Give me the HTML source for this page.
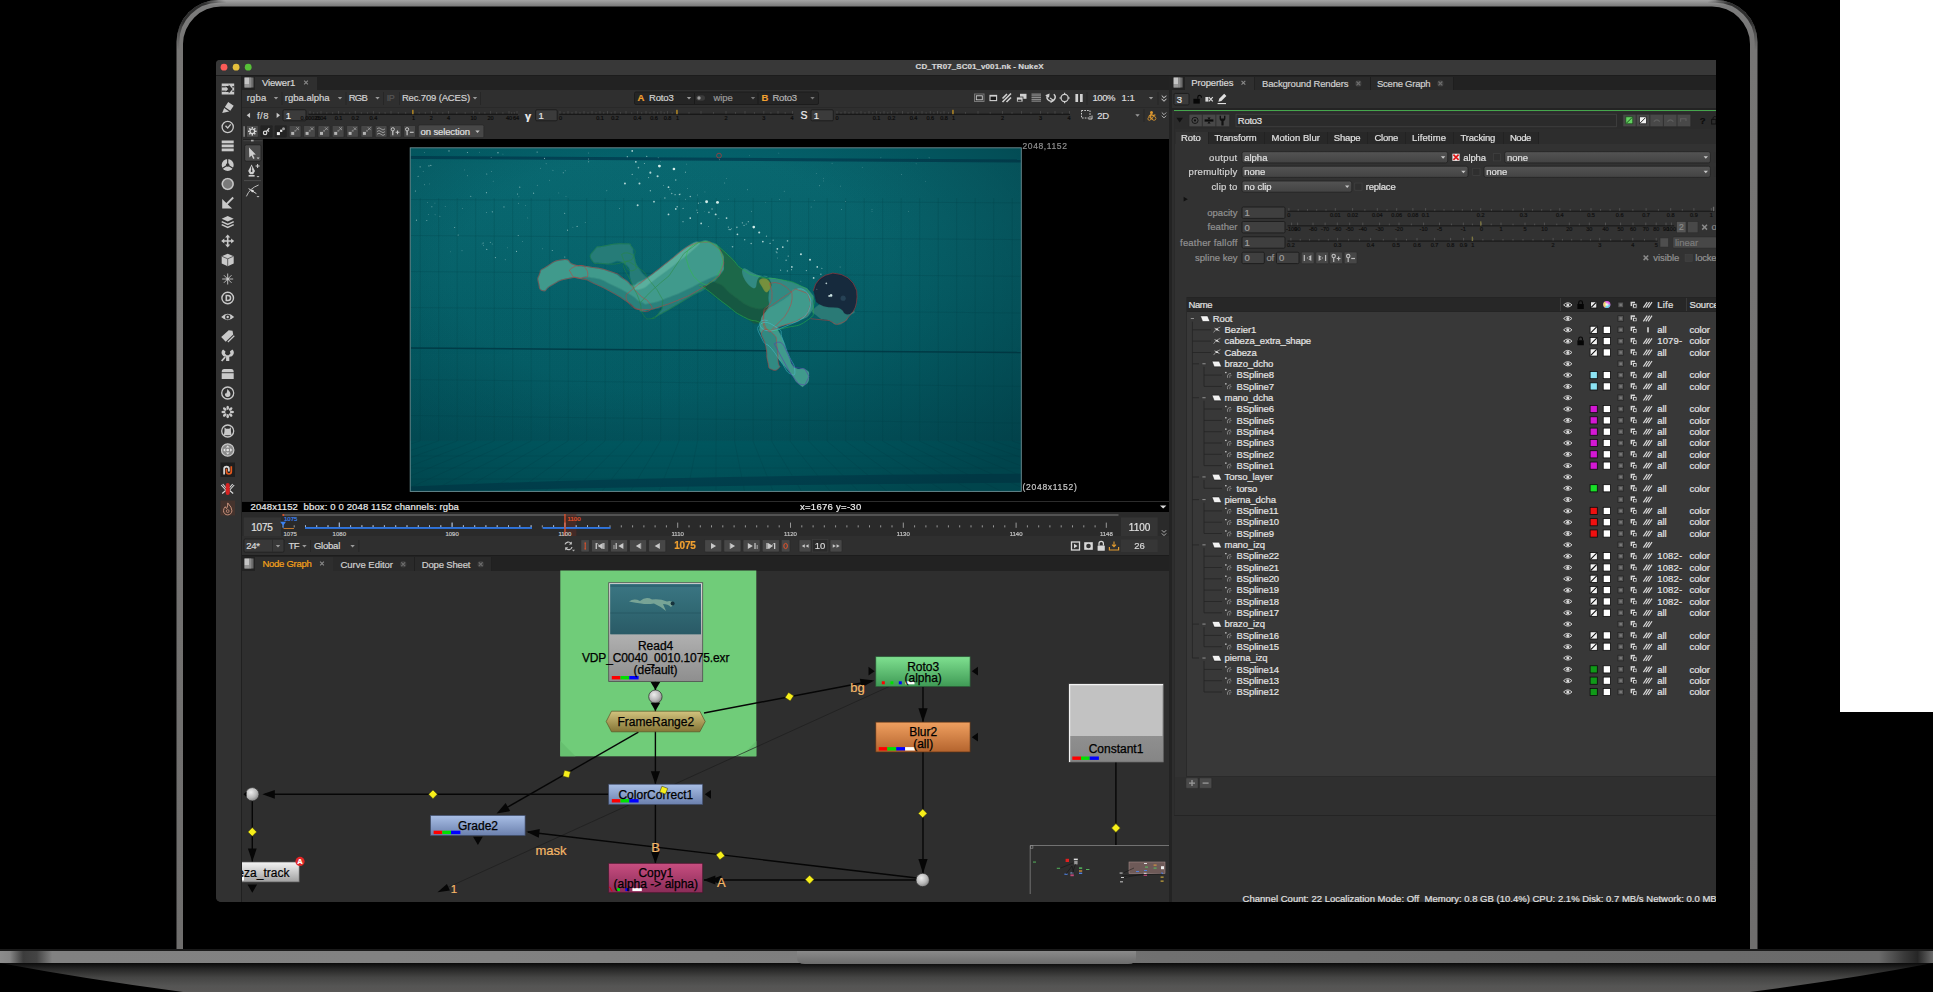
<!DOCTYPE html>
<html><head><meta charset="utf-8"><title>NukeX</title>
<style>
html,body{margin:0;padding:0;background:#000;}
body{width:1933px;height:992px;overflow:hidden;position:relative;font-family:"Liberation Sans",sans-serif;}
#r{position:absolute;left:0;top:0;width:1933px;height:992px;overflow:hidden;background:#000;}
#r>div{position:absolute;}
#r>span{position:absolute;white-space:nowrap;display:block;-webkit-text-stroke:0.2px;}
#r>svg{position:absolute;left:0;top:0;}
</style></head><body>
<div id="r">
<svg width="1933" height="992" viewBox="0 0 1933 992">
<defs>
<linearGradient id="lidg" x1="0" y1="0" x2="0" y2="1"><stop offset="0" stop-color="#a4a4a4"/><stop offset="0.006" stop-color="#7c7c7c"/><stop offset="0.05" stop-color="#777675"/><stop offset="1" stop-color="#6f6e6d"/></linearGradient>
<linearGradient id="cshL" x1="0" y1="1" x2="1" y2="0"><stop offset="0" stop-color="#2a2a2a" stop-opacity="0"/><stop offset="0.35" stop-color="#2a2a2a" stop-opacity="0.95"/><stop offset="0.75" stop-color="#2a2a2a" stop-opacity="0.95"/><stop offset="1" stop-color="#2a2a2a" stop-opacity="0"/></linearGradient>
<linearGradient id="cshR" x1="1" y1="1" x2="0" y2="0"><stop offset="0" stop-color="#2a2a2a" stop-opacity="0"/><stop offset="0.35" stop-color="#2a2a2a" stop-opacity="0.95"/><stop offset="0.75" stop-color="#2a2a2a" stop-opacity="0.95"/><stop offset="1" stop-color="#2a2a2a" stop-opacity="0"/></linearGradient>
<linearGradient id="basetop" x1="0" y1="0" x2="1933" y2="0" gradientUnits="userSpaceOnUse">
<stop offset="0" stop-color="#8c8c8c"/><stop offset="0.005" stop-color="#868686"/><stop offset="0.012" stop-color="#3c3c3c"/><stop offset="0.019" stop-color="#444"/><stop offset="0.027" stop-color="#818181"/><stop offset="0.2" stop-color="#828282"/><stop offset="0.42" stop-color="#7e7e7e"/><stop offset="0.6" stop-color="#707070"/><stop offset="0.8" stop-color="#6c6c6c"/><stop offset="0.972" stop-color="#6a6a6a"/><stop offset="0.985" stop-color="#3a3a3a"/><stop offset="0.992" stop-color="#262626"/><stop offset="1" stop-color="#6a6a6a"/></linearGradient>
<linearGradient id="basebot" x1="0" y1="0" x2="0" y2="1"><stop offset="0" stop-color="#0a0a0a"/><stop offset="0.2" stop-color="#262626"/><stop offset="0.5" stop-color="#454544"/><stop offset="0.8" stop-color="#555554"/><stop offset="1" stop-color="#585756"/></linearGradient>
<linearGradient id="notch" x1="0" y1="0" x2="0" y2="1"><stop offset="0" stop-color="#8a8a8a"/><stop offset="1" stop-color="#6c6c6c"/></linearGradient>
<linearGradient id="gGray" x1="0" y1="0" x2="0" y2="1"><stop offset="0" stop-color="#d6d6d6"/><stop offset="1" stop-color="#8e8e8e"/></linearGradient>
<linearGradient id="gGray2" x1="0" y1="0" x2="0" y2="1"><stop offset="0" stop-color="#f4f4f4"/><stop offset="1" stop-color="#a0a0a0"/></linearGradient>
<linearGradient id="gBlue" x1="0" y1="0" x2="0" y2="1"><stop offset="0" stop-color="#a9bfe6"/><stop offset="1" stop-color="#6b80ad"/></linearGradient>
<linearGradient id="gGreen" x1="0" y1="0" x2="0" y2="1"><stop offset="0" stop-color="#7fe090"/><stop offset="1" stop-color="#3f9a55"/></linearGradient>
<linearGradient id="gOrange" x1="0" y1="0" x2="0" y2="1"><stop offset="0" stop-color="#f0a060"/><stop offset="1" stop-color="#b4642e"/></linearGradient>
<linearGradient id="gMag" x1="0" y1="0" x2="0" y2="1"><stop offset="0" stop-color="#c84e80"/><stop offset="1" stop-color="#8a2c58"/></linearGradient>
<linearGradient id="gKhaki" x1="0" y1="0" x2="0" y2="1"><stop offset="0" stop-color="#d2c37e"/><stop offset="1" stop-color="#857536"/></linearGradient>
<linearGradient id="gConst" x1="0" y1="0" x2="0" y2="1"><stop offset="0" stop-color="#a4a4a4"/><stop offset="1" stop-color="#858585"/></linearGradient>
<radialGradient id="gDot" cx="0.4" cy="0.35" r="0.7"><stop offset="0" stop-color="#ededed"/><stop offset="0.6" stop-color="#b8b8b8"/><stop offset="1" stop-color="#7c7c7c"/></radialGradient>
<linearGradient id="thumb" x1="0" y1="0" x2="0" y2="1"><stop offset="0" stop-color="#3b7683"/><stop offset="0.5" stop-color="#316974"/><stop offset="1" stop-color="#2a5a66"/></linearGradient>
<linearGradient id="ddg" x1="0" y1="0" x2="0" y2="1"><stop offset="0" stop-color="#545454"/><stop offset="1" stop-color="#434343"/></linearGradient>
<radialGradient id="cw"><stop offset="0" stop-color="#fff"/><stop offset="1" stop-color="#fff" stop-opacity="0"/></radialGradient>
<clipPath id="phc"><rect x="410.2" y="147.8" width="611.0999999999999" height="343.59999999999997"/></clipPath>
<linearGradient id="water" x1="0" y1="0" x2="0" y2="1"><stop offset="0" stop-color="#096971"/><stop offset="0.2" stop-color="#08656d"/><stop offset="0.5" stop-color="#055f67"/><stop offset="0.85" stop-color="#035962"/><stop offset="0.86" stop-color="#046168"/><stop offset="1" stop-color="#04636a"/></linearGradient>
<radialGradient id="wlight" cx="0.12" cy="0.1" r="0.75"><stop offset="0" stop-color="#0a7a84" stop-opacity="0.12"/><stop offset="1" stop-color="#0a7a84" stop-opacity="0"/></radialGradient>
<radialGradient id="vig" cx="0.42" cy="0.36" r="0.78"><stop offset="0" stop-color="#003038" stop-opacity="0"/><stop offset="0.45" stop-color="#003038" stop-opacity="0.04"/><stop offset="1" stop-color="#002830" stop-opacity="0.5"/></radialGradient>
<filter id="swb" x="-5%" y="-5%" width="110%" height="110%"><feGaussianBlur stdDeviation="4"/></filter>
</defs>
<rect x="1840" y="0" width="93" height="712" fill="#fff"/>
<path d="M176.5 952 V42 A42 42 0 0 1 218.5 0 H1715.5 A42 42 0 0 1 1757.5 42 V952 Z" fill="url(#lidg)"/>
<path d="M183 952 V44 A38 38 0 0 1 221 6.5 H1712 A38 38 0 0 1 1750 44 V952 Z" fill="#000"/>
<path d="M177.9 50 V42 A40.6 40.6 0 0 1 218.5 1.4 H226" fill="none" stroke="url(#cshL)" stroke-width="2.8"/>
<path d="M1756.1 50 V42 A40.6 40.6 0 0 0 1715.5 1.4 H1708" fill="none" stroke="url(#cshR)" stroke-width="2.8"/>
<rect x="0" y="949" width="1933" height="2" fill="#1a1a1a"/>
<rect x="0" y="951" width="1933" height="12" fill="url(#basetop)"/>
<path d="M0 963 H1933 Q1850 979 1750 992 H183 Q85 979 0 963 Z" fill="url(#basebot)"/>
<path d="M797 951 H1136 V958 Q1136 964 1128 964 H805 Q797 964 797 958 Z" fill="url(#notch)"/>
</svg>
<div style="left:216px;top:60px;width:1500px;height:842px;background:#2e2e2e;border-radius:4px 0 0 5px;"></div>
<div style="left:216px;top:60px;width:1500px;height:15px;background:#383838;border-radius:4px 0 0 0;"></div>
<div style="left:216px;top:75px;width:1500px;height:1px;background:#1c1c1c;"></div>
<div style="left:216px;top:76px;width:25px;height:826px;background:#313131;border-radius:0 0 0 5px;"></div>
<div style="left:241px;top:76px;width:1px;height:826px;background:#202020;"></div>
<div style="left:242px;top:76px;width:927px;height:14px;background:#222222;"></div>
<div style="left:255px;top:77px;width:62px;height:13px;background:#2f2f2f;"></div>
<div style="left:242px;top:90px;width:927px;height:48.6px;background:#2f2f2f;"></div>
<div style="left:242px;top:106.5px;width:927px;height:1px;background:#292929;"></div>
<div style="left:242px;top:138.6px;width:927px;height:362.4px;background:#000;"></div>
<div style="left:242px;top:138.6px;width:21.3px;height:362.2px;background:#303030;"></div>
<div style="left:242px;top:500.8px;width:927px;height:1px;background:#2c2c2c;"></div>
<div style="left:242px;top:501.8px;width:927px;height:9.8px;background:#000;"></div>
<div style="left:242px;top:511.6px;width:927px;height:24.4px;background:#2a2a2a;"></div>
<div style="left:242px;top:536px;width:927px;height:19px;background:#2f2f2f;"></div>
<div style="left:242px;top:554.5px;width:927px;height:1px;background:#1c1c1c;"></div>
<div style="left:242px;top:555.5px;width:927px;height:15px;background:#222222;"></div>
<div style="left:255px;top:556.5px;width:78.4px;height:14px;background:#2e2e2e;"></div>
<div style="left:242px;top:570.5px;width:927px;height:331.5px;background:#2e2e2e;"></div>
<div style="left:1169px;top:76px;width:3px;height:826px;background:#232323;"></div>
<div style="left:1172px;top:76px;width:544px;height:14px;background:#222222;"></div>
<div style="left:1184.5px;top:77px;width:69.5px;height:13px;background:#2f2f2f;"></div>
<div style="left:1172px;top:90px;width:544px;height:17.5px;background:#2f2f2f;"></div>
<div style="left:1172px;top:107.5px;width:544px;height:2.5px;background:#232323;"></div>
<div style="left:1174px;top:110.1px;width:542px;height:1.2px;background:#46a64d;"></div>
<div style="left:1174px;top:111.5px;width:542px;height:704px;background:#323232;"></div>
<div style="left:1174px;top:111.5px;width:542px;height:17.5px;background:#2b2b2b;"></div>
<div style="left:1174px;top:129px;width:542px;height:15.4px;background:#2d2d2d;"></div>
<div style="left:1174px;top:111.5px;width:1px;height:704px;background:#2a2a2a;"></div>
<div style="left:1175px;top:776.8px;width:541px;height:38.2px;background:#2f2f2f;"></div>
<div style="left:1174px;top:815px;width:542px;height:1px;background:#242424;"></div>
<div style="left:1172px;top:816px;width:544px;height:86px;background:#2e2e2e;"></div>
<div style="left:333.4px;top:556.5px;width:80.6px;height:14px;background:#2a2a2a;"></div>
<div style="left:414px;top:556.5px;width:77px;height:14px;background:#2a2a2a;"></div>
<div style="left:413.5px;top:556.5px;width:1px;height:14px;background:#202020;"></div>
<div style="left:491px;top:556.5px;width:1px;height:14px;background:#202020;"></div>
<div style="left:1254.5px;top:77px;width:115.5px;height:13px;background:#2a2a2a;"></div>
<div style="left:1370.5px;top:77px;width:82px;height:13px;background:#2a2a2a;"></div>
<div style="left:1370px;top:77px;width:1px;height:13px;background:#1e1e1e;"></div>
<div style="left:1452.5px;top:77px;width:1px;height:13px;background:#1e1e1e;"></div>
<div style="left:1176px;top:131.6px;width:362px;height:12.8px;background:#282828;"></div>
<div style="left:1176px;top:131.6px;width:32px;height:12.8px;background:#323232;"></div>
<div style="left:1208px;top:131.6px;width:1px;height:12.8px;background:#222;"></div>
<div style="left:1264px;top:131.6px;width:1px;height:12.8px;background:#222;"></div>
<div style="left:1326.5px;top:131.6px;width:1px;height:12.8px;background:#222;"></div>
<div style="left:1367px;top:131.6px;width:1px;height:12.8px;background:#222;"></div>
<div style="left:1405px;top:131.6px;width:1px;height:12.8px;background:#222;"></div>
<div style="left:1453px;top:131.6px;width:1px;height:12.8px;background:#222;"></div>
<div style="left:1502.5px;top:131.6px;width:1px;height:12.8px;background:#222;"></div>
<div style="left:1538px;top:131.6px;width:1px;height:12.8px;background:#222;"></div>
<div style="left:1185.6px;top:297px;width:530.4px;height:479px;background:#383838;"></div>
<div style="left:1185.6px;top:297px;width:530.4px;height:14.4px;background:#272727;"></div>
<div style="left:1185.6px;top:297px;width:530.4px;height:1px;background:#242424;"></div>
<div style="left:1185.6px;top:311px;width:530.4px;height:0.8px;background:#242424;"></div>
<div style="left:1185.6px;top:297px;width:0.8px;height:479px;background:#2a2a2a;"></div>
<div style="left:1560.4px;top:298px;width:0.8px;height:13px;background:#3a3a3a;"></div>
<div style="left:1686.4px;top:298px;width:0.8px;height:13px;background:#3a3a3a;"></div>
<div style="left:1185.6px;top:776px;width:530.4px;height:0.8px;background:#2a2a2a;"></div>
<svg width="1933" height="992" viewBox="0 0 1933 992">
<circle cx="224.0" cy="67.2" r="3.4" fill="#fc5b57"/>
<circle cx="236.1" cy="67.2" r="3.4" fill="#e5bf3c"/>
<circle cx="248.2" cy="67.2" r="3.4" fill="#57c038"/>
<g transform="translate(227.7,89)"><rect x="-6" y="-5.5" width="12.5" height="11" fill="#c9c9c9"/><rect x="-6" y="-2.8" width="4" height="1.2" fill="#313131"/><rect x="-6" y="1.6" width="4" height="1.2" fill="#313131"/><path d="M-2.5 -3 H1 V-4.5 L5 0 L1 4.5 V3 H-2.5 L0.5 0 Z" fill="#313131"/><rect x="4.5" y="-2.8" width="2" height="1.2" fill="#313131"/><rect x="4.5" y="1.6" width="2" height="1.2" fill="#313131"/></g>
<g transform="translate(227.7,107.5)"><path d="M-5.5 5.5 L-3.5 0.5 L1.5 4 Z M-2.8 -0.6 L0.5 -5.5 L6 -1.8 L2.6 3.2 Z" fill="#c9c9c9"/></g>
<g transform="translate(227.7,127)"><circle r="5.6" fill="none" stroke="#c9c9c9" stroke-width="1.3"/><path d="M-2.2 -1.2 L0 1 L3 -2.6" fill="none" stroke="#c9c9c9" stroke-width="1.3"/></g>
<g transform="translate(227.7,146)"><rect x="-6" y="-5.5" width="12" height="2.8" fill="#c9c9c9"/><rect x="-6" y="-1.5" width="12" height="2.8" fill="#c9c9c9"/><rect x="-6" y="2.5" width="12" height="2.8" fill="#c9c9c9"/></g>
<g transform="translate(227.7,165)"><circle r="6" fill="#c9c9c9"/><path d="M0 0 V-6 M0 0 L5.2 3.2 M0 0 L-5.2 3.2" stroke="#313131" stroke-width="1.2"/><circle r="1.8" fill="#313131"/></g>
<g transform="translate(227.7,184)"><circle r="6.2" fill="#7a7a7a"/><circle r="5.4" fill="none" stroke="#c9c9c9" stroke-width="1.4"/></g>
<g transform="translate(227.7,203)"><path d="M-5.5 -4 V5.5 H4.5 L-0.5 1 Z" fill="#c9c9c9"/><path d="M5.5 -5.5 L-2 2" stroke="#c9c9c9" stroke-width="1.8"/><path d="M-3.5 3.8 L-2.8 -0.8 L1.2 3.2 Z" fill="#c9c9c9"/></g>
<g transform="translate(227.7,222)"><path d="M0 -6 L6 -3.2 L0 -0.4 L-6 -3.2 Z" fill="#c9c9c9"/><path d="M-6 -0.4 L0 2.4 L6 -0.4 M-6 2.6 L0 5.4 L6 2.6" fill="none" stroke="#c9c9c9" stroke-width="1.5"/></g>
<g transform="translate(227.7,241)"><path d="M0 -6.5 L2.6 -3.4 H0.8 V-0.8 H3.4 V-2.6 L6.5 0 L3.4 2.6 V0.8 H0.8 V3.4 H2.6 L0 6.5 L-2.6 3.4 H-0.8 V0.8 H-3.4 V2.6 L-6.5 0 L-3.4 -2.6 V-0.8 H-0.8 V-3.4 H-2.6 Z" fill="#c9c9c9"/></g>
<g transform="translate(227.7,260)"><path d="M0 -6.3 L6 -3.8 V3.4 L0 6.3 L-6 3.4 V-3.8 Z" fill="#c9c9c9"/><path d="M-6 -3.8 L0 -1.2 L6 -3.8 M0 -1.2 V6.3" fill="none" stroke="#555" stroke-width="0.9"/></g>
<g transform="translate(227.7,279)"><path d="M0 -5.5 V5.5 M-5.5 0 H5.5 M-3.8 -3.8 L3.8 3.8 M-3.8 3.8 L3.8 -3.8" stroke="#c9c9c9" stroke-width="0.9"/><circle r="1.3" fill="#c9c9c9"/></g>
<g transform="translate(227.7,298)"><circle r="5.8" fill="none" stroke="#c9c9c9" stroke-width="1.4"/><path d="M-2.2 -3.3 H0.3 A3.3 3.3 0 0 1 0.3 3.3 H-2.2 Z M-0.6 -1.8 V1.8 H0.3 A1.8 1.8 0 0 0 0.3 -1.8 Z" fill="#c9c9c9" fill-rule="evenodd"/></g>
<g transform="translate(227.7,317)"><path d="M-6.5 0 Q0 -6.4 6.5 0 Q0 6.4 -6.5 0 Z" fill="#c9c9c9"/><circle r="2.6" fill="#313131"/><circle r="1.2" fill="#c9c9c9"/></g>
<g transform="translate(227.7,336)"><path d="M-6.5 1 L1 -5.8 L4.8 -5.3 L5.5 -1.5 L-2 5.8 Z" fill="#c9c9c9"/><path d="M0.2 6 L6.6 -0.2" stroke="#c9c9c9" stroke-width="1.2"/></g>
<g transform="translate(227.7,355)"><path d="M-4.6 -5.6 L-2.2 -3.4 L-2.8 -1.6 L-1 0.2 L1 0.2 L2.8 -1.6 L2.2 -3.4 L4.6 -5.6 A4.2 4.2 0 0 1 1.6 1.8 V6 H-1.6 V1.8 A4.2 4.2 0 0 1 -4.6 -5.6 Z" fill="#c9c9c9"/><path d="M-6 6 L-2.5 2" stroke="#c9c9c9" stroke-width="1.8"/></g>
<g transform="translate(227.7,374)"><path d="M-6 -1.8 Q-6 -5 -3.5 -5 H3.5 Q6 -5 6 -1.8 Z" fill="#c9c9c9"/><rect x="-6" y="-0.8" width="12" height="5.8" fill="#c9c9c9"/></g>
<g transform="translate(227.7,393)"><circle r="6" fill="none" stroke="#c9c9c9" stroke-width="1.3"/><path d="M-0.5 -4 Q3.6 -0.6 2.6 2.4 Q1.4 4.4 -0.8 4 Q-3.4 3 -2.6 0.2 Q-1.2 1.2 -1 -0.4 Q-0.4 -2.2 -0.5 -4 Z" fill="#c9c9c9"/></g>
<g transform="translate(227.7,412)"><ellipse cx="0" cy="-4.2" rx="1.3" ry="2.1" transform="rotate(0)" fill="#c9c9c9"/><ellipse cx="0" cy="-4.2" rx="1.3" ry="2.1" transform="rotate(45)" fill="#c9c9c9"/><ellipse cx="0" cy="-4.2" rx="1.3" ry="2.1" transform="rotate(90)" fill="#c9c9c9"/><ellipse cx="0" cy="-4.2" rx="1.3" ry="2.1" transform="rotate(135)" fill="#c9c9c9"/><ellipse cx="0" cy="-4.2" rx="1.3" ry="2.1" transform="rotate(180)" fill="#c9c9c9"/><ellipse cx="0" cy="-4.2" rx="1.3" ry="2.1" transform="rotate(225)" fill="#c9c9c9"/><ellipse cx="0" cy="-4.2" rx="1.3" ry="2.1" transform="rotate(270)" fill="#c9c9c9"/><ellipse cx="0" cy="-4.2" rx="1.3" ry="2.1" transform="rotate(315)" fill="#c9c9c9"/></g>
<g transform="translate(227.7,431)"><circle r="6" fill="none" stroke="#c9c9c9" stroke-width="1.3"/><path d="M-3.2 -3.8 L-1.6 -2.2 H1.6 L3.2 -3.8 V0 Q3.4 1.5 3.8 4.2 H-3.8 Q-3.4 1.5 -3.2 0 Z" fill="#c9c9c9"/></g>
<g transform="translate(227.7,450)"><circle r="6.2" fill="#8a8a8a" stroke="#c9c9c9" stroke-width="1.2"/><path d="M0 -4.6 L1.8 -2.4 H-1.8 Z M0 4.6 L1.8 2.4 H-1.8 Z M-4.6 0 L-2.4 -1.8 V1.8 Z M4.6 0 L2.4 -1.8 V1.8 Z" fill="#e4e4e4"/><circle r="1.3" fill="#e4e4e4"/></g>
<rect x="220.5" y="462.5" width="14.5" height="14.5" fill="#1e1e1e"/>
<g transform="translate(227.7,470)"><path d="M-3.6 4.4 V-1 A2.4 2.4 0 0 1 1.2 -1 V1.6" fill="none" stroke="#d8d8d8" stroke-width="1.7"/><path d="M-1.2 -1.2 V1.6 A2.4 2.4 0 0 0 3.6 1.6 V-3.8" fill="none" stroke="#e5591e" stroke-width="1.7"/></g>
<g transform="translate(227.7,489)"><path d="M-6.5 -4 L-2 1 M-5 -5 L-1.6 -1 M6.5 -4 L2 1 M5 -5 L1.6 -1 M-5.5 4.5 L-2 1.5 M5.5 4.5 L2 1.5" stroke="#ddd" stroke-width="1.1"/><rect x="-2" y="-6" width="4" height="12" rx="2" fill="#d42222"/></g>
<rect x="220.5" y="500.5" width="14.5" height="15" fill="#45332d"/>
<g transform="translate(227.7,508.5)"><path d="M0 -5.6 Q4.4 -1 4.2 2.2 A4.2 4.2 0 0 1 -4.2 2.2 Q-4 -0.4 -2.4 -1.8 Q-1.8 0 -1 0 Q0.4 -2.4 0 -5.6 Z" fill="none" stroke="#c9927c" stroke-width="1"/><circle cy="2.6" r="1.4" fill="none" stroke="#c9927c" stroke-width="0.8"/></g>
<rect x="244.5" y="77.5" width="9" height="10" fill="#6a6a6a"/><rect x="244.5" y="77.5" width="4.5" height="6.5" fill="#c4c4c4"/><rect x="249.0" y="77.5" width="2.3" height="10" fill="#8c8c8c"/><rect x="244.5" y="84.0" width="4.5" height="3.5" fill="#999"/>
<path d="M304.1 80.6 L307.9 84.4 M304.1 84.4 L307.9 80.6" stroke="#8a8a8a" stroke-width="1.1"/>
<path d="M273.8 97 H278.2 L276 99.4 Z" fill="#9a9a9a"/>
<rect x="281.5" y="92" width="1" height="13" fill="#262626"/>
<path d="M337.8 97 H342.2 L340 99.4 Z" fill="#9a9a9a"/>
<rect x="345.5" y="92" width="1" height="13" fill="#262626"/>
<path d="M375.3 97 H379.7 L377.5 99.4 Z" fill="#9a9a9a"/>
<rect x="383" y="92" width="1" height="13" fill="#262626"/>
<rect x="399" y="92" width="1" height="13" fill="#262626"/>
<path d="M472.8 97 H477.2 L475 99.4 Z" fill="#9a9a9a"/>
<rect x="480" y="92" width="1" height="13" fill="#262626"/>
<rect x="634.5" y="92" width="184" height="12.5" rx="1.5" fill="#252525" stroke="#1c1c1c" stroke-width="1"/>
<path d="M686.8 97 H691.2 L689 99.4 Z" fill="#9a9a9a"/>
<rect x="694" y="93" width="1" height="11" fill="#1a1a1a"/>
<rect x="696" y="95.2" width="9" height="5.6" rx="2.8" fill="#3a3a3a"/><circle cx="699" cy="98" r="1.7" fill="#9a9a9a"/>
<path d="M750.8 97 H755.2 L753 99.4 Z" fill="#777"/>
<rect x="757.5" y="93" width="1" height="11" fill="#1a1a1a"/>
<path d="M810.3 97 H814.7 L812.5 99.4 Z" fill="#777"/>
<rect x="974.5" y="94" width="9.5" height="7.5" fill="none" stroke="#777" stroke-width="1"/><rect x="976.3" y="95.8" width="6" height="4" fill="none" stroke="#d0d0d0" stroke-width="0.9"/>
<rect x="990" y="95.4" width="6.6" height="5.2" fill="#1a1a1a" stroke="#d0d0d0" stroke-width="1.1"/><rect x="990" y="95" width="6.6" height="1.6" fill="#d0d0d0"/>
<g stroke="#d0d0d0" stroke-width="1.6"><path d="M1002.5 98.5 L1007 94 M1002.5 102 L1011 93.5 M1006.5 102 L1011 97.5"/></g>
<rect x="1020" y="93.8" width="6.5" height="5" fill="#d0d0d0"/><rect x="1016.5" y="97" width="6.5" height="5" fill="#d0d0d0" stroke="#323232" stroke-width="0.8"/><rect x="1017.8" y="99.6" width="3.6" height="1.6" fill="#323232"/>
<g fill="#9a9a9a"><rect x="1031.5" y="93.60" width="9.5" height="1" /><rect x="1031.5" y="95.35" width="9.5" height="1" /><rect x="1031.5" y="97.10" width="9.5" height="1" /><rect x="1031.5" y="98.85" width="9.5" height="1" /><rect x="1031.5" y="100.60" width="9.5" height="1" /></g>
<path d="M1053.8 94.2 A4 4 0 1 1 1047.4 95.6" fill="none" stroke="#d0d0d0" stroke-width="1.5"/><path d="M1045.2 95.2 L1049.6 93.4 L1049 97.8 Z" fill="#d0d0d0"/><path d="M1050 98 L1053.4 100.2 L1050.6 102.6" fill="none" stroke="#d0d0d0" stroke-width="1.1"/>
<circle cx="1064.6" cy="98" r="3.6" fill="none" stroke="#d0d0d0" stroke-width="1.2"/><path d="M1064.6 92.8 V95 M1064.6 101 V103.2 M1059.4 98 H1061.6 M1067.6 98 H1069.8" stroke="#d0d0d0" stroke-width="1.2"/>
<rect x="1075.4" y="94" width="2.7" height="8" fill="#d0d0d0"/><rect x="1080" y="94" width="2.7" height="8" fill="#d0d0d0"/>
<rect x="1086.5" y="92" width="1" height="13" fill="#262626"/>
<path d="M1148.8 97 H1153.2 L1151 99.4 Z" fill="#9a9a9a"/>
<rect x="1157.5" y="92" width="1" height="13" fill="#262626"/>
<path d="M1161.8 95.5 L1164 97.7 L1166.2 95.5 M1161.8 98.7 L1164 100.9 L1166.2 98.7" fill="none" stroke="#b0b0b0" stroke-width="1"/>
<path d="M250.06 112.7 V117.89999999999999 L246.68 115.3 Z" fill="#c8c8c8"/>
<path d="M276.64 112.7 V117.89999999999999 L280.02 115.3 Z" fill="#c8c8c8"/>
<rect x="283" y="109.8" width="23" height="11" rx="1.2" fill="#3b3b3b" stroke="#1b1b1b" stroke-width="0.9"/>
<rect x="308.5" y="113.6" width="209.5" height="1.4" fill="#181818"/>
<path d="M310.0 111.1 V113.7M313.7 112.1 V113.7M317.3 112.1 V113.7M321.0 111.1 V113.7M326.8 112.1 V113.7M332.7 112.1 V113.7M338.5 111.1 V113.7M344.1 112.1 V113.7M349.7 112.1 V113.7M355.3 111.1 V113.7M361.3 112.1 V113.7M367.4 112.1 V113.7M373.4 111.1 V113.7M379.3 112.1 V113.7M385.1 112.1 V113.7M391.0 111.1 V113.7M398.3 112.1 V113.7M405.7 112.1 V113.7M413.0 111.1 V113.7M419.1 112.1 V113.7M425.3 112.1 V113.7M431.4 111.1 V113.7M437.1 112.1 V113.7M442.8 112.1 V113.7M448.5 111.1 V113.7M456.8 112.1 V113.7M465.2 112.1 V113.7M473.5 111.1 V113.7M479.2 112.1 V113.7M484.9 112.1 V113.7M490.6 111.1 V113.7M496.7 112.1 V113.7M502.9 112.1 V113.7M509.0 111.1 V113.7M511.7 112.1 V113.7M514.3 112.1 V113.7M517.0 111.1 V113.7" stroke="#4c4c4c" stroke-width="0.8" fill="none"/>
<rect x="412.2" y="109.8" width="1.3" height="4.4" fill="#c09020"/>
<rect x="535.7" y="109.8" width="21.5" height="11" rx="1.2" fill="#3b3b3b" stroke="#1b1b1b" stroke-width="0.9"/>
<rect x="559.3" y="113.6" width="234.10000000000002" height="1.4" fill="#181818"/>
<path d="M560.0 111.1 V113.7M564.0 112.1 V113.7M568.0 111.1 V113.7M572.0 112.1 V113.7M576.0 111.1 V113.7M580.0 112.1 V113.7M584.0 111.1 V113.7M588.0 112.1 V113.7M592.0 111.1 V113.7M596.0 112.1 V113.7M600.0 111.1 V113.7M603.8 112.1 V113.7M607.5 111.1 V113.7M611.2 112.1 V113.7M615.0 111.1 V113.7M620.5 112.1 V113.7M626.0 111.1 V113.7M631.7 112.1 V113.7M637.4 111.1 V113.7M641.7 112.1 V113.7M646.0 111.1 V113.7M650.0 112.1 V113.7M654.0 111.1 V113.7M657.5 112.1 V113.7M661.0 111.1 V113.7M664.2 112.1 V113.7M667.5 111.1 V113.7M672.2 112.1 V113.7M677.0 111.1 V113.7M689.0 112.1 V113.7M701.0 111.1 V113.7M713.5 112.1 V113.7M726.0 111.1 V113.7M735.5 112.1 V113.7M745.0 111.1 V113.7M754.4 112.1 V113.7M763.8 111.1 V113.7M770.9 112.1 V113.7M778.0 111.1 V113.7M785.2 112.1 V113.7M792.5 111.1 V113.7" stroke="#4c4c4c" stroke-width="0.8" fill="none"/>
<rect x="676.3" y="109.8" width="1.3" height="4.4" fill="#c09020"/>
<rect x="811" y="109.8" width="22.3" height="11" rx="1.2" fill="#3b3b3b" stroke="#1b1b1b" stroke-width="0.9"/>
<rect x="835.8" y="113.6" width="234.20000000000005" height="1.4" fill="#181818"/>
<path d="M837.0 111.1 V113.7M841.0 112.1 V113.7M845.0 111.1 V113.7M849.0 112.1 V113.7M853.0 111.1 V113.7M857.0 112.1 V113.7M861.0 111.1 V113.7M865.0 112.1 V113.7M869.0 111.1 V113.7M872.8 112.1 V113.7M876.6 111.1 V113.7M880.3 112.1 V113.7M884.0 111.1 V113.7M887.8 112.1 V113.7M891.5 111.1 V113.7M897.0 112.1 V113.7M902.5 111.1 V113.7M908.0 112.1 V113.7M913.5 111.1 V113.7M917.8 112.1 V113.7M922.0 111.1 V113.7M926.1 112.1 V113.7M930.3 111.1 V113.7M933.9 112.1 V113.7M937.5 111.1 V113.7M940.8 112.1 V113.7M944.0 111.1 V113.7M948.5 112.1 V113.7M953.0 111.1 V113.7M965.5 112.1 V113.7M978.0 111.1 V113.7M990.2 112.1 V113.7M1002.5 111.1 V113.7M1012.0 112.1 V113.7M1021.5 111.1 V113.7M1031.0 112.1 V113.7M1040.5 111.1 V113.7M1047.8 112.1 V113.7M1055.0 111.1 V113.7M1062.2 112.1 V113.7M1069.5 111.1 V113.7" stroke="#4c4c4c" stroke-width="0.8" fill="none"/>
<rect x="952.3" y="109.8" width="1.3" height="4.4" fill="#c09020"/>
<rect x="1081.5" y="110.5" width="8.5" height="7.5" fill="none" stroke="#cfcfcf" stroke-width="1" stroke-dasharray="1.6 1.2"/><path d="M1088.5 119 H1092 V115.5" fill="none" stroke="#cfcfcf" stroke-width="1"/>
<path d="M1135.3 114.3 H1139.7 L1137.5 116.7 Z" fill="#9a9a9a"/>
<rect x="1143.5" y="109" width="1" height="13" fill="#262626"/>
<circle cx="1151.5" cy="112.6" r="1.5" fill="#e09a30"/><path d="M1148.6 116.6 L1151 114.4 L1153.4 115.6 L1155.4 114.8 M1151 114.4 L1150.6 117.4 L1152.4 119.6" fill="none" stroke="#e09a30" stroke-width="1.1"/><circle cx="1154" cy="118.4" r="1.9" fill="none" stroke="#e09a30" stroke-width="0.8"/><circle cx="1149.4" cy="118.8" r="1.5" fill="none" stroke="#e09a30" stroke-width="0.8"/>
<path d="M1161.8 112.5 L1164 114.7 L1166.2 112.5 M1161.8 115.7 L1164 117.9 L1166.2 115.7" fill="none" stroke="#b0b0b0" stroke-width="1"/>
<rect x="243.4" y="126.2" width="1.4" height="10.6" fill="#8a8a8a"/>
<rect x="246.5" y="125.50000000000001" width="11.8" height="11.8" rx="1" fill="#4c4c4c" stroke="#262626" stroke-width="0.6"/>
<rect x="260.7" y="125.50000000000001" width="11.8" height="11.8" rx="1" fill="#232323" stroke="#262626" stroke-width="0.6"/>
<rect x="274.9" y="125.50000000000001" width="11.8" height="11.8" rx="1" fill="#232323" stroke="#262626" stroke-width="0.6"/>
<rect x="289.2" y="125.50000000000001" width="11.8" height="11.8" rx="1" fill="#474747" stroke="#262626" stroke-width="0.6"/>
<rect x="303.59999999999997" y="125.50000000000001" width="11.8" height="11.8" rx="1" fill="#474747" stroke="#262626" stroke-width="0.6"/>
<rect x="318.0" y="125.50000000000001" width="11.8" height="11.8" rx="1" fill="#474747" stroke="#262626" stroke-width="0.6"/>
<rect x="332.2" y="125.50000000000001" width="11.8" height="11.8" rx="1" fill="#474747" stroke="#262626" stroke-width="0.6"/>
<rect x="346.59999999999997" y="125.50000000000001" width="11.8" height="11.8" rx="1" fill="#474747" stroke="#262626" stroke-width="0.6"/>
<rect x="360.9" y="125.50000000000001" width="11.8" height="11.8" rx="1" fill="#474747" stroke="#262626" stroke-width="0.6"/>
<rect x="375.2" y="125.50000000000001" width="11.8" height="11.8" rx="1" fill="#474747" stroke="#262626" stroke-width="0.6"/>
<rect x="389.4" y="125.50000000000001" width="11.8" height="11.8" rx="1" fill="#474747" stroke="#262626" stroke-width="0.6"/>
<rect x="403.7" y="125.50000000000001" width="11.8" height="11.8" rx="1" fill="#474747" stroke="#262626" stroke-width="0.6"/>
<circle cx="252.3" cy="131.3" r="2.3" fill="none" stroke="#dadada" stroke-width="1.2"/><rect x="251.60000000000002" y="127.00000000000001" width="1.4" height="1.6" fill="#dadada" transform="rotate(0 252.3 131.3)"/><rect x="251.60000000000002" y="127.00000000000001" width="1.4" height="1.6" fill="#dadada" transform="rotate(45 252.3 131.3)"/><rect x="251.60000000000002" y="127.00000000000001" width="1.4" height="1.6" fill="#dadada" transform="rotate(90 252.3 131.3)"/><rect x="251.60000000000002" y="127.00000000000001" width="1.4" height="1.6" fill="#dadada" transform="rotate(135 252.3 131.3)"/><rect x="251.60000000000002" y="127.00000000000001" width="1.4" height="1.6" fill="#dadada" transform="rotate(180 252.3 131.3)"/><rect x="251.60000000000002" y="127.00000000000001" width="1.4" height="1.6" fill="#dadada" transform="rotate(225 252.3 131.3)"/><rect x="251.60000000000002" y="127.00000000000001" width="1.4" height="1.6" fill="#dadada" transform="rotate(270 252.3 131.3)"/><rect x="251.60000000000002" y="127.00000000000001" width="1.4" height="1.6" fill="#dadada" transform="rotate(315 252.3 131.3)"/>
<circle cx="265.1" cy="132.9" r="1.7" fill="none" stroke="#dadada" stroke-width="1.2"/><path d="M266.3 131.70000000000002 L269.3 128.10000000000002 M267.3 130.3 L269.1 131.5" stroke="#dadada" stroke-width="1.2" fill="none"/>
<rect x="276.9" y="132.10000000000002" width="3" height="3" fill="#f0f0f0"/><rect x="280.09999999999997" y="129.70000000000002" width="2.2" height="2.2" fill="#f0f0f0"/><circle cx="283.5" cy="128.70000000000002" r="1.5" fill="#9a9a9a"/>
<rect x="291.2" y="131.9" width="3" height="3" fill="#b4b4b4"/><rect x="294.4" y="129.9" width="1.8" height="1.8" fill="#7c7c7c"/><path d="M296.2 127.30000000000001 L299 130.10000000000002 M299 127.30000000000001 L296.2 130.10000000000002" stroke="#a2a2a2" stroke-width="0.8"/>
<rect x="305.59999999999997" y="131.9" width="3" height="3" fill="#b4b4b4"/><rect x="308.79999999999995" y="129.9" width="1.8" height="1.8" fill="#7c7c7c"/><path d="M310.59999999999997 127.30000000000001 L313.4 130.10000000000002 M313.4 127.30000000000001 L310.59999999999997 130.10000000000002" stroke="#a2a2a2" stroke-width="0.8"/>
<rect x="320.0" y="131.9" width="3" height="3" fill="#b4b4b4"/><rect x="323.2" y="129.9" width="1.8" height="1.8" fill="#7c7c7c"/><path d="M325.0 127.30000000000001 L327.8 130.10000000000002 M327.8 127.30000000000001 L325.0 130.10000000000002" stroke="#a2a2a2" stroke-width="0.8"/>
<rect x="334.2" y="131.9" width="3" height="3" fill="#b4b4b4"/><rect x="337.4" y="129.9" width="1.8" height="1.8" fill="#7c7c7c"/><path d="M339.2 127.30000000000001 L342 130.10000000000002 M342 127.30000000000001 L339.2 130.10000000000002" stroke="#a2a2a2" stroke-width="0.8"/>
<rect x="348.59999999999997" y="131.9" width="3" height="3" fill="#b4b4b4"/><rect x="351.79999999999995" y="129.9" width="1.8" height="1.8" fill="#7c7c7c"/><path d="M353.59999999999997 127.30000000000001 L356.4 130.10000000000002 M356.4 127.30000000000001 L353.59999999999997 130.10000000000002" stroke="#a2a2a2" stroke-width="0.8"/>
<rect x="362.9" y="131.9" width="3" height="3" fill="#b4b4b4"/><rect x="366.09999999999997" y="129.9" width="1.8" height="1.8" fill="#7c7c7c"/><path d="M367.9 127.30000000000001 L370.7 130.10000000000002 M370.7 127.30000000000001 L367.9 130.10000000000002" stroke="#a2a2a2" stroke-width="0.8"/>
<path d="M377 128.9 q2 -2.2 4 0 t4 0 M377 131.60000000000002 q2 -2.2 4 0 t4 0 M377 134.3 q2 -2.2 4 0 t4 0" fill="none" stroke="#a2a2a2" stroke-width="0.9"/>
<circle cx="392.8" cy="129.3" r="1.6" fill="none" stroke="#c8c8c8" stroke-width="1"/><path d="M392.8 130.9 V135.3" stroke="#c8c8c8" stroke-width="1.2"/><path d="M395.59999999999997 132.3 H399.4 M397.5 130.4 V134.20000000000002" stroke="#c8c8c8" stroke-width="1.1"/>
<circle cx="407.1" cy="129.3" r="1.6" fill="none" stroke="#c8c8c8" stroke-width="1"/><path d="M407.1 130.9 V135.3" stroke="#c8c8c8" stroke-width="1.2"/><path d="M409.9 132.3 H413.7" stroke="#c8c8c8" stroke-width="1.1"/>
<rect x="418.3" y="124.9" width="65.6" height="12.8" rx="1.5" fill="#474747" stroke="#262626" stroke-width="0.7"/>
<path d="M475.3 130.5 H479.7 L477.5 132.9 Z" fill="#c0c0c0"/>
<rect x="243" y="139.2" width="20" height="0.8" fill="#1e1e1e"/><rect x="243.4" y="140.4" width="19" height="0.8" fill="#484848"/><rect x="251" y="139.8" width="2.6" height="1.6" fill="#aaa"/>
<rect x="244.7" y="144.8" width="16.3" height="16.4" rx="1.6" fill="#4c4c4c" stroke="#1e1e1e" stroke-width="0.8"/>
<path d="M249 147.6 L255.8 154.6 L252.9 154.8 L254.6 158.2 L253.2 158.9 L251.6 155.5 L249.3 157.6 Z" fill="#d0d0d0"/><path d="M256.6 157.6 h3 l-1.5 1.6 Z" fill="#c8c8c8"/>
<path d="M251.6 164.6 L255 171 L253.2 174.2 H250 L248.2 171 Z" fill="#d0d0d0"/><path d="M251.6 166.6 V170.4" stroke="#303030" stroke-width="0.9"/><circle cx="251.6" cy="171" r="0.9" fill="#303030"/><rect x="248.6" y="175" width="6" height="1.6" fill="#d0d0d0"/><path d="M257.6 164 V168 M255.6 166 H259.6" stroke="#d0d0d0" stroke-width="1"/><path d="M256.5 176 h3 l-1.5 1.6 Z" fill="#c0c0c0"/>
<rect x="244" y="180.3" width="17" height="0.8" fill="#555"/>
<path d="M246.4 196.4 Q249.5 188.4 258.6 185" fill="none" stroke="#bdbdbd" stroke-width="1"/><path d="M248.6 188.6 L256.4 193.6" stroke="#d8d8d8" stroke-width="1"/><circle cx="252.5" cy="191" r="1.3" fill="#ddd"/><path d="M256.5 196 h3 l-1.5 1.6 Z" fill="#c0c0c0"/>
<path d="M1160 505.5 h6.4 l-3.2 3 Z" fill="#ddd"/>
<rect x="283" y="514.2" width="835.5" height="1.6" fill="#5c5c5c"/><rect x="282.4" y="514.1" width="1.8" height="1.8" fill="#e2522a"/>
<rect x="243.7" y="517.5" width="37.3" height="18.5" fill="#343434"/>
<rect x="1121" y="517.5" width="36.7" height="18.5" fill="#343434"/>
<path d="M1161.8 530.2 L1164 532.4000000000001 L1166.2 530.2 M1161.8 533.4000000000001 L1164 535.6 L1166.2 533.4000000000001" fill="none" stroke="#b0b0b0" stroke-width="1"/>
<rect x="564.9" y="514" width="11.5" height="22" fill="#5a2a22" opacity="0.55"/>
<path d="M282.9 525.3 V527.4M294.2 525.3 V527.4M305.5 525.3 V527.4M316.7 525.3 V527.4M328.0 525.3 V527.4M339.3 522.6 V527.8M350.6 525.3 V527.4M361.9 525.3 V527.4M373.1 525.3 V527.4M384.4 525.3 V527.4M395.7 525.3 V527.4M407.0 525.3 V527.4M418.3 525.3 V527.4M429.5 525.3 V527.4M440.8 525.3 V527.4M452.1 522.6 V527.8M463.4 525.3 V527.4M474.7 525.3 V527.4M485.9 525.3 V527.4M497.2 525.3 V527.4M508.5 525.3 V527.4M519.8 525.3 V527.4M531.1 525.3 V527.4M542.3 525.3 V527.4M553.6 525.3 V527.4M564.9 522.6 V527.8M576.2 525.3 V527.4M587.5 525.3 V527.4M598.7 525.3 V527.4M610.0 525.3 V527.4M621.3 525.3 V527.4M632.6 525.3 V527.4M643.9 525.3 V527.4M655.1 525.3 V527.4M666.4 525.3 V527.4M677.7 522.6 V527.8M689.0 525.3 V527.4M700.3 525.3 V527.4M711.5 525.3 V527.4M722.8 525.3 V527.4M734.1 525.3 V527.4M745.4 525.3 V527.4M756.7 525.3 V527.4M767.9 525.3 V527.4M779.2 525.3 V527.4M790.5 522.6 V527.8M801.8 525.3 V527.4M813.1 525.3 V527.4M824.3 525.3 V527.4M835.6 525.3 V527.4M846.9 525.3 V527.4M858.2 525.3 V527.4M869.5 525.3 V527.4M880.7 525.3 V527.4M892.0 525.3 V527.4M903.3 522.6 V527.8M914.6 525.3 V527.4M925.9 525.3 V527.4M937.1 525.3 V527.4M948.4 525.3 V527.4M959.7 525.3 V527.4M971.0 525.3 V527.4M982.3 525.3 V527.4M993.5 525.3 V527.4M1004.8 525.3 V527.4M1016.1 522.6 V527.8M1027.4 525.3 V527.4M1038.7 525.3 V527.4M1049.9 525.3 V527.4M1061.2 525.3 V527.4M1072.5 525.3 V527.4M1083.8 525.3 V527.4M1095.1 525.3 V527.4M1106.3 522.6 V527.8" stroke="#b4b4b4" stroke-width="0.8" fill="none"/>
<rect x="305" y="527" width="227" height="1.9" fill="#2f74dc"/><rect x="542.6" y="527" width="68" height="1.9" fill="#2f74dc"/>
<path d="M305.5 525.3 V526.8M316.7 525.3 V526.8M328.0 525.3 V526.8M339.3 522.6 V526.8M350.6 525.3 V526.8M361.9 525.3 V526.8M373.1 525.3 V526.8M384.4 525.3 V526.8M395.7 525.3 V526.8M407.0 525.3 V526.8M418.3 525.3 V526.8M429.5 525.3 V526.8M440.8 525.3 V526.8M452.1 522.6 V526.8M463.4 525.3 V526.8M474.7 525.3 V526.8M485.9 525.3 V526.8M497.2 525.3 V526.8M508.5 525.3 V526.8M519.8 525.3 V526.8M531.1 525.3 V526.8M553.6 525.3 V526.8M564.9 522.6 V526.8M576.2 525.3 V526.8M587.5 525.3 V526.8M598.7 525.3 V526.8" stroke="#a8c4ee" stroke-width="0.8" fill="none"/>
<path d="M280.2 521.8 H286 L283.1 525.8 Z" fill="#3b82f0"/><rect x="282.7" y="522" width="0.9" height="6" fill="#3b82f0"/>
<rect x="283.5" y="528" width="10.5" height="0.9" fill="#d08030"/>
<rect x="564.3" y="514" width="1.3" height="22" fill="#e2522a"/>
<rect x="244" y="539" width="40" height="13.2" rx="1.2" fill="#383838" stroke="#1e1e1e" stroke-width="0.8"/><rect x="272" y="539.4" width="0.8" height="12.4" fill="#2a2a2a"/>
<path d="M275.8 545 H280.2 L278 547.4 Z" fill="#9a9a9a"/>
<path d="M302.2 545 H306.59999999999997 L304.4 547.4 Z" fill="#9a9a9a"/>
<rect x="310" y="540" width="1" height="12" fill="#262626"/>
<path d="M350.40000000000003 545 H354.8 L352.6 547.4 Z" fill="#9a9a9a"/>
<rect x="358.3" y="540" width="1" height="12" fill="#262626"/>
<path d="M565 544.4 A3.4 3.4 0 0 1 571 543.4 M572 547 A3.4 3.4 0 0 1 566 548.4" fill="none" stroke="#c4c4c4" stroke-width="1.2"/><path d="M571.8 541.4 V544.6 H568.8 Z M565.2 550.4 V547.2 H568.2 Z" fill="#c4c4c4"/><path d="M572 549.8 h3 l-1.5 1.6 Z" fill="#aaa"/>
<rect x="580.8" y="539.6" width="8.600000000000023" height="12.4" rx="1" fill="#474747" stroke="#2a2a2a" stroke-width="0.7"/>
<path d="M584.5 543 H586 M585.2 543 V549 M584.5 549 H586" stroke="#e2522a" stroke-width="1" fill="none"/>
<rect x="591.4" y="539.6" width="17.200000000000045" height="12.4" rx="1" fill="#474747" stroke="#2a2a2a" stroke-width="0.7"/>
<rect x="595.6" y="543" width="1.3" height="6" fill="#c8c8c8"/><rect x="603.2" y="543" width="1.3" height="6" fill="#c8c8c8"/>
<path d="M602.8 543 V549 L597.6999999999999 546 Z" fill="#c8c8c8"/>
<path d="M597 543 L602 549" stroke="#c8c8c8" stroke-width="0.6"/>
<rect x="610.4" y="539.6" width="17.200000000000045" height="12.4" rx="1" fill="#474747" stroke="#2a2a2a" stroke-width="0.7"/>
<rect x="613.4" y="545" width="1.2" height="4" fill="#999"/><rect x="615.6" y="543" width="1.2" height="6" fill="#c8c8c8"/>
<path d="M623.4 543 V549 L618.3 546 Z" fill="#c8c8c8"/>
<rect x="629.4" y="539.6" width="17.200000000000045" height="12.4" rx="1" fill="#474747" stroke="#2a2a2a" stroke-width="0.7"/>
<path d="M640.9 543 V549 L635.8 546 Z" fill="#c8c8c8"/>
<path d="M640.9 543 V549" stroke="#8a8a8a" stroke-width="0.8"/>
<rect x="648.6" y="539.6" width="17.199999999999932" height="12.4" rx="1" fill="#474747" stroke="#2a2a2a" stroke-width="0.7"/>
<path d="M659.8 543 V549 L654.6999999999999 546 Z" fill="#c8c8c8"/>
<rect x="704.6" y="539.6" width="17.199999999999932" height="12.4" rx="1" fill="#474747" stroke="#2a2a2a" stroke-width="0.7"/>
<path d="M711.0 543 V549 L716.1 546 Z" fill="#c8c8c8"/>
<rect x="723.8" y="539.6" width="17.200000000000045" height="12.4" rx="1" fill="#474747" stroke="#2a2a2a" stroke-width="0.7"/>
<path d="M730.0 543 V549 L735.1 546 Z" fill="#c8c8c8"/>
<path d="M730 543 V549" stroke="#8a8a8a" stroke-width="0.8"/>
<rect x="743" y="539.6" width="17.200000000000045" height="12.4" rx="1" fill="#474747" stroke="#2a2a2a" stroke-width="0.7"/>
<path d="M747.8000000000001 543 V549 L752.9000000000001 546 Z" fill="#c8c8c8"/>
<rect x="754.4" y="543" width="1.2" height="6" fill="#c8c8c8"/><rect x="756.6" y="545" width="1.2" height="4" fill="#999"/>
<rect x="762.2" y="539.6" width="17.199999999999932" height="12.4" rx="1" fill="#474747" stroke="#2a2a2a" stroke-width="0.7"/>
<rect x="766.4" y="543" width="1.3" height="6" fill="#c8c8c8"/><rect x="774" y="543" width="1.3" height="6" fill="#c8c8c8"/>
<path d="M768.0 543 V549 L773.1 546 Z" fill="#c8c8c8"/>
<path d="M769 549 L774 543" stroke="#c8c8c8" stroke-width="0.6"/>
<rect x="781.2" y="539.6" width="8.799999999999955" height="12.4" rx="1" fill="#474747" stroke="#2a2a2a" stroke-width="0.7"/>
<ellipse cx="785.6" cy="546" rx="1.8" ry="2.6" fill="none" stroke="#e2522a" stroke-width="1"/>
<rect x="799" y="539.6" width="12" height="12.4" rx="1" fill="#474747" stroke="#2a2a2a" stroke-width="0.7"/>
<path d="M804.84 544.2 V547.8 L801.78 546 Z" fill="#c8c8c8"/>
<path d="M808.6400000000001 544.2 V547.8 L805.58 546 Z" fill="#c8c8c8"/>
<rect x="812.4" y="539.6" width="15.4" height="12.4" fill="#2a2a2a" stroke="#3d3d3d" stroke-width="0.7"/>
<rect x="830" y="539.6" width="12" height="12.4" rx="1" fill="#474747" stroke="#2a2a2a" stroke-width="0.7"/>
<path d="M832.76 544.2 V547.8 L835.82 546 Z" fill="#c8c8c8"/>
<path d="M836.56 544.2 V547.8 L839.62 546 Z" fill="#c8c8c8"/>
<rect x="1071.5" y="542" width="8" height="8" fill="none" stroke="#d8d8d8" stroke-width="1.3"/><path d="M1074 543.8 V548.2 L1077.6 546 Z" fill="#d8d8d8"/>
<rect x="1084.2" y="542.2" width="8.6" height="7.6" fill="#d8d8d8"/><circle cx="1088.5" cy="546" r="2.3" fill="#323232"/>
<rect x="1097.6" y="545.4" width="7.2" height="5.4" rx="0.6" fill="#d8d8d8"/><path d="M1099 545.4 V543.6 A2.2 2.2 0 0 1 1103.4 543.6 V545.4" fill="none" stroke="#d8d8d8" stroke-width="1.2"/>
<path d="M1109.4 547 V550 H1118.6 V547" fill="none" stroke="#e09a30" stroke-width="1.2"/><path d="M1114 541.6 V546.4 M1112 544.6 L1114 546.6 L1116 544.6" fill="none" stroke="#e09a30" stroke-width="1.1"/>
<rect x="1121" y="539.5" width="36.7" height="12.6" fill="#363636"/>
<rect x="244.5" y="558.5" width="9" height="10" fill="#6a6a6a"/><rect x="244.5" y="558.5" width="4.5" height="6.5" fill="#c4c4c4"/><rect x="249.0" y="558.5" width="2.3" height="10" fill="#8c8c8c"/><rect x="244.5" y="565.0" width="4.5" height="3.5" fill="#999"/>
<path d="M320.1 561.6 L323.9 565.4 M320.1 565.4 L323.9 561.6" stroke="#8a8a8a" stroke-width="1.1"/>
<circle cx="403.2" cy="564.3" r="3.2" fill="#3c3c3c"/>
<path d="M401.3 562.4 L405.09999999999997 566.1999999999999 M401.3 566.1999999999999 L405.09999999999997 562.4" stroke="#6e6e6e" stroke-width="1.1"/>
<circle cx="480.7" cy="564.3" r="3.2" fill="#3c3c3c"/>
<path d="M478.8 562.4 L482.59999999999997 566.1999999999999 M478.8 566.1999999999999 L482.59999999999997 562.4" stroke="#6e6e6e" stroke-width="1.1"/>
<rect x="560.3" y="570.5" width="196" height="185.8" fill="#70cc79"/>
<path d="M560.3 741 L575.5 756.3 H560.3 Z" fill="#67c070"/><path d="M756.3 741 L741 756.3 H756.3 Z" fill="#67c070"/>
<path d="M889 686.6 L441 890.5" stroke="#1c1c1c" stroke-width="0.7" fill="none"/>
<path d="M437.5 892.2 L446.9 884.0 L449.9 890.5 Z" fill="#060606"/>
<path d="M655.4 681 L655.4 712" stroke="#060606" stroke-width="1.4" fill="none"/>
<path d="M655.4 731 L655.4 784" stroke="#060606" stroke-width="1.4" fill="none"/>
<path d="M655.4 784.2 L650.8 771.2 L660.0 771.2 Z" fill="#060606"/>
<path d="M638.4 732.2 L500 811.5" stroke="#060606" stroke-width="1.4" fill="none"/>
<path d="M496.6 813.6 L505.6 803.1 L510.2 811.1 Z" fill="#060606"/>
<path d="M704 713 L872 681" stroke="#060606" stroke-width="1.4" fill="none"/>
<path d="M874.4 680.4 L861.5 687.4 L859.8 678.7 Z" fill="#060606"/>
<path d="M608.7 794.3 L265 794.3" stroke="#060606" stroke-width="1.4" fill="none"/>
<path d="M262.4 794.3 L274.8 789.9 L274.8 798.7 Z" fill="#060606"/>
<path d="M252.3 800 L252.3 862" stroke="#060606" stroke-width="1.4" fill="none"/>
<path d="M252.3 861.6 L247.9 848.6 L256.7 848.6 Z" fill="#060606"/>
<path d="M655.4 804.5 L655.4 863" stroke="#060606" stroke-width="1.4" fill="none"/>
<path d="M655.4 863.4 L651.0 851.4 L659.8 851.4 Z" fill="#060606"/>
<path d="M923 686.6 L923 722" stroke="#060606" stroke-width="1.4" fill="none"/>
<path d="M923.0 722.2 L918.4 708.2 L927.6 708.2 Z" fill="#060606"/>
<path d="M923 752 L923 874" stroke="#060606" stroke-width="1.4" fill="none"/>
<path d="M923.0 873.6 L918.4 859.1 L927.6 859.1 Z" fill="#060606"/>
<path d="M916.5 880 L704 880" stroke="#060606" stroke-width="1.4" fill="none"/>
<path d="M703.4 880.0 L715.4 875.6 L715.4 884.4 Z" fill="#060606"/>
<path d="M709.5 880.0 L721.5 875.6 L721.5 884.4 Z" fill="#060606"/>
<path d="M917 878 L528 832" stroke="#060606" stroke-width="1.4" fill="none"/>
<path d="M526.4 831.8 L539.8 829.0 L538.8 837.7 Z" fill="#060606"/>
<path d="M1115.9 762 L1115.9 846" stroke="#060606" stroke-width="1.4" fill="none"/>
<rect x="563.6" y="770.9" width="6.2" height="6.2" fill="#f7ef1a" stroke="#3a3a10" stroke-width="0.5" transform="rotate(15 566.7 774)"/>
<rect x="429.9" y="791.1999999999999" width="6.2" height="6.2" fill="#f7ef1a" stroke="#3a3a10" stroke-width="0.5" transform="rotate(45 433 794.3)"/>
<rect x="249.20000000000002" y="828.8" width="6.2" height="6.2" fill="#f7ef1a" stroke="#3a3a10" stroke-width="0.5" transform="rotate(45 252.3 831.9)"/>
<rect x="786.3" y="693.6" width="6.2" height="6.2" fill="#f7ef1a" stroke="#3a3a10" stroke-width="0.5" transform="rotate(34 789.4 696.7)"/>
<rect x="919.6" y="810.3" width="6.2" height="6.2" fill="#f7ef1a" stroke="#3a3a10" stroke-width="0.5" transform="rotate(45 922.7 813.4)"/>
<rect x="806.5" y="876.5" width="6.2" height="6.2" fill="#f7ef1a" stroke="#3a3a10" stroke-width="0.5" transform="rotate(45 809.6 879.6)"/>
<rect x="717.3" y="852.3" width="6.2" height="6.2" fill="#f7ef1a" stroke="#3a3a10" stroke-width="0.5" transform="rotate(52 720.4 855.4)"/>
<rect x="1112.8000000000002" y="824.9" width="6.2" height="6.2" fill="#f7ef1a" stroke="#3a3a10" stroke-width="0.5" transform="rotate(45 1115.9 828)"/>
<circle cx="655.4" cy="696.7" r="6.7" fill="url(#gDot)" stroke="#2a2a2a" stroke-width="0.7"/>
<path d="M650.6 681.9599999999999 H660.1999999999999 L655.4 690.12 Z" fill="#060606"/>
<path d="M650.6 702.76 H660.1999999999999 L655.4 710.9200000000001 Z" fill="#060606"/>
<circle cx="252.3" cy="794.3" r="6.7" fill="url(#gDot)" stroke="#2a2a2a" stroke-width="0.7"/>
<path d="M243.5 794.3 L246.5 791.5 V797.1 Z" fill="#060606"/>
<circle cx="922.7" cy="880" r="6.7" fill="url(#gDot)" stroke="#2a2a2a" stroke-width="0.7"/>
<rect x="608.7" y="582.7" width="94" height="98.8" fill="url(#gGray)" stroke="#4e4e4e" stroke-width="0.8"/>
<rect x="610.4" y="584" width="90.6" height="50.2" fill="#2c6670"/>
<rect x="610.4" y="584" width="90.6" height="50.2" fill="url(#thumb)"/>
<path d="M629 601.5 Q634 598 640 601 Q646 596 652 599.5 Q660 598.5 667 601.5 Q672 600 674 604 L671 607 Q668 604 663 604 L666 611 Q660 606 654 603.5 Q647 604.5 641 603.5 Q636 603 629 601.5 Z" fill="#8fb7a0" opacity="0.75"/><circle cx="672.6" cy="603.6" r="2" fill="#16323c"/>
<path d="M610.4 613 H701" stroke="#24505a" stroke-width="0.6"/><path d="M610.4 586 H701" stroke="#1d4a58" stroke-width="1.2" opacity="0.7"/>
<rect x="611.8" y="676.0" width="8.7" height="3.4" fill="#ff0000"/>
<rect x="620.5" y="676.0" width="8.7" height="3.4" fill="#00e000"/>
<rect x="629.2" y="676.0" width="9.4" height="3.4" fill="#0000ff"/>
<path d="M606.2 721.5 L611.5 711.2 H699.8 L705.2 721.5 L699.8 731.8 H611.5 Z" fill="url(#gKhaki)" stroke="#5c5226" stroke-width="0.7"/>
<rect x="608.7" y="784.2" width="94" height="20.3" fill="url(#gBlue)" stroke="#3e4a66" stroke-width="0.7"/>
<rect x="611.8" y="799.0999999999999" width="8.7" height="3.4" fill="#ff0000"/>
<rect x="620.5" y="799.0999999999999" width="8.7" height="3.4" fill="#00e000"/>
<rect x="629.2" y="799.0999999999999" width="9.4" height="3.4" fill="#0000ff"/>
<path d="M710.92 789.9 V798.6999999999999 L704.76 794.3 Z" fill="#060606"/>
<rect x="430.5" y="815.4" width="94.6" height="20.2" fill="url(#gBlue)" stroke="#3e4a66" stroke-width="0.7"/>
<rect x="433.6" y="830.6999999999999" width="8.7" height="3.4" fill="#ff0000"/>
<rect x="442.3" y="830.6999999999999" width="8.7" height="3.4" fill="#00e000"/>
<rect x="451.0" y="830.6999999999999" width="9.4" height="3.4" fill="#0000ff"/>
<path d="M473.09999999999997 836.76 H482.7 L477.9 844.9200000000001 Z" fill="#060606"/>
<rect x="608.7" y="863.3" width="94" height="29.4" fill="url(#gMag)" stroke="#4c1830" stroke-width="0.7"/>
<path d="M609.5 886.8 L612.2 891.4" stroke="#e00000" stroke-width="1"/>
<rect x="617.0" y="888.1" width="3" height="3" fill="#00e000"/>
<rect x="625.4" y="888.1" width="3" height="3" fill="#0000ff"/>
<rect x="632.4" y="888.1" width="9.4" height="3" fill="#fff"/>
<rect x="236" y="862" width="63.2" height="20" fill="url(#gGray2)" stroke="#5a5a5a" stroke-width="0.7"/>
<circle cx="300" cy="861.4" r="4.6" fill="#e02828"/>
<rect x="242" y="877" width="2" height="3.5" fill="#fff"/>
<path d="M247.5 884.56 H257.1 L252.3 892.72 Z" fill="#060606"/>
<rect x="875.8" y="656.7" width="94.3" height="29.9" fill="url(#gGreen)" stroke="#2a5a36" stroke-width="0.7"/>
<rect x="881.8" y="681.3" width="3" height="3" fill="#ff0000"/>
<rect x="890.4" y="681.3" width="3" height="3" fill="#00e000"/>
<rect x="898.8" y="681.3" width="3" height="3" fill="#0000ff"/>
<rect x="905.5" y="681.3" width="9" height="3" fill="#fff"/>
<path d="M868.48 666.8000000000001 V675.6 L874.64 671.2 Z" fill="#060606"/>
<path d="M977.92 666.8000000000001 V675.6 L971.76 671.2 Z" fill="#060606"/>
<rect x="875.8" y="722.1" width="94.3" height="29.9" fill="url(#gOrange)" stroke="#5a3216" stroke-width="0.7"/>
<rect x="878.8" y="747.0999999999999" width="8.5" height="3.4" fill="#ff0000"/>
<rect x="887.3" y="747.0999999999999" width="8.9" height="3.4" fill="#00e000"/>
<rect x="896.2" y="747.0999999999999" width="8.9" height="3.4" fill="#0000ff"/>
<rect x="905.1" y="747.0999999999999" width="9.8" height="3.4" fill="#ffffff"/>
<path d="M977.92 732.8000000000001 V741.6 L971.76 737.2 Z" fill="#060606"/>
<rect x="1069" y="684" width="94.3" height="78" fill="url(#gConst)" stroke="#6a6a6a" stroke-width="0.7"/>
<rect x="1070" y="685" width="92.4" height="51" fill="#c2c2c2"/><path d="M1069.6 762 V684.6 H1163" fill="none" stroke="#f2f2f2" stroke-width="1.2"/>
<rect x="1072.3" y="756.5" width="8.7" height="3.4" fill="#ff0000"/>
<rect x="1081.0" y="756.5" width="8.7" height="3.4" fill="#00e000"/>
<rect x="1089.7" y="756.5" width="9.2" height="3.4" fill="#0000ff"/>
<rect x="1029.7" y="845" width="139.3" height="57" fill="#2e2e2e"/><path d="M1030.2 894 V845.5 H1169" fill="none" stroke="#727272" stroke-width="1"/><rect x="1030.5" y="845.8" width="2.4" height="2.4" fill="none" stroke="#999" stroke-width="0.6"/>
<rect x="1033" y="861.6" width="3" height="0.9" fill="#58c060"/>
<rect x="1065.6" y="858.8" width="3.4" height="3.2" fill="#e02020"/>
<rect x="1073.8" y="858.6" width="4" height="1.6" fill="#ddd"/>
<rect x="1074.2" y="861" width="3.4" height="3.4" fill="#9a9a9a"/>
<rect x="1056.8" y="867.8" width="3.4" height="0.9" fill="#58c060"/>
<rect x="1086" y="869" width="3.4" height="0.9" fill="#58c060"/>
<rect x="1079" y="867.4" width="3.2" height="1.4" fill="#58c060"/>
<rect x="1079" y="870.4" width="3.2" height="1.2" fill="#e8a040"/>
<rect x="1079" y="872.6" width="3.2" height="1.4" fill="#5080e0"/>
<rect x="1064.4" y="873.6" width="3.2" height="1.2" fill="#5080e0"/>
<rect x="1070.4" y="874.4" width="3.4" height="1.8" fill="#c04878"/>
<rect x="1070.4" y="872.4" width="3.2" height="1.2" fill="#88a0d0"/>
<path d="M1060 868.3 L1073 863 M1072 866 L1066 874 M1072 866 L1074 874 M1075.6 864 L1072 874" stroke="#111" stroke-width="0.5"/>
<rect x="1129" y="862" width="36" height="11.6" fill="#6e5a58" stroke="#a08886" stroke-width="0.6"/>
<rect x="1144" y="863" width="3" height="1" fill="#ddd"/>
<rect x="1153.6" y="864.6" width="3" height="1" fill="#e8a040"/>
<rect x="1145" y="866.6" width="3" height="1" fill="#58c060"/>
<rect x="1153.6" y="867.6" width="3" height="1" fill="#58c060"/>
<rect x="1161" y="866.2" width="3" height="3" fill="#eee"/>
<rect x="1144" y="870" width="3" height="1" fill="#5080e0"/>
<rect x="1136" y="871" width="3" height="1" fill="#5080e0"/>
<rect x="1143.6" y="874.6" width="3.4" height="1.4" fill="#c04878"/>
<rect x="1143.6" y="872.8" width="3" height="1" fill="#ddd"/>
<rect x="1119.6" y="872.6" width="3" height="0.9" fill="#ddd"/>
<rect x="1121" y="877" width="3" height="0.9" fill="#ddd"/>
<rect x="1160.6" y="876.6" width="3" height="1" fill="#e8c040"/>
<rect x="1160.6" y="880.6" width="3" height="1" fill="#e8c040"/>
<rect x="1161" y="872.6" width="2" height="1.2" fill="#5080e0"/>
<rect x="1120" y="881.4" width="3" height="0.9" fill="#ddd"/>
<path d="M1122 875.6 L1162 874 M1124 877.6 L1144 874 M1134 868 L1124 872.6" stroke="#111" stroke-width="0.5"/>
<rect x="1173.6" y="77.5" width="9" height="10" fill="#6a6a6a"/><rect x="1173.6" y="77.5" width="4.5" height="6.5" fill="#c4c4c4"/><rect x="1178.1" y="77.5" width="2.3" height="10" fill="#8c8c8c"/><rect x="1173.6" y="84.0" width="4.5" height="3.5" fill="#999"/>
<path d="M1241.5 80.89999999999999 L1245.3000000000002 84.7 M1241.5 84.7 L1245.3000000000002 80.89999999999999" stroke="#8a8a8a" stroke-width="1.1"/>
<circle cx="1358.4" cy="83.4" r="3.2" fill="#3c3c3c"/>
<path d="M1356.5 81.5 L1360.3000000000002 85.30000000000001 M1356.5 85.30000000000001 L1360.3000000000002 81.5" stroke="#6e6e6e" stroke-width="1.1"/>
<circle cx="1440.4" cy="83.4" r="3.2" fill="#3c3c3c"/>
<path d="M1438.5 81.5 L1442.3000000000002 85.30000000000001 M1438.5 85.30000000000001 L1442.3000000000002 81.5" stroke="#6e6e6e" stroke-width="1.1"/>
<rect x="1174" y="93.45" width="15" height="11.5" rx="1.2" fill="#3b3b3b" stroke="#1b1b1b" stroke-width="0.9"/>
<rect x="1193.4" y="98.8" width="6.4" height="4.8" fill="#070707"/><path d="M1197.8 98.8 V97.2 A1.8 1.8 0 0 1 1201.4 97.2 V97.8" fill="none" stroke="#070707" stroke-width="1.1"/>
<rect x="1205.4" y="97" width="3" height="4.6" fill="#d8d8d8"/><path d="M1208.8 97.2 L1212.8 101.4 M1208.8 101.4 L1212.8 97.2" stroke="#d8d8d8" stroke-width="1.2"/>
<path d="M1218.4 101.8 L1219.2 98.8 L1224.2 93.8 L1226.4 96 L1221.4 101 Z" fill="#e0e0e0"/><rect x="1217.6" y="103" width="8.4" height="1.1" fill="#e0e0e0"/>
<path d="M1161.8 96 L1164 98.2 L1166.2 96 M1161.8 99.2 L1164 101.4 L1166.2 99.2" fill="none" stroke="#b0b0b0" stroke-width="1"/>
<path d="M1176.4 117.8 H1183 L1179.7 122.6 Z" fill="#111"/>
<rect x="1189" y="114.2" width="40.6" height="12.6" rx="1" fill="#484848" stroke="#2a2a2a" stroke-width="0.7"/><path d="M1202.3 114.4 V126.6 M1215.8 114.4 V126.6" stroke="#2a2a2a" stroke-width="0.8"/>
<circle cx="1195" cy="120.4" r="3.1" fill="none" stroke="#111" stroke-width="0.9"/><circle cx="1195" cy="120.4" r="1.1" fill="#111"/>
<rect x="1204.6" y="119.4" width="8.8" height="2.2" fill="#0a0a0a"/><path d="M1207.4 117.4 H1210.6 L1209 119.4 Z M1207.4 123.6 H1210.6 L1209 121.6 Z" fill="#0a0a0a"/>
<path d="M1219.6 115.8 V118.8 Q1219.6 120.6 1221.4 121 V125.6 H1223.6 V121 Q1225.4 120.6 1225.4 118.8 V115.8 H1224 V118.6 H1221 V115.8 Z" fill="#111"/>
<rect x="1236" y="114.2" width="380.3" height="12.6" fill="#2b2b2b" stroke="#454545" stroke-width="0.7"/>
<rect x="1622.8" y="114.2" width="68" height="12.6" rx="1" fill="#484848" stroke="#2a2a2a" stroke-width="0.7"/><path d="M1636.2 114.4 V126.6 M1649.8 114.4 V126.6 M1663.4 114.4 V126.6 M1677 114.4 V126.6" stroke="#2a2a2a" stroke-width="0.8"/>
<rect x="1625.8" y="116.8" width="7" height="7" fill="#62d060" stroke="#1e4a1e" stroke-width="0.8"/><path d="M1626.6 123 L1632 117.6" stroke="#1e4a1e" stroke-width="1"/>
<rect x="1639.4" y="116.8" width="7" height="7" fill="#f0f0f0" stroke="#222" stroke-width="0.8"/><path d="M1640.2 123 L1645.6 117.6" stroke="#222" stroke-width="1"/>
<path d="M1653.8 121.60000000000001 q3 -3.4 6 0" fill="none" stroke="#5e5e5e" stroke-width="1.2"/>
<path d="M1667.4 121.60000000000001 q3 -3.4 6 0" fill="none" stroke="#5e5e5e" stroke-width="1.2"/>
<path d="M1680.6 121.80000000000001 V118.80000000000001 H1686 V121.0" fill="none" stroke="#5e5e5e" stroke-width="1.1"/>
<rect x="1711.6" y="119.4" width="4.4" height="4.6" fill="none" stroke="#111" stroke-width="1"/><path d="M1713 119.4 V118 A1.8 1.8 0 0 1 1716 117" fill="none" stroke="#111" stroke-width="0.9"/>
<rect x="1242" y="151.70000000000002" width="205.70000000000005" height="11.2" rx="2" fill="url(#ddg)" stroke="#222" stroke-width="0.8"/>
<path d="M1440.9 156.3 H1445.3000000000002 L1443.1000000000001 158.70000000000002 Z" fill="#c8c8c8"/>
<rect x="1452.4" y="153.70000000000002" width="7.2" height="7.2" fill="#f0f0f0"/><path d="M1453.4 154.70000000000002 L1458.6 159.9 M1453.4 159.9 L1458.6 154.70000000000002" stroke="#e01818" stroke-width="1.7"/>
<rect x="1493.4" y="153.70000000000002" width="7.2" height="7.2" fill="#2f2f2f" stroke="#444" stroke-width="0.6"/>
<rect x="1504.7" y="151.70000000000002" width="205.70000000000005" height="11.2" rx="2" fill="url(#ddg)" stroke="#222" stroke-width="0.8"/>
<path d="M1703.6000000000001 156.3 H1708.0000000000002 L1705.8000000000002 158.70000000000002 Z" fill="#c8c8c8"/>
<rect x="1713.6" y="152.3" width="3" height="10" fill="#303030"/>
<rect x="1242" y="166.20000000000002" width="226" height="11.2" rx="2" fill="url(#ddg)" stroke="#222" stroke-width="0.8"/>
<path d="M1461.2 170.8 H1465.6000000000001 L1463.4 173.20000000000002 Z" fill="#c8c8c8"/>
<rect x="1472.8000000000002" y="168.20000000000002" width="7.2" height="7.2" fill="#2f2f2f" stroke="#444" stroke-width="0.6"/>
<rect x="1484" y="166.20000000000002" width="226.4000000000001" height="11.2" rx="2" fill="url(#ddg)" stroke="#222" stroke-width="0.8"/>
<path d="M1703.6000000000001 170.8 H1708.0000000000002 L1705.8000000000002 173.20000000000002 Z" fill="#c8c8c8"/>
<rect x="1713.6" y="166.8" width="3" height="10" fill="#303030"/>
<rect x="1242" y="181.0" width="109.79999999999995" height="11.2" rx="2" fill="url(#ddg)" stroke="#222" stroke-width="0.8"/>
<path d="M1345.0 185.6 H1349.4 L1347.2 188.0 Z" fill="#c8c8c8"/>
<rect x="1354.8000000000002" y="183.0" width="7.2" height="7.2" fill="#2f2f2f" stroke="#444" stroke-width="0.6"/>
<path d="M1183.6 196.8 L1187.8 199.2 L1183.6 201.6 Z" fill="#111"/>
<rect x="1242" y="207.0" width="43" height="11.4" rx="1.2" fill="#3f3f3f" stroke="#1c1c1c" stroke-width="0.9"/>
<rect x="1287.5" y="210.6" width="427.20000000000005" height="1.4" fill="#1d1d1d"/>
<path d="M1288.9 208.1 V210.7M1335.3 208.1 V210.7M1352.6 208.1 V210.7M1377.3 208.1 V210.7M1396.7 208.1 V210.7M1412.9 208.1 V210.7M1425.6 208.1 V210.7M1480.7 208.1 V210.7M1523.6 208.1 V210.7M1559.8 208.1 V210.7M1591.0 208.1 V210.7M1619.7 208.1 V210.7M1646.1 208.1 V210.7M1670.7 208.1 V210.7M1693.9 208.1 V210.7M1711.3 208.1 V210.7M1298.2 209.1 V210.7M1307.5 209.1 V210.7M1316.7 209.1 V210.7M1326.0 209.1 V210.7M1364.9 209.1 V210.7M1387.0 209.1 V210.7M1434.8 209.1 V210.7M1444.0 209.1 V210.7M1453.2 209.1 V210.7M1462.3 209.1 V210.7M1471.5 209.1 V210.7M1491.4 209.1 V210.7M1502.2 209.1 V210.7M1512.9 209.1 V210.7M1532.6 209.1 V210.7M1541.7 209.1 V210.7M1550.8 209.1 V210.7M1570.2 209.1 V210.7M1580.6 209.1 V210.7M1600.6 209.1 V210.7M1610.1 209.1 V210.7M1632.9 209.1 V210.7M1658.4 209.1 V210.7M1682.3 209.1 V210.7" stroke="#5a5a5a" stroke-width="0.8" fill="none"/>
<rect x="1712.9" y="206.79999999999998" width="1.3" height="4.4" fill="#6a6a6a"/>
<rect x="1242" y="221.5" width="43" height="11.4" rx="1.2" fill="#3f3f3f" stroke="#1c1c1c" stroke-width="0.9"/>
<rect x="1287.5" y="225.1" width="386.70000000000005" height="1.4" fill="#1d1d1d"/>
<path d="M1291.6 222.6 V225.2M1297.6 222.6 V225.2M1313.0 222.6 V225.2M1325.1 222.6 V225.2M1337.3 222.6 V225.2M1349.7 222.6 V225.2M1362.8 222.6 V225.2M1379.6 222.6 V225.2M1399.0 222.6 V225.2M1423.6 222.6 V225.2M1439.5 222.6 V225.2M1463.3 222.6 V225.2M1481.5 222.6 V225.2M1501.0 222.6 V225.2M1525.0 222.6 V225.2M1544.4 222.6 V225.2M1569.3 222.6 V225.2M1589.3 222.6 V225.2M1605.5 222.6 V225.2M1620.6 222.6 V225.2M1633.0 222.6 V225.2M1645.8 222.6 V225.2M1656.2 222.6 V225.2M1666.0 222.6 V225.2M1671.4 222.6 V225.2M1389.3 223.6 V225.2M1411.3 223.6 V225.2M1451.4 223.6 V225.2M1472.4 223.6 V225.2M1491.2 223.6 V225.2M1513.0 223.6 V225.2M1534.7 223.6 V225.2M1556.8 223.6 V225.2M1579.3 223.6 V225.2" stroke="#5a5a5a" stroke-width="0.8" fill="none"/>
<rect x="1480.1000000000001" y="221.29999999999998" width="1.3" height="4.4" fill="#7a7440"/>
<rect x="1676.6" y="221.6" width="9.4" height="11.2" fill="#555" stroke="#2c2c2c" stroke-width="0.6"/><rect x="1687.6" y="221.6" width="10.4" height="11.2" fill="#484848" stroke="#2c2c2c" stroke-width="0.6"/>
<path d="M1702.2 224.79999999999998 L1707 229.6 M1702.2 229.6 L1707 224.79999999999998" stroke="#8a8a8a" stroke-width="1.5"/>
<rect x="1242" y="236.8" width="43" height="11.4" rx="1.2" fill="#3f3f3f" stroke="#1c1c1c" stroke-width="0.9"/>
<rect x="1287.5" y="240.4" width="370.20000000000005" height="1.4" fill="#1d1d1d"/>
<path d="M1290.9 237.9 V240.5M1337.6 237.9 V240.5M1370.6 237.9 V240.5M1396.1 237.9 V240.5M1417.0 237.9 V240.5M1434.6 237.9 V240.5M1450.6 237.9 V240.5M1463.6 237.9 V240.5M1472.9 237.9 V240.5M1553.1 237.9 V240.5M1599.7 237.9 V240.5M1632.8 237.9 V240.5M1656.2 237.9 V240.5M1300.2 238.9 V240.5M1309.6 238.9 V240.5M1318.9 238.9 V240.5M1328.3 238.9 V240.5M1348.6 238.9 V240.5M1359.6 238.9 V240.5M1383.3 238.9 V240.5M1406.5 238.9 V240.5M1482.9 238.9 V240.5M1493.0 238.9 V240.5M1503.0 238.9 V240.5M1513.0 238.9 V240.5M1523.0 238.9 V240.5M1533.0 238.9 V240.5M1543.1 238.9 V240.5M1562.4 238.9 V240.5M1571.7 238.9 V240.5M1581.1 238.9 V240.5M1590.4 238.9 V240.5M1610.7 238.9 V240.5M1621.8 238.9 V240.5M1644.5 238.9 V240.5" stroke="#5a5a5a" stroke-width="0.8" fill="none"/>
<rect x="1471.7" y="236.6" width="1.3" height="4.4" fill="#7a7440"/>
<rect x="1660" y="237.9" width="8.6" height="9.2" fill="#4e4e4e" stroke="#2c2c2c" stroke-width="0.6"/>
<rect x="1672.7" y="236.9" width="44" height="11.2" rx="1.2" fill="#474747" stroke="#2c2c2c" stroke-width="0.6"/>
<rect x="1242" y="252.2" width="22.299999999999955" height="11.4" rx="1.2" fill="#3f3f3f" stroke="#1c1c1c" stroke-width="0.9"/>
<rect x="1276.5" y="252.2" width="22.5" height="11.4" rx="1.2" fill="#3f3f3f" stroke="#1c1c1c" stroke-width="0.9"/>
<rect x="1301.3" y="252.09999999999997" width="12.8" height="11.6" rx="1" fill="#474747" stroke="#2c2c2c" stroke-width="0.6"/>
<path d="M1304.3 254.89999999999998 V260.9" stroke="#bcbcbc" stroke-width="1.2"/><path d="M1311.3 254.89999999999998 V260.9 L1306.7 257.9 Z" fill="#bcbcbc"/><circle cx="1308.7" cy="257.9" r="1" fill="#474747"/>
<rect x="1315.8" y="252.09999999999997" width="12.8" height="11.6" rx="1" fill="#474747" stroke="#2c2c2c" stroke-width="0.6"/>
<path d="M1325.6000000000001 254.89999999999998 V260.9" stroke="#bcbcbc" stroke-width="1.2"/><path d="M1318.6000000000001 254.89999999999998 V260.9 L1323.2 257.9 Z" fill="#bcbcbc"/><circle cx="1321.2" cy="257.9" r="1" fill="#474747"/>
<rect x="1329.6999999999998" y="252.09999999999997" width="12.8" height="11.6" rx="1" fill="#474747" stroke="#2c2c2c" stroke-width="0.6"/>
<circle cx="1333.6999999999998" cy="256.09999999999997" r="1.7" fill="none" stroke="#bcbcbc" stroke-width="1.1"/><path d="M1333.6999999999998 257.9 V261.9" stroke="#bcbcbc" stroke-width="1.2"/><path d="M1336.6999999999998 258.5 H1340.5 M1338.6 256.59999999999997 V260.4" stroke="#bcbcbc" stroke-width="1.2"/>
<rect x="1344.1999999999998" y="252.09999999999997" width="12.8" height="11.6" rx="1" fill="#474747" stroke="#2c2c2c" stroke-width="0.6"/>
<circle cx="1348.1999999999998" cy="256.09999999999997" r="1.7" fill="none" stroke="#bcbcbc" stroke-width="1.1"/><path d="M1348.1999999999998 257.9 V261.9" stroke="#bcbcbc" stroke-width="1.2"/><path d="M1351.1999999999998 258.5 H1355.0" stroke="#bcbcbc" stroke-width="1.2"/>
<path d="M1643.6 255.49999999999997 L1648.2 260.09999999999997 M1643.6 260.09999999999997 L1648.2 255.49999999999997" stroke="#8a8a8a" stroke-width="1.5"/>
<rect x="1685.1000000000001" y="254.29999999999998" width="7.2" height="7.2" fill="#3c3c3c" stroke="#444" stroke-width="0.6"/>
<path d="M1563.6 304.9 Q1567.8 300.7 1572.0 304.9 Q1567.8 309.09999999999997 1563.6 304.9 Z" fill="none" stroke="#dcdcdc" stroke-width="0.9"/><circle cx="1567.8" cy="304.9" r="1.5" fill="#dcdcdc"/>
<rect x="1577.3999999999999" y="304.09999999999997" width="6.4" height="4.8" rx="0.5" fill="#050505"/><path d="M1578.6999999999998 304.09999999999997 V302.7 A1.9 1.9 0 0 1 1582.5 302.7 V304.09999999999997" fill="none" stroke="#050505" stroke-width="1.1"/>
<rect x="1590.6000000000001" y="301.79999999999995" width="6.2" height="6.2" fill="#e8e8e8" stroke="#0a0a0a" stroke-width="0.8"/>
<path d="M1591.2 307.4 L1596.2 302.4" stroke="#0a0a0a" stroke-width="1.1"/>
<circle cx="1606.8" cy="304.5" r="3.6" fill="#e060e0"/><path d="M1606.8 304.5 L1610.3999999999999 304.5 A3.6 3.6 0 0 1 1605.0 307.59999999999997 Z" fill="#60d0e0"/><path d="M1606.8 304.5 L1605.0 307.59999999999997 A3.6 3.6 0 0 1 1605.0 301.4 Z" fill="#e8d860"/><circle cx="1606.8" cy="304.5" r="2.6" fill="url(#cw)"/>
<rect x="1617.9" y="302.09999999999997" width="5.6" height="5.6" fill="#555" stroke="#222" stroke-width="0.7"/><rect x="1619.5" y="303.7" width="2.4" height="2.4" fill="#7a7a7a"/>
<rect x="1630.6" y="301.7" width="4.4" height="4.4" fill="#d8d8d8"/><rect x="1632.6" y="303.7" width="4.4" height="4.4" fill="#d8d8d8" stroke="#383838" stroke-width="0.8"/><rect x="1634.0" y="305.09999999999997" width="1.8" height="1.8" fill="#222"/>
<path d="M1643.4 307.7 L1647.2 302.09999999999997 M1645.8 307.7 L1649.6 302.09999999999997 M1648.2 307.7 L1652 302.09999999999997" stroke="#d8d8d8" stroke-width="1.2"/>
<path d="M1192.4 321.5 V658.04M1192.4 329.8 H1211M1192.4 341.1 H1211M1192.4 352.5 H1211M1192.4 363.8 H1199M1192.4 397.7 H1199M1192.4 477.0 H1199M1192.4 499.6 H1199M1192.4 544.9 H1199M1192.4 624.1 H1199M1192.4 658.0 H1199M1204 366.8 V386.4M1204 375.1 H1222M1204 386.4 H1222M1204 400.7 V465.6M1204 409.0 H1222M1204 420.4 H1222M1204 431.7 H1222M1204 443.0 H1222M1204 454.3 H1222M1204 465.6 H1222M1204 480.0 V488.3M1204 488.3 H1222M1204 502.6 V533.5M1204 510.9 H1222M1204 522.2 H1222M1204 533.5 H1222M1204 547.9 V612.8M1204 556.2 H1222M1204 567.5 H1222M1204 578.8 H1222M1204 590.1 H1222M1204 601.5 H1222M1204 612.8 H1222M1204 627.1 V646.7M1204 635.4 H1222M1204 646.7 H1222M1204 661.0 V692.0M1204 669.4 H1222M1204 680.7 H1222M1204 692.0 H1222" stroke="#252525" stroke-width="0.8" fill="none"/>
<rect x="1190.2" y="316.3" width="4.4" height="4.4" fill="#383838"/><path d="M1190.8000000000002 318.5 H1194.0" stroke="#9a9a9a" stroke-width="0.9"/>
<path d="M1200.4 315.9 H1207.6 L1210 321.5 H1202.6 Z" fill="#f2f2f2" stroke="#111" stroke-width="0.5"/>
<path d="M1563.6 318.5 Q1567.8 314.3 1572.0 318.5 Q1567.8 322.7 1563.6 318.5 Z" fill="none" stroke="#dcdcdc" stroke-width="0.9"/><circle cx="1567.8" cy="318.5" r="1.5" fill="#dcdcdc"/>
<rect x="1617.9" y="315.7" width="5.6" height="5.6" fill="#555" stroke="#222" stroke-width="0.7"/><rect x="1619.5" y="317.3" width="2.4" height="2.4" fill="#7a7a7a"/>
<rect x="1630.6" y="315.3" width="4.4" height="4.4" fill="#d8d8d8"/><rect x="1632.6" y="317.3" width="4.4" height="4.4" fill="#d8d8d8" stroke="#383838" stroke-width="0.8"/><rect x="1634.0" y="318.7" width="1.8" height="1.8" fill="#222"/>
<path d="M1643.4 321.3 L1647.2 315.7 M1645.8 321.3 L1649.6 315.7 M1648.2 321.3 L1652 315.7" stroke="#d8d8d8" stroke-width="1.2"/>
<path d="M1213.6 332.418 Q1215.5 328.318 1220.4 327.018" fill="none" stroke="#aaa" stroke-width="0.8"/><path d="M1214.6 328.21799999999996 L1219.4 330.818" stroke="#ddd" stroke-width="0.8"/><circle cx="1217" cy="329.518" r="0.9" fill="#eee"/>
<path d="M1563.6 329.818 Q1567.8 325.618 1572.0 329.818 Q1567.8 334.018 1563.6 329.818 Z" fill="none" stroke="#dcdcdc" stroke-width="0.9"/><circle cx="1567.8" cy="329.818" r="1.5" fill="#dcdcdc"/>
<rect x="1590.1000000000001" y="326.21799999999996" width="7.2" height="7.2" fill="#f4f4f4" stroke="#0a0a0a" stroke-width="0.8"/>
<path d="M1590.7 332.818 L1596.7 326.818" stroke="#0a0a0a" stroke-width="1.1"/>
<rect x="1603.2" y="326.21799999999996" width="7.2" height="7.2" fill="#ffffff" stroke="#0a0a0a" stroke-width="0.8"/>
<rect x="1617.9" y="327.018" width="5.6" height="5.6" fill="#555" stroke="#222" stroke-width="0.7"/><rect x="1619.5" y="328.618" width="2.4" height="2.4" fill="#7a7a7a"/>
<rect x="1630.6" y="326.618" width="4.4" height="4.4" fill="#d8d8d8"/><rect x="1632.6" y="328.618" width="4.4" height="4.4" fill="#d8d8d8" stroke="#383838" stroke-width="0.8"/><rect x="1634.0" y="330.018" width="1.8" height="1.8" fill="#222"/>
<rect x="1647.2" y="327.21799999999996" width="1.6" height="5.2" fill="#d8d8d8"/>
<path d="M1213.6 343.73600000000005 Q1215.5 339.636 1220.4 338.336" fill="none" stroke="#aaa" stroke-width="0.8"/><path d="M1214.6 339.536 L1219.4 342.136" stroke="#ddd" stroke-width="0.8"/><circle cx="1217" cy="340.836" r="0.9" fill="#eee"/>
<path d="M1563.6 341.136 Q1567.8 336.93600000000004 1572.0 341.136 Q1567.8 345.336 1563.6 341.136 Z" fill="none" stroke="#dcdcdc" stroke-width="0.9"/><circle cx="1567.8" cy="341.136" r="1.5" fill="#dcdcdc"/>
<rect x="1577.3999999999999" y="340.336" width="6.4" height="4.8" rx="0.5" fill="#050505"/><path d="M1578.6999999999998 340.336 V338.93600000000004 A1.9 1.9 0 0 1 1582.5 338.93600000000004 V340.336" fill="none" stroke="#050505" stroke-width="1.1"/>
<rect x="1590.1000000000001" y="337.536" width="7.2" height="7.2" fill="#f4f4f4" stroke="#0a0a0a" stroke-width="0.8"/>
<path d="M1590.7 344.136 L1596.7 338.136" stroke="#0a0a0a" stroke-width="1.1"/>
<rect x="1603.2" y="337.536" width="7.2" height="7.2" fill="#ffffff" stroke="#0a0a0a" stroke-width="0.8"/>
<rect x="1617.9" y="338.336" width="5.6" height="5.6" fill="#555" stroke="#222" stroke-width="0.7"/><rect x="1619.5" y="339.93600000000004" width="2.4" height="2.4" fill="#7a7a7a"/>
<rect x="1630.6" y="337.93600000000004" width="4.4" height="4.4" fill="#d8d8d8"/><rect x="1632.6" y="339.93600000000004" width="4.4" height="4.4" fill="#d8d8d8" stroke="#383838" stroke-width="0.8"/><rect x="1634.0" y="341.336" width="1.8" height="1.8" fill="#222"/>
<path d="M1643.4 343.93600000000004 L1647.2 338.336 M1645.8 343.93600000000004 L1649.6 338.336 M1648.2 343.93600000000004 L1652 338.336" stroke="#d8d8d8" stroke-width="1.2"/>
<path d="M1213.6 355.05400000000003 Q1215.5 350.954 1220.4 349.654" fill="none" stroke="#aaa" stroke-width="0.8"/><path d="M1214.6 350.854 L1219.4 353.454" stroke="#ddd" stroke-width="0.8"/><circle cx="1217" cy="352.154" r="0.9" fill="#eee"/>
<path d="M1563.6 352.454 Q1567.8 348.254 1572.0 352.454 Q1567.8 356.654 1563.6 352.454 Z" fill="none" stroke="#dcdcdc" stroke-width="0.9"/><circle cx="1567.8" cy="352.454" r="1.5" fill="#dcdcdc"/>
<rect x="1590.1000000000001" y="348.854" width="7.2" height="7.2" fill="#f4f4f4" stroke="#0a0a0a" stroke-width="0.8"/>
<path d="M1590.7 355.454 L1596.7 349.454" stroke="#0a0a0a" stroke-width="1.1"/>
<rect x="1603.2" y="348.854" width="7.2" height="7.2" fill="#ffffff" stroke="#0a0a0a" stroke-width="0.8"/>
<rect x="1617.9" y="349.654" width="5.6" height="5.6" fill="#555" stroke="#222" stroke-width="0.7"/><rect x="1619.5" y="351.254" width="2.4" height="2.4" fill="#7a7a7a"/>
<rect x="1630.6" y="349.254" width="4.4" height="4.4" fill="#d8d8d8"/><rect x="1632.6" y="351.254" width="4.4" height="4.4" fill="#d8d8d8" stroke="#383838" stroke-width="0.8"/><rect x="1634.0" y="352.654" width="1.8" height="1.8" fill="#222"/>
<path d="M1643.4 355.254 L1647.2 349.654 M1645.8 355.254 L1649.6 349.654 M1648.2 355.254 L1652 349.654" stroke="#d8d8d8" stroke-width="1.2"/>
<rect x="1201.8" y="361.572" width="4.4" height="4.4" fill="#383838"/><path d="M1202.4 363.772 H1205.6" stroke="#9a9a9a" stroke-width="0.9"/>
<path d="M1212.0 361.17199999999997 H1219.1999999999998 L1221.6 366.772 H1214.1999999999998 Z" fill="#f2f2f2" stroke="#111" stroke-width="0.5"/>
<path d="M1563.6 363.772 Q1567.8 359.572 1572.0 363.772 Q1567.8 367.972 1563.6 363.772 Z" fill="none" stroke="#dcdcdc" stroke-width="0.9"/><circle cx="1567.8" cy="363.772" r="1.5" fill="#dcdcdc"/>
<rect x="1617.9" y="360.972" width="5.6" height="5.6" fill="#555" stroke="#222" stroke-width="0.7"/><rect x="1619.5" y="362.572" width="2.4" height="2.4" fill="#7a7a7a"/>
<rect x="1630.6" y="360.572" width="4.4" height="4.4" fill="#d8d8d8"/><rect x="1632.6" y="362.572" width="4.4" height="4.4" fill="#d8d8d8" stroke="#383838" stroke-width="0.8"/><rect x="1634.0" y="363.972" width="1.8" height="1.8" fill="#222"/>
<path d="M1643.4 366.572 L1647.2 360.972 M1645.8 366.572 L1649.6 360.972 M1648.2 366.572 L1652 360.972" stroke="#d8d8d8" stroke-width="1.2"/>
<path d="M1227.6 377.89 Q1226.6 373.48999999999995 1231 373.48999999999995" fill="none" stroke="#9a9a9a" stroke-width="0.8"/><path d="M1229.8 377.89 V375.69 Q1230 374.69 1231.6 375.28999999999996" fill="none" stroke="#9a9a9a" stroke-width="0.7"/><rect x="1225.2" y="371.89" width="1.3" height="1.3" fill="#ddd"/>
<path d="M1563.6 375.09 Q1567.8 370.89 1572.0 375.09 Q1567.8 379.28999999999996 1563.6 375.09 Z" fill="none" stroke="#dcdcdc" stroke-width="0.9"/><circle cx="1567.8" cy="375.09" r="1.5" fill="#dcdcdc"/>
<rect x="1590.1000000000001" y="371.48999999999995" width="7.2" height="7.2" fill="#8ce4f4" stroke="#0a0a0a" stroke-width="0.8"/>
<rect x="1603.2" y="371.48999999999995" width="7.2" height="7.2" fill="#ffffff" stroke="#0a0a0a" stroke-width="0.8"/>
<rect x="1617.9" y="372.28999999999996" width="5.6" height="5.6" fill="#555" stroke="#222" stroke-width="0.7"/><rect x="1619.5" y="373.89" width="2.4" height="2.4" fill="#7a7a7a"/>
<rect x="1630.6" y="371.89" width="4.4" height="4.4" fill="#d8d8d8"/><rect x="1632.6" y="373.89" width="4.4" height="4.4" fill="#d8d8d8" stroke="#383838" stroke-width="0.8"/><rect x="1634.0" y="375.28999999999996" width="1.8" height="1.8" fill="#222"/>
<path d="M1643.4 377.89 L1647.2 372.28999999999996 M1645.8 377.89 L1649.6 372.28999999999996 M1648.2 377.89 L1652 372.28999999999996" stroke="#d8d8d8" stroke-width="1.2"/>
<path d="M1227.6 389.208 Q1226.6 384.808 1231 384.808" fill="none" stroke="#9a9a9a" stroke-width="0.8"/><path d="M1229.8 389.208 V387.00800000000004 Q1230 386.00800000000004 1231.6 386.608" fill="none" stroke="#9a9a9a" stroke-width="0.7"/><rect x="1225.2" y="383.208" width="1.3" height="1.3" fill="#ddd"/>
<path d="M1563.6 386.408 Q1567.8 382.208 1572.0 386.408 Q1567.8 390.608 1563.6 386.408 Z" fill="none" stroke="#dcdcdc" stroke-width="0.9"/><circle cx="1567.8" cy="386.408" r="1.5" fill="#dcdcdc"/>
<rect x="1590.1000000000001" y="382.808" width="7.2" height="7.2" fill="#8ce4f4" stroke="#0a0a0a" stroke-width="0.8"/>
<rect x="1603.2" y="382.808" width="7.2" height="7.2" fill="#ffffff" stroke="#0a0a0a" stroke-width="0.8"/>
<rect x="1617.9" y="383.608" width="5.6" height="5.6" fill="#555" stroke="#222" stroke-width="0.7"/><rect x="1619.5" y="385.208" width="2.4" height="2.4" fill="#7a7a7a"/>
<rect x="1630.6" y="383.208" width="4.4" height="4.4" fill="#d8d8d8"/><rect x="1632.6" y="385.208" width="4.4" height="4.4" fill="#d8d8d8" stroke="#383838" stroke-width="0.8"/><rect x="1634.0" y="386.608" width="1.8" height="1.8" fill="#222"/>
<path d="M1643.4 389.208 L1647.2 383.608 M1645.8 389.208 L1649.6 383.608 M1648.2 389.208 L1652 383.608" stroke="#d8d8d8" stroke-width="1.2"/>
<rect x="1201.8" y="395.526" width="4.4" height="4.4" fill="#383838"/><path d="M1202.4 397.726 H1205.6" stroke="#9a9a9a" stroke-width="0.9"/>
<path d="M1212.0 395.126 H1219.1999999999998 L1221.6 400.726 H1214.1999999999998 Z" fill="#f2f2f2" stroke="#111" stroke-width="0.5"/>
<path d="M1563.6 397.726 Q1567.8 393.526 1572.0 397.726 Q1567.8 401.926 1563.6 397.726 Z" fill="none" stroke="#dcdcdc" stroke-width="0.9"/><circle cx="1567.8" cy="397.726" r="1.5" fill="#dcdcdc"/>
<rect x="1617.9" y="394.926" width="5.6" height="5.6" fill="#555" stroke="#222" stroke-width="0.7"/><rect x="1619.5" y="396.526" width="2.4" height="2.4" fill="#7a7a7a"/>
<rect x="1630.6" y="394.526" width="4.4" height="4.4" fill="#d8d8d8"/><rect x="1632.6" y="396.526" width="4.4" height="4.4" fill="#d8d8d8" stroke="#383838" stroke-width="0.8"/><rect x="1634.0" y="397.926" width="1.8" height="1.8" fill="#222"/>
<path d="M1643.4 400.526 L1647.2 394.926 M1645.8 400.526 L1649.6 394.926 M1648.2 400.526 L1652 394.926" stroke="#d8d8d8" stroke-width="1.2"/>
<path d="M1227.6 411.844 Q1226.6 407.44399999999996 1231 407.44399999999996" fill="none" stroke="#9a9a9a" stroke-width="0.8"/><path d="M1229.8 411.844 V409.644 Q1230 408.644 1231.6 409.24399999999997" fill="none" stroke="#9a9a9a" stroke-width="0.7"/><rect x="1225.2" y="405.844" width="1.3" height="1.3" fill="#ddd"/>
<path d="M1563.6 409.044 Q1567.8 404.844 1572.0 409.044 Q1567.8 413.24399999999997 1563.6 409.044 Z" fill="none" stroke="#dcdcdc" stroke-width="0.9"/><circle cx="1567.8" cy="409.044" r="1.5" fill="#dcdcdc"/>
<rect x="1590.1000000000001" y="405.44399999999996" width="7.2" height="7.2" fill="#d418d4" stroke="#0a0a0a" stroke-width="0.8"/>
<rect x="1603.2" y="405.44399999999996" width="7.2" height="7.2" fill="#ffffff" stroke="#0a0a0a" stroke-width="0.8"/>
<rect x="1617.9" y="406.24399999999997" width="5.6" height="5.6" fill="#555" stroke="#222" stroke-width="0.7"/><rect x="1619.5" y="407.844" width="2.4" height="2.4" fill="#7a7a7a"/>
<rect x="1630.6" y="405.844" width="4.4" height="4.4" fill="#d8d8d8"/><rect x="1632.6" y="407.844" width="4.4" height="4.4" fill="#d8d8d8" stroke="#383838" stroke-width="0.8"/><rect x="1634.0" y="409.24399999999997" width="1.8" height="1.8" fill="#222"/>
<path d="M1643.4 411.844 L1647.2 406.24399999999997 M1645.8 411.844 L1649.6 406.24399999999997 M1648.2 411.844 L1652 406.24399999999997" stroke="#d8d8d8" stroke-width="1.2"/>
<path d="M1227.6 423.162 Q1226.6 418.76199999999994 1231 418.76199999999994" fill="none" stroke="#9a9a9a" stroke-width="0.8"/><path d="M1229.8 423.162 V420.962 Q1230 419.962 1231.6 420.56199999999995" fill="none" stroke="#9a9a9a" stroke-width="0.7"/><rect x="1225.2" y="417.162" width="1.3" height="1.3" fill="#ddd"/>
<path d="M1563.6 420.36199999999997 Q1567.8 416.162 1572.0 420.36199999999997 Q1567.8 424.56199999999995 1563.6 420.36199999999997 Z" fill="none" stroke="#dcdcdc" stroke-width="0.9"/><circle cx="1567.8" cy="420.36199999999997" r="1.5" fill="#dcdcdc"/>
<rect x="1590.1000000000001" y="416.76199999999994" width="7.2" height="7.2" fill="#d418d4" stroke="#0a0a0a" stroke-width="0.8"/>
<rect x="1603.2" y="416.76199999999994" width="7.2" height="7.2" fill="#ffffff" stroke="#0a0a0a" stroke-width="0.8"/>
<rect x="1617.9" y="417.56199999999995" width="5.6" height="5.6" fill="#555" stroke="#222" stroke-width="0.7"/><rect x="1619.5" y="419.162" width="2.4" height="2.4" fill="#7a7a7a"/>
<rect x="1630.6" y="417.162" width="4.4" height="4.4" fill="#d8d8d8"/><rect x="1632.6" y="419.162" width="4.4" height="4.4" fill="#d8d8d8" stroke="#383838" stroke-width="0.8"/><rect x="1634.0" y="420.56199999999995" width="1.8" height="1.8" fill="#222"/>
<path d="M1643.4 423.162 L1647.2 417.56199999999995 M1645.8 423.162 L1649.6 417.56199999999995 M1648.2 423.162 L1652 417.56199999999995" stroke="#d8d8d8" stroke-width="1.2"/>
<path d="M1227.6 434.48 Q1226.6 430.08 1231 430.08" fill="none" stroke="#9a9a9a" stroke-width="0.8"/><path d="M1229.8 434.48 V432.28000000000003 Q1230 431.28000000000003 1231.6 431.88" fill="none" stroke="#9a9a9a" stroke-width="0.7"/><rect x="1225.2" y="428.48" width="1.3" height="1.3" fill="#ddd"/>
<path d="M1563.6 431.68 Q1567.8 427.48 1572.0 431.68 Q1567.8 435.88 1563.6 431.68 Z" fill="none" stroke="#dcdcdc" stroke-width="0.9"/><circle cx="1567.8" cy="431.68" r="1.5" fill="#dcdcdc"/>
<rect x="1590.1000000000001" y="428.08" width="7.2" height="7.2" fill="#d418d4" stroke="#0a0a0a" stroke-width="0.8"/>
<rect x="1603.2" y="428.08" width="7.2" height="7.2" fill="#ffffff" stroke="#0a0a0a" stroke-width="0.8"/>
<rect x="1617.9" y="428.88" width="5.6" height="5.6" fill="#555" stroke="#222" stroke-width="0.7"/><rect x="1619.5" y="430.48" width="2.4" height="2.4" fill="#7a7a7a"/>
<rect x="1630.6" y="428.48" width="4.4" height="4.4" fill="#d8d8d8"/><rect x="1632.6" y="430.48" width="4.4" height="4.4" fill="#d8d8d8" stroke="#383838" stroke-width="0.8"/><rect x="1634.0" y="431.88" width="1.8" height="1.8" fill="#222"/>
<path d="M1643.4 434.48 L1647.2 428.88 M1645.8 434.48 L1649.6 428.88 M1648.2 434.48 L1652 428.88" stroke="#d8d8d8" stroke-width="1.2"/>
<path d="M1227.6 445.798 Q1226.6 441.39799999999997 1231 441.39799999999997" fill="none" stroke="#9a9a9a" stroke-width="0.8"/><path d="M1229.8 445.798 V443.598 Q1230 442.598 1231.6 443.198" fill="none" stroke="#9a9a9a" stroke-width="0.7"/><rect x="1225.2" y="439.798" width="1.3" height="1.3" fill="#ddd"/>
<path d="M1563.6 442.998 Q1567.8 438.798 1572.0 442.998 Q1567.8 447.198 1563.6 442.998 Z" fill="none" stroke="#dcdcdc" stroke-width="0.9"/><circle cx="1567.8" cy="442.998" r="1.5" fill="#dcdcdc"/>
<rect x="1590.1000000000001" y="439.39799999999997" width="7.2" height="7.2" fill="#d418d4" stroke="#0a0a0a" stroke-width="0.8"/>
<rect x="1603.2" y="439.39799999999997" width="7.2" height="7.2" fill="#ffffff" stroke="#0a0a0a" stroke-width="0.8"/>
<rect x="1617.9" y="440.198" width="5.6" height="5.6" fill="#555" stroke="#222" stroke-width="0.7"/><rect x="1619.5" y="441.798" width="2.4" height="2.4" fill="#7a7a7a"/>
<rect x="1630.6" y="439.798" width="4.4" height="4.4" fill="#d8d8d8"/><rect x="1632.6" y="441.798" width="4.4" height="4.4" fill="#d8d8d8" stroke="#383838" stroke-width="0.8"/><rect x="1634.0" y="443.198" width="1.8" height="1.8" fill="#222"/>
<path d="M1643.4 445.798 L1647.2 440.198 M1645.8 445.798 L1649.6 440.198 M1648.2 445.798 L1652 440.198" stroke="#d8d8d8" stroke-width="1.2"/>
<path d="M1227.6 457.11600000000004 Q1226.6 452.716 1231 452.716" fill="none" stroke="#9a9a9a" stroke-width="0.8"/><path d="M1229.8 457.11600000000004 V454.91600000000005 Q1230 453.91600000000005 1231.6 454.516" fill="none" stroke="#9a9a9a" stroke-width="0.7"/><rect x="1225.2" y="451.11600000000004" width="1.3" height="1.3" fill="#ddd"/>
<path d="M1563.6 454.31600000000003 Q1567.8 450.11600000000004 1572.0 454.31600000000003 Q1567.8 458.516 1563.6 454.31600000000003 Z" fill="none" stroke="#dcdcdc" stroke-width="0.9"/><circle cx="1567.8" cy="454.31600000000003" r="1.5" fill="#dcdcdc"/>
<rect x="1590.1000000000001" y="450.716" width="7.2" height="7.2" fill="#d418d4" stroke="#0a0a0a" stroke-width="0.8"/>
<rect x="1603.2" y="450.716" width="7.2" height="7.2" fill="#ffffff" stroke="#0a0a0a" stroke-width="0.8"/>
<rect x="1617.9" y="451.516" width="5.6" height="5.6" fill="#555" stroke="#222" stroke-width="0.7"/><rect x="1619.5" y="453.11600000000004" width="2.4" height="2.4" fill="#7a7a7a"/>
<rect x="1630.6" y="451.11600000000004" width="4.4" height="4.4" fill="#d8d8d8"/><rect x="1632.6" y="453.11600000000004" width="4.4" height="4.4" fill="#d8d8d8" stroke="#383838" stroke-width="0.8"/><rect x="1634.0" y="454.516" width="1.8" height="1.8" fill="#222"/>
<path d="M1643.4 457.11600000000004 L1647.2 451.516 M1645.8 457.11600000000004 L1649.6 451.516 M1648.2 457.11600000000004 L1652 451.516" stroke="#d8d8d8" stroke-width="1.2"/>
<path d="M1227.6 468.434 Q1226.6 464.034 1231 464.034" fill="none" stroke="#9a9a9a" stroke-width="0.8"/><path d="M1229.8 468.434 V466.23400000000004 Q1230 465.23400000000004 1231.6 465.834" fill="none" stroke="#9a9a9a" stroke-width="0.7"/><rect x="1225.2" y="462.434" width="1.3" height="1.3" fill="#ddd"/>
<path d="M1563.6 465.634 Q1567.8 461.434 1572.0 465.634 Q1567.8 469.834 1563.6 465.634 Z" fill="none" stroke="#dcdcdc" stroke-width="0.9"/><circle cx="1567.8" cy="465.634" r="1.5" fill="#dcdcdc"/>
<rect x="1590.1000000000001" y="462.034" width="7.2" height="7.2" fill="#d418d4" stroke="#0a0a0a" stroke-width="0.8"/>
<rect x="1603.2" y="462.034" width="7.2" height="7.2" fill="#ffffff" stroke="#0a0a0a" stroke-width="0.8"/>
<rect x="1617.9" y="462.834" width="5.6" height="5.6" fill="#555" stroke="#222" stroke-width="0.7"/><rect x="1619.5" y="464.434" width="2.4" height="2.4" fill="#7a7a7a"/>
<rect x="1630.6" y="462.434" width="4.4" height="4.4" fill="#d8d8d8"/><rect x="1632.6" y="464.434" width="4.4" height="4.4" fill="#d8d8d8" stroke="#383838" stroke-width="0.8"/><rect x="1634.0" y="465.834" width="1.8" height="1.8" fill="#222"/>
<path d="M1643.4 468.434 L1647.2 462.834 M1645.8 468.434 L1649.6 462.834 M1648.2 468.434 L1652 462.834" stroke="#d8d8d8" stroke-width="1.2"/>
<rect x="1201.8" y="474.752" width="4.4" height="4.4" fill="#383838"/><path d="M1202.4 476.952 H1205.6" stroke="#9a9a9a" stroke-width="0.9"/>
<path d="M1212.0 474.352 H1219.1999999999998 L1221.6 479.952 H1214.1999999999998 Z" fill="#f2f2f2" stroke="#111" stroke-width="0.5"/>
<path d="M1563.6 476.952 Q1567.8 472.752 1572.0 476.952 Q1567.8 481.152 1563.6 476.952 Z" fill="none" stroke="#dcdcdc" stroke-width="0.9"/><circle cx="1567.8" cy="476.952" r="1.5" fill="#dcdcdc"/>
<rect x="1617.9" y="474.152" width="5.6" height="5.6" fill="#555" stroke="#222" stroke-width="0.7"/><rect x="1619.5" y="475.752" width="2.4" height="2.4" fill="#7a7a7a"/>
<rect x="1630.6" y="473.752" width="4.4" height="4.4" fill="#d8d8d8"/><rect x="1632.6" y="475.752" width="4.4" height="4.4" fill="#d8d8d8" stroke="#383838" stroke-width="0.8"/><rect x="1634.0" y="477.152" width="1.8" height="1.8" fill="#222"/>
<path d="M1643.4 479.752 L1647.2 474.152 M1645.8 479.752 L1649.6 474.152 M1648.2 479.752 L1652 474.152" stroke="#d8d8d8" stroke-width="1.2"/>
<path d="M1227.6 491.07 Q1226.6 486.66999999999996 1231 486.66999999999996" fill="none" stroke="#9a9a9a" stroke-width="0.8"/><path d="M1229.8 491.07 V488.87 Q1230 487.87 1231.6 488.46999999999997" fill="none" stroke="#9a9a9a" stroke-width="0.7"/><rect x="1225.2" y="485.07" width="1.3" height="1.3" fill="#ddd"/>
<path d="M1563.6 488.27 Q1567.8 484.07 1572.0 488.27 Q1567.8 492.46999999999997 1563.6 488.27 Z" fill="none" stroke="#dcdcdc" stroke-width="0.9"/><circle cx="1567.8" cy="488.27" r="1.5" fill="#dcdcdc"/>
<rect x="1590.1000000000001" y="484.66999999999996" width="7.2" height="7.2" fill="#18e028" stroke="#0a0a0a" stroke-width="0.8"/>
<rect x="1603.2" y="484.66999999999996" width="7.2" height="7.2" fill="#ffffff" stroke="#0a0a0a" stroke-width="0.8"/>
<rect x="1617.9" y="485.46999999999997" width="5.6" height="5.6" fill="#555" stroke="#222" stroke-width="0.7"/><rect x="1619.5" y="487.07" width="2.4" height="2.4" fill="#7a7a7a"/>
<rect x="1630.6" y="485.07" width="4.4" height="4.4" fill="#d8d8d8"/><rect x="1632.6" y="487.07" width="4.4" height="4.4" fill="#d8d8d8" stroke="#383838" stroke-width="0.8"/><rect x="1634.0" y="488.46999999999997" width="1.8" height="1.8" fill="#222"/>
<path d="M1643.4 491.07 L1647.2 485.46999999999997 M1645.8 491.07 L1649.6 485.46999999999997 M1648.2 491.07 L1652 485.46999999999997" stroke="#d8d8d8" stroke-width="1.2"/>
<rect x="1201.8" y="497.388" width="4.4" height="4.4" fill="#383838"/><path d="M1202.4 499.58799999999997 H1205.6" stroke="#9a9a9a" stroke-width="0.9"/>
<path d="M1212.0 496.98799999999994 H1219.1999999999998 L1221.6 502.58799999999997 H1214.1999999999998 Z" fill="#f2f2f2" stroke="#111" stroke-width="0.5"/>
<path d="M1563.6 499.58799999999997 Q1567.8 495.388 1572.0 499.58799999999997 Q1567.8 503.78799999999995 1563.6 499.58799999999997 Z" fill="none" stroke="#dcdcdc" stroke-width="0.9"/><circle cx="1567.8" cy="499.58799999999997" r="1.5" fill="#dcdcdc"/>
<rect x="1617.9" y="496.78799999999995" width="5.6" height="5.6" fill="#555" stroke="#222" stroke-width="0.7"/><rect x="1619.5" y="498.388" width="2.4" height="2.4" fill="#7a7a7a"/>
<rect x="1630.6" y="496.388" width="4.4" height="4.4" fill="#d8d8d8"/><rect x="1632.6" y="498.388" width="4.4" height="4.4" fill="#d8d8d8" stroke="#383838" stroke-width="0.8"/><rect x="1634.0" y="499.78799999999995" width="1.8" height="1.8" fill="#222"/>
<path d="M1643.4 502.388 L1647.2 496.78799999999995 M1645.8 502.388 L1649.6 496.78799999999995 M1648.2 502.388 L1652 496.78799999999995" stroke="#d8d8d8" stroke-width="1.2"/>
<path d="M1227.6 513.706 Q1226.6 509.306 1231 509.306" fill="none" stroke="#9a9a9a" stroke-width="0.8"/><path d="M1229.8 513.706 V511.50600000000003 Q1230 510.50600000000003 1231.6 511.106" fill="none" stroke="#9a9a9a" stroke-width="0.7"/><rect x="1225.2" y="507.706" width="1.3" height="1.3" fill="#ddd"/>
<path d="M1563.6 510.906 Q1567.8 506.706 1572.0 510.906 Q1567.8 515.106 1563.6 510.906 Z" fill="none" stroke="#dcdcdc" stroke-width="0.9"/><circle cx="1567.8" cy="510.906" r="1.5" fill="#dcdcdc"/>
<rect x="1590.1000000000001" y="507.306" width="7.2" height="7.2" fill="#f01010" stroke="#0a0a0a" stroke-width="0.8"/>
<rect x="1603.2" y="507.306" width="7.2" height="7.2" fill="#ffffff" stroke="#0a0a0a" stroke-width="0.8"/>
<rect x="1617.9" y="508.106" width="5.6" height="5.6" fill="#555" stroke="#222" stroke-width="0.7"/><rect x="1619.5" y="509.706" width="2.4" height="2.4" fill="#7a7a7a"/>
<rect x="1630.6" y="507.706" width="4.4" height="4.4" fill="#d8d8d8"/><rect x="1632.6" y="509.706" width="4.4" height="4.4" fill="#d8d8d8" stroke="#383838" stroke-width="0.8"/><rect x="1634.0" y="511.106" width="1.8" height="1.8" fill="#222"/>
<path d="M1643.4 513.706 L1647.2 508.106 M1645.8 513.706 L1649.6 508.106 M1648.2 513.706 L1652 508.106" stroke="#d8d8d8" stroke-width="1.2"/>
<path d="M1227.6 525.0239999999999 Q1226.6 520.6239999999999 1231 520.6239999999999" fill="none" stroke="#9a9a9a" stroke-width="0.8"/><path d="M1229.8 525.0239999999999 V522.824 Q1230 521.824 1231.6 522.424" fill="none" stroke="#9a9a9a" stroke-width="0.7"/><rect x="1225.2" y="519.0239999999999" width="1.3" height="1.3" fill="#ddd"/>
<path d="M1563.6 522.2239999999999 Q1567.8 518.0239999999999 1572.0 522.2239999999999 Q1567.8 526.424 1563.6 522.2239999999999 Z" fill="none" stroke="#dcdcdc" stroke-width="0.9"/><circle cx="1567.8" cy="522.2239999999999" r="1.5" fill="#dcdcdc"/>
<rect x="1590.1000000000001" y="518.6239999999999" width="7.2" height="7.2" fill="#f01010" stroke="#0a0a0a" stroke-width="0.8"/>
<rect x="1603.2" y="518.6239999999999" width="7.2" height="7.2" fill="#ffffff" stroke="#0a0a0a" stroke-width="0.8"/>
<rect x="1617.9" y="519.424" width="5.6" height="5.6" fill="#555" stroke="#222" stroke-width="0.7"/><rect x="1619.5" y="521.0239999999999" width="2.4" height="2.4" fill="#7a7a7a"/>
<rect x="1630.6" y="519.0239999999999" width="4.4" height="4.4" fill="#d8d8d8"/><rect x="1632.6" y="521.0239999999999" width="4.4" height="4.4" fill="#d8d8d8" stroke="#383838" stroke-width="0.8"/><rect x="1634.0" y="522.424" width="1.8" height="1.8" fill="#222"/>
<path d="M1643.4 525.0239999999999 L1647.2 519.424 M1645.8 525.0239999999999 L1649.6 519.424 M1648.2 525.0239999999999 L1652 519.424" stroke="#d8d8d8" stroke-width="1.2"/>
<path d="M1227.6 536.342 Q1226.6 531.942 1231 531.942" fill="none" stroke="#9a9a9a" stroke-width="0.8"/><path d="M1229.8 536.342 V534.142 Q1230 533.142 1231.6 533.7420000000001" fill="none" stroke="#9a9a9a" stroke-width="0.7"/><rect x="1225.2" y="530.342" width="1.3" height="1.3" fill="#ddd"/>
<path d="M1563.6 533.542 Q1567.8 529.342 1572.0 533.542 Q1567.8 537.7420000000001 1563.6 533.542 Z" fill="none" stroke="#dcdcdc" stroke-width="0.9"/><circle cx="1567.8" cy="533.542" r="1.5" fill="#dcdcdc"/>
<rect x="1590.1000000000001" y="529.942" width="7.2" height="7.2" fill="#f01010" stroke="#0a0a0a" stroke-width="0.8"/>
<rect x="1603.2" y="529.942" width="7.2" height="7.2" fill="#ffffff" stroke="#0a0a0a" stroke-width="0.8"/>
<rect x="1617.9" y="530.7420000000001" width="5.6" height="5.6" fill="#555" stroke="#222" stroke-width="0.7"/><rect x="1619.5" y="532.342" width="2.4" height="2.4" fill="#7a7a7a"/>
<rect x="1630.6" y="530.342" width="4.4" height="4.4" fill="#d8d8d8"/><rect x="1632.6" y="532.342" width="4.4" height="4.4" fill="#d8d8d8" stroke="#383838" stroke-width="0.8"/><rect x="1634.0" y="533.7420000000001" width="1.8" height="1.8" fill="#222"/>
<path d="M1643.4 536.342 L1647.2 530.7420000000001 M1645.8 536.342 L1649.6 530.7420000000001 M1648.2 536.342 L1652 530.7420000000001" stroke="#d8d8d8" stroke-width="1.2"/>
<rect x="1201.8" y="542.66" width="4.4" height="4.4" fill="#383838"/><path d="M1202.4 544.86 H1205.6" stroke="#9a9a9a" stroke-width="0.9"/>
<path d="M1212.0 542.26 H1219.1999999999998 L1221.6 547.86 H1214.1999999999998 Z" fill="#f2f2f2" stroke="#111" stroke-width="0.5"/>
<path d="M1563.6 544.86 Q1567.8 540.66 1572.0 544.86 Q1567.8 549.0600000000001 1563.6 544.86 Z" fill="none" stroke="#dcdcdc" stroke-width="0.9"/><circle cx="1567.8" cy="544.86" r="1.5" fill="#dcdcdc"/>
<rect x="1617.9" y="542.0600000000001" width="5.6" height="5.6" fill="#555" stroke="#222" stroke-width="0.7"/><rect x="1619.5" y="543.66" width="2.4" height="2.4" fill="#7a7a7a"/>
<rect x="1630.6" y="541.66" width="4.4" height="4.4" fill="#d8d8d8"/><rect x="1632.6" y="543.66" width="4.4" height="4.4" fill="#d8d8d8" stroke="#383838" stroke-width="0.8"/><rect x="1634.0" y="545.0600000000001" width="1.8" height="1.8" fill="#222"/>
<path d="M1643.4 547.66 L1647.2 542.0600000000001 M1645.8 547.66 L1649.6 542.0600000000001 M1648.2 547.66 L1652 542.0600000000001" stroke="#d8d8d8" stroke-width="1.2"/>
<path d="M1227.6 558.978 Q1226.6 554.578 1231 554.578" fill="none" stroke="#9a9a9a" stroke-width="0.8"/><path d="M1229.8 558.978 V556.778 Q1230 555.778 1231.6 556.378" fill="none" stroke="#9a9a9a" stroke-width="0.7"/><rect x="1225.2" y="552.978" width="1.3" height="1.3" fill="#ddd"/>
<path d="M1563.6 556.178 Q1567.8 551.978 1572.0 556.178 Q1567.8 560.378 1563.6 556.178 Z" fill="none" stroke="#dcdcdc" stroke-width="0.9"/><circle cx="1567.8" cy="556.178" r="1.5" fill="#dcdcdc"/>
<rect x="1590.1000000000001" y="552.578" width="7.2" height="7.2" fill="#f4f4f4" stroke="#0a0a0a" stroke-width="0.8"/>
<path d="M1590.7 559.178 L1596.7 553.178" stroke="#0a0a0a" stroke-width="1.1"/>
<rect x="1603.2" y="552.578" width="7.2" height="7.2" fill="#ffffff" stroke="#0a0a0a" stroke-width="0.8"/>
<rect x="1617.9" y="553.378" width="5.6" height="5.6" fill="#555" stroke="#222" stroke-width="0.7"/><rect x="1619.5" y="554.978" width="2.4" height="2.4" fill="#7a7a7a"/>
<rect x="1630.6" y="552.978" width="4.4" height="4.4" fill="#d8d8d8"/><rect x="1632.6" y="554.978" width="4.4" height="4.4" fill="#d8d8d8" stroke="#383838" stroke-width="0.8"/><rect x="1634.0" y="556.378" width="1.8" height="1.8" fill="#222"/>
<path d="M1643.4 558.978 L1647.2 553.378 M1645.8 558.978 L1649.6 553.378 M1648.2 558.978 L1652 553.378" stroke="#d8d8d8" stroke-width="1.2"/>
<path d="M1227.6 570.2959999999999 Q1226.6 565.896 1231 565.896" fill="none" stroke="#9a9a9a" stroke-width="0.8"/><path d="M1229.8 570.2959999999999 V568.096 Q1230 567.096 1231.6 567.696" fill="none" stroke="#9a9a9a" stroke-width="0.7"/><rect x="1225.2" y="564.2959999999999" width="1.3" height="1.3" fill="#ddd"/>
<path d="M1563.6 567.496 Q1567.8 563.2959999999999 1572.0 567.496 Q1567.8 571.696 1563.6 567.496 Z" fill="none" stroke="#dcdcdc" stroke-width="0.9"/><circle cx="1567.8" cy="567.496" r="1.5" fill="#dcdcdc"/>
<rect x="1590.1000000000001" y="563.896" width="7.2" height="7.2" fill="#f4f4f4" stroke="#0a0a0a" stroke-width="0.8"/>
<path d="M1590.7 570.496 L1596.7 564.496" stroke="#0a0a0a" stroke-width="1.1"/>
<rect x="1603.2" y="563.896" width="7.2" height="7.2" fill="#ffffff" stroke="#0a0a0a" stroke-width="0.8"/>
<rect x="1617.9" y="564.696" width="5.6" height="5.6" fill="#555" stroke="#222" stroke-width="0.7"/><rect x="1619.5" y="566.2959999999999" width="2.4" height="2.4" fill="#7a7a7a"/>
<rect x="1630.6" y="564.2959999999999" width="4.4" height="4.4" fill="#d8d8d8"/><rect x="1632.6" y="566.2959999999999" width="4.4" height="4.4" fill="#d8d8d8" stroke="#383838" stroke-width="0.8"/><rect x="1634.0" y="567.696" width="1.8" height="1.8" fill="#222"/>
<path d="M1643.4 570.2959999999999 L1647.2 564.696 M1645.8 570.2959999999999 L1649.6 564.696 M1648.2 570.2959999999999 L1652 564.696" stroke="#d8d8d8" stroke-width="1.2"/>
<path d="M1227.6 581.6139999999999 Q1226.6 577.2139999999999 1231 577.2139999999999" fill="none" stroke="#9a9a9a" stroke-width="0.8"/><path d="M1229.8 581.6139999999999 V579.414 Q1230 578.414 1231.6 579.014" fill="none" stroke="#9a9a9a" stroke-width="0.7"/><rect x="1225.2" y="575.6139999999999" width="1.3" height="1.3" fill="#ddd"/>
<path d="M1563.6 578.814 Q1567.8 574.6139999999999 1572.0 578.814 Q1567.8 583.014 1563.6 578.814 Z" fill="none" stroke="#dcdcdc" stroke-width="0.9"/><circle cx="1567.8" cy="578.814" r="1.5" fill="#dcdcdc"/>
<rect x="1590.1000000000001" y="575.2139999999999" width="7.2" height="7.2" fill="#f4f4f4" stroke="#0a0a0a" stroke-width="0.8"/>
<path d="M1590.7 581.814 L1596.7 575.814" stroke="#0a0a0a" stroke-width="1.1"/>
<rect x="1603.2" y="575.2139999999999" width="7.2" height="7.2" fill="#ffffff" stroke="#0a0a0a" stroke-width="0.8"/>
<rect x="1617.9" y="576.014" width="5.6" height="5.6" fill="#555" stroke="#222" stroke-width="0.7"/><rect x="1619.5" y="577.6139999999999" width="2.4" height="2.4" fill="#7a7a7a"/>
<rect x="1630.6" y="575.6139999999999" width="4.4" height="4.4" fill="#d8d8d8"/><rect x="1632.6" y="577.6139999999999" width="4.4" height="4.4" fill="#d8d8d8" stroke="#383838" stroke-width="0.8"/><rect x="1634.0" y="579.014" width="1.8" height="1.8" fill="#222"/>
<path d="M1643.4 581.6139999999999 L1647.2 576.014 M1645.8 581.6139999999999 L1649.6 576.014 M1648.2 581.6139999999999 L1652 576.014" stroke="#d8d8d8" stroke-width="1.2"/>
<path d="M1227.6 592.932 Q1226.6 588.532 1231 588.532" fill="none" stroke="#9a9a9a" stroke-width="0.8"/><path d="M1229.8 592.932 V590.7320000000001 Q1230 589.7320000000001 1231.6 590.3320000000001" fill="none" stroke="#9a9a9a" stroke-width="0.7"/><rect x="1225.2" y="586.932" width="1.3" height="1.3" fill="#ddd"/>
<path d="M1563.6 590.1320000000001 Q1567.8 585.932 1572.0 590.1320000000001 Q1567.8 594.3320000000001 1563.6 590.1320000000001 Z" fill="none" stroke="#dcdcdc" stroke-width="0.9"/><circle cx="1567.8" cy="590.1320000000001" r="1.5" fill="#dcdcdc"/>
<rect x="1590.1000000000001" y="586.532" width="7.2" height="7.2" fill="#f4f4f4" stroke="#0a0a0a" stroke-width="0.8"/>
<path d="M1590.7 593.1320000000001 L1596.7 587.1320000000001" stroke="#0a0a0a" stroke-width="1.1"/>
<rect x="1603.2" y="586.532" width="7.2" height="7.2" fill="#ffffff" stroke="#0a0a0a" stroke-width="0.8"/>
<rect x="1617.9" y="587.3320000000001" width="5.6" height="5.6" fill="#555" stroke="#222" stroke-width="0.7"/><rect x="1619.5" y="588.932" width="2.4" height="2.4" fill="#7a7a7a"/>
<rect x="1630.6" y="586.932" width="4.4" height="4.4" fill="#d8d8d8"/><rect x="1632.6" y="588.932" width="4.4" height="4.4" fill="#d8d8d8" stroke="#383838" stroke-width="0.8"/><rect x="1634.0" y="590.3320000000001" width="1.8" height="1.8" fill="#222"/>
<path d="M1643.4 592.932 L1647.2 587.3320000000001 M1645.8 592.932 L1649.6 587.3320000000001 M1648.2 592.932 L1652 587.3320000000001" stroke="#d8d8d8" stroke-width="1.2"/>
<path d="M1227.6 604.25 Q1226.6 599.85 1231 599.85" fill="none" stroke="#9a9a9a" stroke-width="0.8"/><path d="M1229.8 604.25 V602.0500000000001 Q1230 601.0500000000001 1231.6 601.6500000000001" fill="none" stroke="#9a9a9a" stroke-width="0.7"/><rect x="1225.2" y="598.25" width="1.3" height="1.3" fill="#ddd"/>
<path d="M1563.6 601.45 Q1567.8 597.25 1572.0 601.45 Q1567.8 605.6500000000001 1563.6 601.45 Z" fill="none" stroke="#dcdcdc" stroke-width="0.9"/><circle cx="1567.8" cy="601.45" r="1.5" fill="#dcdcdc"/>
<rect x="1590.1000000000001" y="597.85" width="7.2" height="7.2" fill="#f4f4f4" stroke="#0a0a0a" stroke-width="0.8"/>
<path d="M1590.7 604.45 L1596.7 598.45" stroke="#0a0a0a" stroke-width="1.1"/>
<rect x="1603.2" y="597.85" width="7.2" height="7.2" fill="#ffffff" stroke="#0a0a0a" stroke-width="0.8"/>
<rect x="1617.9" y="598.6500000000001" width="5.6" height="5.6" fill="#555" stroke="#222" stroke-width="0.7"/><rect x="1619.5" y="600.25" width="2.4" height="2.4" fill="#7a7a7a"/>
<rect x="1630.6" y="598.25" width="4.4" height="4.4" fill="#d8d8d8"/><rect x="1632.6" y="600.25" width="4.4" height="4.4" fill="#d8d8d8" stroke="#383838" stroke-width="0.8"/><rect x="1634.0" y="601.6500000000001" width="1.8" height="1.8" fill="#222"/>
<path d="M1643.4 604.25 L1647.2 598.6500000000001 M1645.8 604.25 L1649.6 598.6500000000001 M1648.2 604.25 L1652 598.6500000000001" stroke="#d8d8d8" stroke-width="1.2"/>
<path d="M1227.6 615.568 Q1226.6 611.168 1231 611.168" fill="none" stroke="#9a9a9a" stroke-width="0.8"/><path d="M1229.8 615.568 V613.368 Q1230 612.368 1231.6 612.9680000000001" fill="none" stroke="#9a9a9a" stroke-width="0.7"/><rect x="1225.2" y="609.568" width="1.3" height="1.3" fill="#ddd"/>
<path d="M1563.6 612.768 Q1567.8 608.568 1572.0 612.768 Q1567.8 616.9680000000001 1563.6 612.768 Z" fill="none" stroke="#dcdcdc" stroke-width="0.9"/><circle cx="1567.8" cy="612.768" r="1.5" fill="#dcdcdc"/>
<rect x="1590.1000000000001" y="609.168" width="7.2" height="7.2" fill="#f4f4f4" stroke="#0a0a0a" stroke-width="0.8"/>
<path d="M1590.7 615.768 L1596.7 609.768" stroke="#0a0a0a" stroke-width="1.1"/>
<rect x="1603.2" y="609.168" width="7.2" height="7.2" fill="#ffffff" stroke="#0a0a0a" stroke-width="0.8"/>
<rect x="1617.9" y="609.9680000000001" width="5.6" height="5.6" fill="#555" stroke="#222" stroke-width="0.7"/><rect x="1619.5" y="611.568" width="2.4" height="2.4" fill="#7a7a7a"/>
<rect x="1630.6" y="609.568" width="4.4" height="4.4" fill="#d8d8d8"/><rect x="1632.6" y="611.568" width="4.4" height="4.4" fill="#d8d8d8" stroke="#383838" stroke-width="0.8"/><rect x="1634.0" y="612.9680000000001" width="1.8" height="1.8" fill="#222"/>
<path d="M1643.4 615.568 L1647.2 609.9680000000001 M1645.8 615.568 L1649.6 609.9680000000001 M1648.2 615.568 L1652 609.9680000000001" stroke="#d8d8d8" stroke-width="1.2"/>
<rect x="1201.8" y="621.886" width="4.4" height="4.4" fill="#383838"/><path d="M1202.4 624.086 H1205.6" stroke="#9a9a9a" stroke-width="0.9"/>
<path d="M1212.0 621.486 H1219.1999999999998 L1221.6 627.086 H1214.1999999999998 Z" fill="#f2f2f2" stroke="#111" stroke-width="0.5"/>
<path d="M1563.6 624.086 Q1567.8 619.886 1572.0 624.086 Q1567.8 628.2860000000001 1563.6 624.086 Z" fill="none" stroke="#dcdcdc" stroke-width="0.9"/><circle cx="1567.8" cy="624.086" r="1.5" fill="#dcdcdc"/>
<rect x="1617.9" y="621.2860000000001" width="5.6" height="5.6" fill="#555" stroke="#222" stroke-width="0.7"/><rect x="1619.5" y="622.886" width="2.4" height="2.4" fill="#7a7a7a"/>
<rect x="1630.6" y="620.886" width="4.4" height="4.4" fill="#d8d8d8"/><rect x="1632.6" y="622.886" width="4.4" height="4.4" fill="#d8d8d8" stroke="#383838" stroke-width="0.8"/><rect x="1634.0" y="624.2860000000001" width="1.8" height="1.8" fill="#222"/>
<path d="M1643.4 626.886 L1647.2 621.2860000000001 M1645.8 626.886 L1649.6 621.2860000000001 M1648.2 626.886 L1652 621.2860000000001" stroke="#d8d8d8" stroke-width="1.2"/>
<path d="M1227.6 638.204 Q1226.6 633.804 1231 633.804" fill="none" stroke="#9a9a9a" stroke-width="0.8"/><path d="M1229.8 638.204 V636.004 Q1230 635.004 1231.6 635.604" fill="none" stroke="#9a9a9a" stroke-width="0.7"/><rect x="1225.2" y="632.204" width="1.3" height="1.3" fill="#ddd"/>
<path d="M1563.6 635.404 Q1567.8 631.204 1572.0 635.404 Q1567.8 639.604 1563.6 635.404 Z" fill="none" stroke="#dcdcdc" stroke-width="0.9"/><circle cx="1567.8" cy="635.404" r="1.5" fill="#dcdcdc"/>
<rect x="1590.1000000000001" y="631.804" width="7.2" height="7.2" fill="#f4f4f4" stroke="#0a0a0a" stroke-width="0.8"/>
<path d="M1590.7 638.404 L1596.7 632.404" stroke="#0a0a0a" stroke-width="1.1"/>
<rect x="1603.2" y="631.804" width="7.2" height="7.2" fill="#ffffff" stroke="#0a0a0a" stroke-width="0.8"/>
<rect x="1617.9" y="632.604" width="5.6" height="5.6" fill="#555" stroke="#222" stroke-width="0.7"/><rect x="1619.5" y="634.204" width="2.4" height="2.4" fill="#7a7a7a"/>
<rect x="1630.6" y="632.204" width="4.4" height="4.4" fill="#d8d8d8"/><rect x="1632.6" y="634.204" width="4.4" height="4.4" fill="#d8d8d8" stroke="#383838" stroke-width="0.8"/><rect x="1634.0" y="635.604" width="1.8" height="1.8" fill="#222"/>
<path d="M1643.4 638.204 L1647.2 632.604 M1645.8 638.204 L1649.6 632.604 M1648.2 638.204 L1652 632.604" stroke="#d8d8d8" stroke-width="1.2"/>
<path d="M1227.6 649.5219999999999 Q1226.6 645.122 1231 645.122" fill="none" stroke="#9a9a9a" stroke-width="0.8"/><path d="M1229.8 649.5219999999999 V647.322 Q1230 646.322 1231.6 646.922" fill="none" stroke="#9a9a9a" stroke-width="0.7"/><rect x="1225.2" y="643.5219999999999" width="1.3" height="1.3" fill="#ddd"/>
<path d="M1563.6 646.722 Q1567.8 642.5219999999999 1572.0 646.722 Q1567.8 650.922 1563.6 646.722 Z" fill="none" stroke="#dcdcdc" stroke-width="0.9"/><circle cx="1567.8" cy="646.722" r="1.5" fill="#dcdcdc"/>
<rect x="1590.1000000000001" y="643.122" width="7.2" height="7.2" fill="#f4f4f4" stroke="#0a0a0a" stroke-width="0.8"/>
<path d="M1590.7 649.722 L1596.7 643.722" stroke="#0a0a0a" stroke-width="1.1"/>
<rect x="1603.2" y="643.122" width="7.2" height="7.2" fill="#ffffff" stroke="#0a0a0a" stroke-width="0.8"/>
<rect x="1617.9" y="643.922" width="5.6" height="5.6" fill="#555" stroke="#222" stroke-width="0.7"/><rect x="1619.5" y="645.5219999999999" width="2.4" height="2.4" fill="#7a7a7a"/>
<rect x="1630.6" y="643.5219999999999" width="4.4" height="4.4" fill="#d8d8d8"/><rect x="1632.6" y="645.5219999999999" width="4.4" height="4.4" fill="#d8d8d8" stroke="#383838" stroke-width="0.8"/><rect x="1634.0" y="646.922" width="1.8" height="1.8" fill="#222"/>
<path d="M1643.4 649.5219999999999 L1647.2 643.922 M1645.8 649.5219999999999 L1649.6 643.922 M1648.2 649.5219999999999 L1652 643.922" stroke="#d8d8d8" stroke-width="1.2"/>
<rect x="1201.8" y="655.8399999999999" width="4.4" height="4.4" fill="#383838"/><path d="M1202.4 658.04 H1205.6" stroke="#9a9a9a" stroke-width="0.9"/>
<path d="M1212.0 655.4399999999999 H1219.1999999999998 L1221.6 661.04 H1214.1999999999998 Z" fill="#f2f2f2" stroke="#111" stroke-width="0.5"/>
<path d="M1563.6 658.04 Q1567.8 653.8399999999999 1572.0 658.04 Q1567.8 662.24 1563.6 658.04 Z" fill="none" stroke="#dcdcdc" stroke-width="0.9"/><circle cx="1567.8" cy="658.04" r="1.5" fill="#dcdcdc"/>
<rect x="1617.9" y="655.24" width="5.6" height="5.6" fill="#555" stroke="#222" stroke-width="0.7"/><rect x="1619.5" y="656.8399999999999" width="2.4" height="2.4" fill="#7a7a7a"/>
<rect x="1630.6" y="654.8399999999999" width="4.4" height="4.4" fill="#d8d8d8"/><rect x="1632.6" y="656.8399999999999" width="4.4" height="4.4" fill="#d8d8d8" stroke="#383838" stroke-width="0.8"/><rect x="1634.0" y="658.24" width="1.8" height="1.8" fill="#222"/>
<path d="M1643.4 660.8399999999999 L1647.2 655.24 M1645.8 660.8399999999999 L1649.6 655.24 M1648.2 660.8399999999999 L1652 655.24" stroke="#d8d8d8" stroke-width="1.2"/>
<path d="M1227.6 672.1579999999999 Q1226.6 667.7579999999999 1231 667.7579999999999" fill="none" stroke="#9a9a9a" stroke-width="0.8"/><path d="M1229.8 672.1579999999999 V669.958 Q1230 668.958 1231.6 669.558" fill="none" stroke="#9a9a9a" stroke-width="0.7"/><rect x="1225.2" y="666.1579999999999" width="1.3" height="1.3" fill="#ddd"/>
<path d="M1563.6 669.358 Q1567.8 665.1579999999999 1572.0 669.358 Q1567.8 673.558 1563.6 669.358 Z" fill="none" stroke="#dcdcdc" stroke-width="0.9"/><circle cx="1567.8" cy="669.358" r="1.5" fill="#dcdcdc"/>
<rect x="1590.1000000000001" y="665.7579999999999" width="7.2" height="7.2" fill="#109a18" stroke="#0a0a0a" stroke-width="0.8"/>
<rect x="1603.2" y="665.7579999999999" width="7.2" height="7.2" fill="#ffffff" stroke="#0a0a0a" stroke-width="0.8"/>
<rect x="1617.9" y="666.558" width="5.6" height="5.6" fill="#555" stroke="#222" stroke-width="0.7"/><rect x="1619.5" y="668.1579999999999" width="2.4" height="2.4" fill="#7a7a7a"/>
<rect x="1630.6" y="666.1579999999999" width="4.4" height="4.4" fill="#d8d8d8"/><rect x="1632.6" y="668.1579999999999" width="4.4" height="4.4" fill="#d8d8d8" stroke="#383838" stroke-width="0.8"/><rect x="1634.0" y="669.558" width="1.8" height="1.8" fill="#222"/>
<path d="M1643.4 672.1579999999999 L1647.2 666.558 M1645.8 672.1579999999999 L1649.6 666.558 M1648.2 672.1579999999999 L1652 666.558" stroke="#d8d8d8" stroke-width="1.2"/>
<path d="M1227.6 683.4759999999999 Q1226.6 679.0759999999999 1231 679.0759999999999" fill="none" stroke="#9a9a9a" stroke-width="0.8"/><path d="M1229.8 683.4759999999999 V681.276 Q1230 680.276 1231.6 680.876" fill="none" stroke="#9a9a9a" stroke-width="0.7"/><rect x="1225.2" y="677.4759999999999" width="1.3" height="1.3" fill="#ddd"/>
<path d="M1563.6 680.6759999999999 Q1567.8 676.4759999999999 1572.0 680.6759999999999 Q1567.8 684.876 1563.6 680.6759999999999 Z" fill="none" stroke="#dcdcdc" stroke-width="0.9"/><circle cx="1567.8" cy="680.6759999999999" r="1.5" fill="#dcdcdc"/>
<rect x="1590.1000000000001" y="677.0759999999999" width="7.2" height="7.2" fill="#109a18" stroke="#0a0a0a" stroke-width="0.8"/>
<rect x="1603.2" y="677.0759999999999" width="7.2" height="7.2" fill="#ffffff" stroke="#0a0a0a" stroke-width="0.8"/>
<rect x="1617.9" y="677.876" width="5.6" height="5.6" fill="#555" stroke="#222" stroke-width="0.7"/><rect x="1619.5" y="679.4759999999999" width="2.4" height="2.4" fill="#7a7a7a"/>
<rect x="1630.6" y="677.4759999999999" width="4.4" height="4.4" fill="#d8d8d8"/><rect x="1632.6" y="679.4759999999999" width="4.4" height="4.4" fill="#d8d8d8" stroke="#383838" stroke-width="0.8"/><rect x="1634.0" y="680.876" width="1.8" height="1.8" fill="#222"/>
<path d="M1643.4 683.4759999999999 L1647.2 677.876 M1645.8 683.4759999999999 L1649.6 677.876 M1648.2 683.4759999999999 L1652 677.876" stroke="#d8d8d8" stroke-width="1.2"/>
<path d="M1227.6 694.7939999999999 Q1226.6 690.3939999999999 1231 690.3939999999999" fill="none" stroke="#9a9a9a" stroke-width="0.8"/><path d="M1229.8 694.7939999999999 V692.5939999999999 Q1230 691.5939999999999 1231.6 692.194" fill="none" stroke="#9a9a9a" stroke-width="0.7"/><rect x="1225.2" y="688.7939999999999" width="1.3" height="1.3" fill="#ddd"/>
<path d="M1563.6 691.9939999999999 Q1567.8 687.7939999999999 1572.0 691.9939999999999 Q1567.8 696.194 1563.6 691.9939999999999 Z" fill="none" stroke="#dcdcdc" stroke-width="0.9"/><circle cx="1567.8" cy="691.9939999999999" r="1.5" fill="#dcdcdc"/>
<rect x="1590.1000000000001" y="688.3939999999999" width="7.2" height="7.2" fill="#109a18" stroke="#0a0a0a" stroke-width="0.8"/>
<rect x="1603.2" y="688.3939999999999" width="7.2" height="7.2" fill="#ffffff" stroke="#0a0a0a" stroke-width="0.8"/>
<rect x="1617.9" y="689.194" width="5.6" height="5.6" fill="#555" stroke="#222" stroke-width="0.7"/><rect x="1619.5" y="690.7939999999999" width="2.4" height="2.4" fill="#7a7a7a"/>
<rect x="1630.6" y="688.7939999999999" width="4.4" height="4.4" fill="#d8d8d8"/><rect x="1632.6" y="690.7939999999999" width="4.4" height="4.4" fill="#d8d8d8" stroke="#383838" stroke-width="0.8"/><rect x="1634.0" y="692.194" width="1.8" height="1.8" fill="#222"/>
<path d="M1643.4 694.7939999999999 L1647.2 689.194 M1645.8 694.7939999999999 L1649.6 689.194 M1648.2 694.7939999999999 L1652 689.194" stroke="#d8d8d8" stroke-width="1.2"/>
<rect x="1185.8" y="777.8" width="12.4" height="10.6" rx="1" fill="#4a4a4a" stroke="#2a2a2a" stroke-width="0.6"/><path d="M1189 783.1 H1195 M1192 780.1 V786.1" stroke="#9a9a9a" stroke-width="1.3"/>
<rect x="1199.3999999999999" y="777.8" width="12.4" height="10.6" rx="1" fill="#4a4a4a" stroke="#2a2a2a" stroke-width="0.6"/><path d="M1202.6 783.1 H1208.6" stroke="#9a9a9a" stroke-width="1.3"/>
<g clip-path="url(#phc)"><rect x="410.2" y="147.8" width="611.0999999999999" height="343.59999999999997" fill="url(#water)"/><rect x="410.2" y="147.8" width="611.0999999999999" height="343.59999999999997" fill="url(#wlight)"/><path d="M401.7 198 V441M420.2 198 V441M438.7 198 V441M457.2 198 V441M475.7 198 V441M494.2 198 V441M512.7 198 V441M531.2 198 V441M549.7 198 V441M568.2 198 V441M586.7 198 V441M605.2 198 V441M623.7 198 V441M642.2 198 V441M660.7 198 V441M679.2 198 V441M697.7 198 V441M716.2 198 V441M734.7 198 V441M753.2 198 V441M771.7 198 V441M790.2 198 V441M808.7 198 V441M827.2 198 V441M845.7 198 V441M864.2 198 V441M882.7 198 V441M901.2 198 V441M919.7 198 V441M938.2 198 V441M956.7 198 V441M975.2 198 V441M993.7 198 V441M1012.2 198 V441M410.2 199.5 L1021.3 202.9M410.2 235.5 L1021.3 239.6M410.2 271.5 L1021.3 276.3M410.2 307.5 L1021.3 313.0M410.2 379.5 L1021.3 386.4M410.2 415.5 L1021.3 423.1" stroke="#00424c" stroke-width="0.8" fill="none" opacity="0.3"/><path d="M410.2 147.8 H1021.3 V160.5 L410.2 157 Z" fill="#03606a" opacity="0.7"/><path d="M410.2 157.4 L1021.3 161" stroke="#023e52" stroke-width="3" opacity="0.85"/><path d="M410.2 348 L1021.3 352.6" stroke="#003a46" stroke-width="1.5" opacity="0.9"/><path d="M410.2 441 L1021.3 441 V491.4 H410.2 Z" fill="#006068" opacity="0.8"/><path d="M309.0 441 L85.1 492M327.5 441 L113.8 492M346.0 441 L142.5 492M364.5 441 L171.2 492M383.0 441 L199.9 492M401.5 441 L228.5 492M420.0 441 L257.2 492M438.5 441 L285.9 492M457.0 441 L314.6 492M475.5 441 L343.2 492M494.0 441 L371.9 492M512.5 441 L400.6 492M531.0 441 L429.2 492M549.5 441 L457.9 492M568.0 441 L486.6 492M586.5 441 L515.3 492M605.0 441 L544.0 492M623.5 441 L572.6 492M642.0 441 L601.3 492M660.5 441 L630.0 492M679.0 441 L658.6 492M697.5 441 L687.3 492M716.0 441 L716.0 492M734.5 441 L744.7 492M753.0 441 L773.4 492M771.5 441 L802.0 492M790.0 441 L830.7 492M808.5 441 L859.4 492M827.0 441 L888.0 492M845.5 441 L916.7 492M864.0 441 L945.4 492M882.5 441 L974.1 492M901.0 441 L1002.8 492M919.5 441 L1031.4 492M938.0 441 L1060.1 492M956.5 441 L1088.8 492M975.0 441 L1117.5 492M993.5 441 L1146.1 492M1012.0 441 L1174.8 492M1030.5 441 L1203.5 492M1049.0 441 L1232.2 492M1067.5 441 L1260.8 492M1086.0 441 L1289.5 492M1104.5 441 L1318.2 492M1123.0 441 L1346.8 492M1141.5 441 L1375.5 492M410.2 456 H1021.3M410.2 468 H1021.3M410.2 479 H1021.3" stroke="#004852" stroke-width="0.7" fill="none" opacity="0.45"/><path d="M410.2 486.5 Q640 476 1021.3 473.8 V482.8 Q640 486 410.2 492 Z" fill="#004656" opacity="0.9"/><rect x="410.2" y="147.8" width="611.0999999999999" height="343.59999999999997" fill="url(#vig)"/><g transform="translate(520,220) scale(0.18625)" filter="url(#swb)"><path d="M385.0 215.0 C368.3 190.0 378.3 185.0 400.0 160.0 C421.7 135.0 396.7 150.7 450.0 140.0 C503.3 129.3 510.0 126.3 560.0 128.0 C610.0 129.7 582.7 124.3 600.0 145.0 C617.3 165.7 598.7 151.7 612.0 190.0 C625.3 228.3 610.7 213.3 640.0 260.0 C669.3 306.7 663.3 283.3 700.0 330.0 C736.7 376.7 728.3 360.0 750.0 400.0 C771.7 440.0 766.7 416.7 765.0 450.0 C763.3 483.3 765.0 473.3 745.0 500.0 C725.0 526.7 686.7 536.7 705.0 530.0 C723.3 523.3 735.0 516.7 800.0 480.0 C865.0 443.3 833.3 460.0 900.0 420.0 C966.7 380.0 980.0 390.0 1000.0 360.0 C1020.0 330.0 1060.0 290.0 960.0 330.0 C860.0 370.0 806.7 446.7 700.0 480.0 C593.3 513.3 673.3 476.7 640.0 430.0 C606.7 383.3 626.7 405.0 600.0 340.0 C573.3 275.0 610.0 270.0 560.0 235.0 C510.0 200.0 508.3 241.7 450.0 235.0 C391.7 228.3 401.7 240.0 385.0 215.0 Z" fill="#257c78"/><path d="M105.0 290.0 C116.7 261.7 93.3 280.7 135.0 255.0 C176.7 229.3 178.3 218.0 230.0 213.0 C281.7 208.0 246.7 227.7 290.0 240.0 C333.3 252.3 296.7 238.3 360.0 250.0 C423.3 261.7 413.3 252.3 480.0 275.0 C546.7 297.7 513.3 293.7 560.0 318.0 C606.7 342.3 573.3 354.7 620.0 348.0 C666.7 341.3 640.0 340.7 700.0 298.0 C760.0 255.3 733.3 272.0 800.0 220.0 C866.7 168.0 846.7 175.3 900.0 142.0 C953.3 108.7 920.0 128.0 960.0 120.0 C1000.0 112.0 981.7 104.7 1020.0 118.0 C1058.3 131.3 1050.0 122.7 1075.0 160.0 C1100.0 197.3 1096.7 183.3 1095.0 230.0 C1093.3 276.7 1101.7 259.3 1070.0 300.0 C1038.3 340.7 1056.7 315.3 1000.0 352.0 C943.3 388.7 966.7 377.3 900.0 410.0 C833.3 442.7 866.7 426.0 800.0 450.0 C733.3 474.0 753.3 471.3 700.0 482.0 C646.7 492.7 680.0 495.3 640.0 482.0 C600.0 468.7 626.7 472.0 580.0 442.0 C533.3 412.0 560.0 425.3 500.0 392.0 C440.0 358.7 456.7 367.3 400.0 342.0 C343.3 316.7 380.0 324.7 330.0 316.0 C280.0 307.3 303.3 304.7 250.0 316.0 C196.7 327.3 211.7 328.7 170.0 350.0 C128.3 371.3 148.3 383.3 125.0 380.0 C101.7 376.7 106.7 370.0 100.0 340.0 C93.3 310.0 93.3 318.3 105.0 290.0 Z" fill="#409a8c"/><path d="M330.0 316.0 C330.0 326.0 343.3 316.7 400.0 342.0 C456.7 367.3 440.0 358.7 500.0 392.0 C560.0 425.3 533.3 412.0 580.0 442.0 C626.7 472.0 600.0 468.7 640.0 482.0 C680.0 495.3 646.7 492.7 700.0 482.0 C753.3 471.3 733.3 474.0 800.0 450.0 C866.7 426.0 833.3 442.7 900.0 410.0 C966.7 377.3 943.3 388.7 1000.0 352.0 C1056.7 315.3 1070.0 310.0 1070.0 300.0 C1070.0 290.0 1056.7 298.0 1000.0 322.0 C943.3 346.0 966.7 341.0 900.0 372.0 C833.3 403.0 866.7 390.0 800.0 415.0 C733.3 440.0 750.0 438.7 700.0 447.0 C650.0 455.3 686.7 455.7 650.0 440.0 C613.3 424.3 640.0 429.3 590.0 400.0 C540.0 370.7 563.3 381.3 500.0 352.0 C436.7 322.7 456.7 324.0 400.0 312.0 C343.3 300.0 330.0 306.0 330.0 316.0 Z" fill="#1b6e6e" opacity="0.55"/><path d="M620.0 348.0 C636.7 324.0 640.0 340.7 700.0 298.0 C760.0 255.3 733.3 272.0 800.0 220.0 C866.7 168.0 846.7 175.3 900.0 142.0 C953.3 108.7 950.0 114.0 960.0 120.0 C970.0 126.0 973.3 120.0 930.0 160.0 C886.7 200.0 896.7 188.3 830.0 240.0 C763.3 291.7 790.0 271.7 730.0 315.0 C670.0 358.3 686.7 359.0 650.0 370.0 C613.3 381.0 603.3 372.0 620.0 348.0 Z" fill="#74c4ae" opacity="0.5"/><path d="M1050.0 128.0 C1068.3 141.3 1080.0 153.3 1130.0 200.0 C1180.0 246.7 1146.7 233.0 1200.0 268.0 C1253.3 303.0 1241.7 284.3 1290.0 305.0 C1338.3 325.7 1330.0 298.3 1345.0 330.0 C1360.0 361.7 1340.0 350.0 1335.0 400.0 C1330.0 450.0 1344.3 429.3 1330.0 480.0 C1315.7 530.7 1335.3 538.7 1292.0 552.0 C1248.7 565.3 1264.0 554.0 1200.0 520.0 C1136.0 486.0 1166.7 499.3 1100.0 450.0 C1033.3 400.7 1046.7 405.3 1000.0 372.0 C953.3 338.7 960.0 356.7 960.0 350.0 C960.0 343.3 963.3 368.7 1000.0 352.0 C1036.7 335.3 1038.3 340.7 1070.0 300.0 C1101.7 259.3 1093.3 276.7 1095.0 230.0 C1096.7 183.3 1090.0 194.0 1075.0 160.0 C1060.0 126.0 1031.7 114.7 1050.0 128.0 Z" fill="#1f6848"/><path d="M1100.0 450.0 C1166.7 499.3 1136.0 486.0 1200.0 520.0 C1264.0 554.0 1248.7 565.3 1292.0 552.0 C1335.3 538.7 1344.0 507.3 1330.0 480.0 C1316.0 452.7 1310.0 493.3 1250.0 470.0 C1190.0 446.7 1213.3 453.3 1150.0 410.0 C1086.7 366.7 1110.0 359.3 1060.0 340.0 C1010.0 320.7 1020.0 341.3 1000.0 352.0 C980.0 362.7 966.7 339.3 1000.0 372.0 C1033.3 404.7 1033.3 400.7 1100.0 450.0 Z" fill="#155240" opacity="0.7"/><path d="M1195.0 266.0 C1208.3 243.7 1221.7 280.0 1290.0 298.0 C1358.3 316.0 1330.0 302.7 1400.0 320.0 C1470.0 337.3 1446.7 327.3 1500.0 350.0 C1553.3 372.7 1535.0 358.0 1560.0 388.0 C1585.0 418.0 1575.0 402.7 1575.0 440.0 C1575.0 477.3 1585.0 466.7 1560.0 500.0 C1535.0 533.3 1546.7 518.3 1500.0 540.0 C1453.3 561.7 1473.3 547.7 1420.0 565.0 C1366.7 582.3 1380.0 585.0 1340.0 592.0 C1300.0 599.0 1316.0 599.3 1300.0 586.0 C1284.0 572.7 1282.0 587.3 1292.0 552.0 C1302.0 516.7 1315.7 530.7 1330.0 480.0 C1344.3 429.3 1330.0 450.0 1335.0 400.0 C1340.0 350.0 1360.0 361.7 1345.0 330.0 C1330.0 298.3 1321.7 293.3 1290.0 305.0 C1258.3 316.7 1281.7 378.0 1250.0 365.0 C1218.3 352.0 1181.7 288.3 1195.0 266.0 Z" fill="#338a82"/><path d="M1290.0 318.0 C1303.3 308.7 1326.7 309.7 1340.0 332.0 C1353.3 354.3 1343.3 375.7 1330.0 385.0 C1316.7 394.3 1313.3 382.3 1300.0 360.0 C1286.7 337.7 1276.7 327.3 1290.0 318.0 Z" fill="#8a9a3a" opacity="0.8"/><path d="M1480.0 370.0 C1515.0 365.0 1517.7 368.3 1545.0 395.0 C1572.3 421.7 1563.7 411.7 1562.0 450.0 C1560.3 488.3 1567.3 478.3 1540.0 510.0 C1512.7 541.7 1526.7 525.0 1480.0 545.0 C1433.3 565.0 1432.7 559.0 1400.0 570.0 C1367.3 581.0 1378.7 554.7 1382.0 578.0 C1385.3 601.3 1390.7 592.7 1410.0 640.0 C1429.3 687.3 1418.3 670.0 1440.0 720.0 C1461.7 770.0 1445.0 763.3 1475.0 790.0 C1505.0 816.7 1504.3 783.3 1530.0 800.0 C1555.7 816.7 1552.0 811.3 1552.0 840.0 C1552.0 868.7 1549.0 872.7 1530.0 886.0 C1511.0 899.3 1521.7 902.0 1495.0 880.0 C1468.3 858.0 1481.7 860.0 1450.0 820.0 C1418.3 780.0 1433.3 803.3 1400.0 760.0 C1366.7 716.7 1383.3 736.7 1350.0 690.0 C1316.7 643.3 1320.0 663.3 1300.0 620.0 C1280.0 576.7 1283.3 603.3 1290.0 560.0 C1296.7 516.7 1290.0 526.7 1320.0 490.0 C1350.0 453.3 1340.0 476.7 1380.0 450.0 C1420.0 423.3 1406.7 436.7 1440.0 410.0 C1473.3 383.3 1445.0 375.0 1480.0 370.0 Z" fill="#409a8c"/><path d="M1300.0 600.0 C1313.3 577.3 1333.3 585.3 1360.0 612.0 C1386.7 638.7 1371.3 630.7 1380.0 680.0 C1388.7 729.3 1382.0 722.7 1386.0 760.0 C1390.0 797.3 1404.0 778.0 1392.0 792.0 C1380.0 806.0 1370.7 812.7 1350.0 802.0 C1329.3 791.3 1340.0 800.7 1330.0 760.0 C1320.0 719.3 1330.0 733.3 1320.0 680.0 C1310.0 626.7 1286.7 622.7 1300.0 600.0 Z" fill="#338a82"/><path d="M1585.0 470.0 C1551.7 496.7 1575.0 496.7 1600.0 520.0 C1625.0 543.3 1626.7 526.0 1660.0 540.0 C1693.3 554.0 1671.7 560.3 1700.0 562.0 C1728.3 563.7 1723.3 559.0 1745.0 545.0 C1766.7 531.0 1750.0 541.7 1765.0 520.0 C1780.0 498.3 1811.7 506.7 1790.0 480.0 C1768.3 453.3 1768.3 443.3 1700.0 440.0 C1631.7 436.7 1618.3 443.3 1585.0 470.0 Z" fill="#2a7a76"/><path d="M1575 380 Q1590 300 1680 285 Q1780 290 1808 380 Q1815 450 1790 490 Q1760 520 1740 500 Q1730 470 1690 470 Q1620 470 1590 440 Z" fill="#17293c"/><circle cx="1670" cy="405" r="7" fill="#cfe8e8"/><circle cx="1735" cy="420" r="14" fill="#2a4a5c" opacity="0.8"/></g><g transform="translate(520,220) scale(0.18625)" fill="none" stroke-width="3.6" stroke-linejoin="round" opacity="0.72"><path d="M105.0 290.0 C116.7 261.7 93.3 280.7 135.0 255.0 C176.7 229.3 178.3 218.0 230.0 213.0 C281.7 208.0 246.7 227.7 290.0 240.0 C333.3 252.3 296.7 238.3 360.0 250.0 C423.3 261.7 413.3 252.3 480.0 275.0 C546.7 297.7 506.7 276.3 560.0 318.0 C613.3 359.7 596.7 359.3 640.0 400.0 C683.3 440.7 670.0 412.7 690.0 440.0 C710.0 467.3 716.7 468.0 700.0 482.0 C683.3 496.0 680.0 495.3 640.0 482.0 C600.0 468.7 626.7 472.0 580.0 442.0 C533.3 412.0 560.0 425.3 500.0 392.0 C440.0 358.7 456.7 367.3 400.0 342.0 C343.3 316.7 380.0 324.7 330.0 316.0 C280.0 307.3 303.3 304.7 250.0 316.0 C196.7 327.3 211.7 328.7 170.0 350.0 C128.3 371.3 148.3 383.3 125.0 380.0 C101.7 376.7 106.7 370.0 100.0 340.0 C93.3 310.0 93.3 318.3 105.0 290.0 Z" stroke="#d03838"/><path d="M265 270 Q290 240 340 245 Q372 275 362 305 Q320 320 285 305 Z" stroke="#d03838"/><path d="M570 400 Q640 340 700 298 L800 220 L900 142 L960 120 L1020 118 L1075 160 L1095 230 L1070 300 L1000 352 L900 410 L800 450 L700 482 L620 478 Q560 440 570 400 Z" stroke="#d03838"/><path d="M385.0 215.0 C368.3 190.0 378.3 185.0 400.0 160.0 C421.7 135.0 396.7 150.7 450.0 140.0 C503.3 129.3 510.0 126.3 560.0 128.0 C610.0 129.7 582.7 124.3 600.0 145.0 C617.3 165.7 625.3 163.3 612.0 190.0 C598.7 216.7 614.0 210.0 560.0 225.0 C506.0 240.0 508.3 238.3 450.0 235.0 C391.7 231.7 401.7 240.0 385.0 215.0 Z" stroke="#2a8a3a"/><path d="M545 185 Q570 165 610 190 L625 260 Q600 285 575 262 Z" stroke="#2a8a3a"/><path d="M560.0 235.0 C573.3 208.3 593.3 228.3 640.0 260.0 C686.7 291.7 663.3 283.3 700.0 330.0 C736.7 376.7 728.3 360.0 750.0 400.0 C771.7 440.0 766.7 416.7 765.0 450.0 C763.3 483.3 765.0 473.3 745.0 500.0 C725.0 526.7 733.3 528.3 705.0 530.0 C676.7 531.7 681.7 538.3 660.0 505.0 C638.3 471.7 660.0 485.0 640.0 430.0 C620.0 375.0 626.7 405.0 600.0 340.0 C573.3 275.0 546.7 261.7 560.0 235.0 Z" stroke="#2a8a3a"/><path d="M650 440 Q700 380 800 300 L880 180 L960 120 M705 530 L800 480 L900 420 L1000 360" stroke="#2a8a3a"/><path d="M890 200 Q900 120 1000 115 Q1080 130 1090 220 Q1070 320 1000 350 Q920 330 890 200 Z" stroke="#30c040"/><path d="M1050.0 128.0 C1076.7 152.0 1080.0 153.3 1130.0 200.0 C1180.0 246.7 1146.7 233.0 1200.0 268.0 C1253.3 303.0 1223.3 287.7 1290.0 305.0 C1356.7 322.3 1330.0 305.0 1400.0 320.0 C1470.0 335.0 1446.7 323.3 1500.0 350.0 C1553.3 376.7 1535.0 360.0 1560.0 400.0 C1585.0 440.0 1581.7 423.3 1575.0 470.0 C1568.3 516.7 1591.7 503.3 1540.0 540.0 C1488.3 576.7 1486.7 563.3 1420.0 580.0 C1353.3 596.7 1382.7 599.3 1340.0 590.0 C1297.3 580.7 1338.7 575.3 1292.0 552.0 C1245.3 528.7 1264.0 554.0 1200.0 520.0 C1136.0 486.0 1166.7 499.3 1100.0 450.0 C1033.3 400.7 1046.7 405.3 1000.0 372.0 C953.3 338.7 973.3 357.3 960.0 350.0" stroke="#30c040"/><path d="M1340 340 Q1400 320 1460 390 Q1470 450 1420 520 L1340 600 Q1300 580 1310 480 Q1380 440 1340 340 Z" stroke="#d03838"/><path d="M1310 490 Q1400 420 1480 370 L1545 395 L1562 450 L1540 510 L1480 545 L1400 570 L1340 600 Q1290 590 1310 490 Z" stroke="#d03838"/><path d="M1490 370 Q1540 360 1562 430 Q1565 500 1500 540 L1380 590 Q1300 610 1285 560 Q1290 530 1330 540" stroke="#50c8d8"/><path d="M1290.0 560.0 C1316.7 539.3 1340.0 551.3 1380.0 578.0 C1420.0 604.7 1390.0 592.7 1410.0 640.0 C1430.0 687.3 1418.3 666.7 1440.0 720.0 C1461.7 773.3 1471.7 765.0 1475.0 800.0 C1478.3 835.0 1475.0 838.3 1450.0 825.0 C1425.0 811.7 1433.3 805.0 1400.0 760.0 C1366.7 715.0 1383.3 730.0 1350.0 690.0 C1316.7 650.0 1320.0 683.3 1300.0 640.0 C1280.0 596.7 1263.3 580.7 1290.0 560.0 Z" stroke="#50c8d8"/><path d="M1300.0 600.0 C1313.3 577.3 1333.3 585.3 1360.0 612.0 C1386.7 638.7 1371.3 630.7 1380.0 680.0 C1388.7 729.3 1382.0 722.7 1386.0 760.0 C1390.0 797.3 1404.0 778.0 1392.0 792.0 C1380.0 806.0 1370.7 812.7 1350.0 802.0 C1329.3 791.3 1340.0 800.7 1330.0 760.0 C1320.0 719.3 1330.0 733.3 1320.0 680.0 C1310.0 626.7 1286.7 622.7 1300.0 600.0 Z" stroke="#d03838"/><path d="M1365 665 Q1400 640 1420 680 L1470 790 L1530 800 L1552 840 L1530 886 L1495 880 L1450 820 Z" stroke="#6030b0"/><path d="M1575 380 Q1590 300 1680 285 Q1780 290 1808 380 Q1815 450 1790 490 L1765 520 L1745 545 L1700 562 L1660 540 L1560 530" stroke="#d03838"/></g><circle cx="719" cy="155.6" r="2.4" fill="none" stroke="#c03838" stroke-width="0.7"/><g transform="translate(400,140) scale(0.36284)"><circle cx="50" cy="100" r="1.60" fill="#dff4f0" opacity="0.55"/><circle cx="85" cy="70" r="1.60" fill="#dff4f0" opacity="0.55"/><circle cx="135" cy="30" r="1.92" fill="#dff4f0" opacity="0.55"/><circle cx="195" cy="155" r="1.60" fill="#dff4f0" opacity="0.55"/><circle cx="270" cy="35" r="1.92" fill="#dff4f0" opacity="0.55"/><circle cx="330" cy="130" r="1.60" fill="#dff4f0" opacity="0.55"/><circle cx="110" cy="210" r="1.28" fill="#dff4f0" opacity="0.55"/><circle cx="230" cy="290" r="1.28" fill="#dff4f0" opacity="0.55"/><circle cx="290" cy="330" r="1.28" fill="#dff4f0" opacity="0.55"/><circle cx="450" cy="90" r="1.44" fill="#dff4f0" opacity="0.55"/><circle cx="520" cy="60" r="1.44" fill="#dff4f0" opacity="0.55"/><circle cx="570" cy="140" r="1.28" fill="#dff4f0" opacity="0.55"/><circle cx="640" cy="30" r="2.40" fill="#dff4f0" opacity="0.8"/><circle cx="650" cy="60" r="2.40" fill="#dff4f0" opacity="0.8"/><circle cx="620" cy="120" r="2.72" fill="#dff4f0" opacity="0.8"/><circle cx="660" cy="120" r="2.72" fill="#dff4f0" opacity="0.8"/><circle cx="690" cy="90" r="2.88" fill="#dff4f0" opacity="0.8"/><circle cx="715" cy="72" r="4.00" fill="#dff4f0" opacity="0.95"/><circle cx="755" cy="80" r="3.68" fill="#dff4f0" opacity="0.95"/><circle cx="710" cy="100" r="2.88" fill="#dff4f0" opacity="0.8"/><circle cx="740" cy="130" r="2.40" fill="#dff4f0" opacity="0.8"/><circle cx="655" cy="180" r="2.72" fill="#dff4f0" opacity="0.8"/><circle cx="700" cy="170" r="2.40" fill="#dff4f0" opacity="0.8"/><circle cx="760" cy="190" r="2.40" fill="#dff4f0" opacity="0.8"/><circle cx="740" cy="205" r="2.40" fill="#dff4f0" opacity="0.8"/><circle cx="680" cy="45" r="1.92" fill="#dff4f0" opacity="0.55"/><circle cx="760" cy="110" r="2.08" fill="#dff4f0" opacity="0.55"/><circle cx="730" cy="160" r="1.92" fill="#dff4f0" opacity="0.55"/><circle cx="770" cy="150" r="1.92" fill="#dff4f0" opacity="0.55"/><circle cx="845" cy="170" r="4.00" fill="#dff4f0" opacity="0.95"/><circle cx="875" cy="172" r="4.00" fill="#dff4f0" opacity="0.95"/><circle cx="870" cy="205" r="2.72" fill="#dff4f0" opacity="0.8"/><circle cx="800" cy="215" r="2.40" fill="#dff4f0" opacity="0.8"/><circle cx="830" cy="230" r="2.40" fill="#dff4f0" opacity="0.8"/><circle cx="900" cy="215" r="2.40" fill="#dff4f0" opacity="0.8"/><circle cx="930" cy="260" r="2.40" fill="#dff4f0" opacity="0.8"/><circle cx="975" cy="240" r="3.68" fill="#dff4f0" opacity="0.95"/><circle cx="990" cy="255" r="2.88" fill="#dff4f0" opacity="0.8"/><circle cx="1000" cy="280" r="2.40" fill="#dff4f0" opacity="0.8"/><circle cx="1040" cy="300" r="2.40" fill="#dff4f0" opacity="0.8"/><circle cx="1055" cy="295" r="2.40" fill="#dff4f0" opacity="0.8"/><circle cx="1105" cy="315" r="2.88" fill="#dff4f0" opacity="0.8"/><circle cx="1130" cy="330" r="2.88" fill="#dff4f0" opacity="0.8"/><circle cx="1080" cy="350" r="2.40" fill="#dff4f0" opacity="0.8"/><circle cx="1150" cy="350" r="2.40" fill="#dff4f0" opacity="0.8"/><circle cx="1140" cy="380" r="2.40" fill="#dff4f0" opacity="0.8"/><circle cx="1175" cy="395" r="2.40" fill="#dff4f0" opacity="0.8"/><circle cx="860" cy="190" r="1.92" fill="#dff4f0" opacity="0.55"/><circle cx="905" cy="240" r="1.92" fill="#dff4f0" opacity="0.55"/><circle cx="950" cy="275" r="1.92" fill="#dff4f0" opacity="0.55"/><circle cx="1020" cy="285" r="1.92" fill="#dff4f0" opacity="0.55"/><circle cx="1070" cy="320" r="1.92" fill="#dff4f0" opacity="0.55"/><circle cx="1120" cy="360" r="1.92" fill="#dff4f0" opacity="0.55"/><circle cx="1160" cy="370" r="1.92" fill="#dff4f0" opacity="0.55"/><circle cx="780" cy="225" r="1.76" fill="#dff4f0" opacity="0.55"/><circle cx="820" cy="200" r="1.76" fill="#dff4f0" opacity="0.55"/><circle cx="960" cy="225" r="1.76" fill="#dff4f0" opacity="0.55"/><circle cx="1010" cy="265" r="1.76" fill="#dff4f0" opacity="0.55"/><circle cx="690" cy="140" r="1.92" fill="#dff4f0" opacity="0.55"/><circle cx="640" cy="95" r="1.76" fill="#dff4f0" opacity="0.55"/><circle cx="1183" cy="430" r="2.88" fill="#dff4f0" opacity="0.8"/><circle cx="254.40408345226203" cy="197.9317158241488" r="1.60" fill="#dff4f0" opacity="0.55"/><circle cx="254.13867549078918" cy="286.5136907712776" r="1.20" fill="#dff4f0" opacity="0.55"/><circle cx="124.56026676961515" cy="183.57259171254165" r="1.20" fill="#dff4f0" opacity="0.55"/><circle cx="80.64987627117097" cy="121.02037878735764" r="1.04" fill="#dff4f0" opacity="0.55"/><circle cx="296.26635166017405" cy="297.1141476037468" r="1.04" fill="#dff4f0" opacity="0.55"/><circle cx="323.7867053327248" cy="148.84799293747045" r="1.60" fill="#dff4f0" opacity="0.55"/><circle cx="352.1524287639126" cy="214.66881137357123" r="1.20" fill="#dff4f0" opacity="0.55"/><circle cx="337.2172989865791" cy="279.5104876049934" r="1.04" fill="#dff4f0" opacity="0.55"/><circle cx="63.88228600689466" cy="87.06247883937874" r="1.20" fill="#dff4f0" opacity="0.55"/><circle cx="325.8147712021325" cy="263.432521962973" r="1.44" fill="#dff4f0" opacity="0.55"/><circle cx="248.65759157847853" cy="282.72813855555955" r="1.20" fill="#dff4f0" opacity="0.55"/><circle cx="345.5414783408009" cy="179.9319456620375" r="1.04" fill="#dff4f0" opacity="0.55"/><circle cx="256.8049925757855" cy="113.44886989916576" r="1.04" fill="#dff4f0" opacity="0.55"/><circle cx="378.2876664265055" cy="124.58316510466497" r="1.20" fill="#dff4f0" opacity="0.55"/><circle cx="283.74905105817595" cy="38.925573684774704" r="1.04" fill="#dff4f0" opacity="0.55"/><circle cx="229.19390538546816" cy="283.9750865643536" r="1.60" fill="#dff4f0" opacity="0.55"/><circle cx="67.41085596122261" cy="35.06714175785281" r="1.04" fill="#dff4f0" opacity="0.55"/><circle cx="138.5483140626024" cy="308.1126445016383" r="1.04" fill="#dff4f0" opacity="0.55"/><circle cx="262.9438288666282" cy="324.1076823522876" r="1.60" fill="#dff4f0" opacity="0.55"/><circle cx="238.5988294737309" cy="199.87252376106733" r="1.20" fill="#dff4f0" opacity="0.55"/><circle cx="412.57776645817563" cy="110.9326760550428" r="1.04" fill="#dff4f0" opacity="0.55"/><circle cx="185.93667005229014" cy="34.54485333876954" r="1.60" fill="#dff4f0" opacity="0.55"/><circle cx="402.64965074197306" cy="65.39750382586524" r="1.20" fill="#dff4f0" opacity="0.55"/><circle cx="377.9027741700967" cy="33.286504134297516" r="1.60" fill="#dff4f0" opacity="0.55"/><circle cx="421.55543324432745" cy="83.30343845950983" r="1.20" fill="#dff4f0" opacity="0.55"/><circle cx="252.00106558799544" cy="87.20532458710983" r="1.20" fill="#dff4f0" opacity="0.55"/><circle cx="238.32679042370492" cy="145.1255364339977" r="1.60" fill="#dff4f0" opacity="0.55"/><circle cx="239.06647436451416" cy="93.85970190272683" r="1.44" fill="#dff4f0" opacity="0.55"/><circle cx="454.20196202323274" cy="322.4571181909997" r="1.44" fill="#dff4f0" opacity="0.55"/><circle cx="518.9833035629956" cy="35.88921281109053" r="1.20" fill="#dff4f0" opacity="0.55"/><circle cx="226.22319897994635" cy="286.31307051036913" r="1.04" fill="#dff4f0" opacity="0.55"/><circle cx="55.42229290911051" cy="73.90758100131906" r="1.60" fill="#dff4f0" opacity="0.55"/><circle cx="160.26461556288592" cy="261.8069069318469" r="1.44" fill="#dff4f0" opacity="0.55"/><circle cx="437.69039674637844" cy="145.85098670437606" r="1.04" fill="#dff4f0" opacity="0.55"/><circle cx="78.70682888653616" cy="204.8204394502656" r="1.20" fill="#dff4f0" opacity="0.55"/><circle cx="42.521900621225384" cy="140.6025614702047" r="1.60" fill="#dff4f0" opacity="0.55"/><circle cx="96.70222975448007" cy="206.18138078687605" r="1.20" fill="#dff4f0" opacity="0.55"/><circle cx="455.2649488840778" cy="84.84831473360555" r="1.20" fill="#dff4f0" opacity="0.55"/><circle cx="185.7434746666663" cy="98.5150105159028" r="1.20" fill="#dff4f0" opacity="0.55"/><circle cx="386.81461786518486" cy="77.54271300008381" r="1.20" fill="#dff4f0" opacity="0.55"/><circle cx="368.1823917166582" cy="146.4629814375708" r="1.60" fill="#dff4f0" opacity="0.55"/><circle cx="327.7140941699701" cy="156.43716718420734" r="1.04" fill="#dff4f0" opacity="0.55"/><circle cx="87.88792311227164" cy="183.706747955117" r="1.44" fill="#dff4f0" opacity="0.55"/><circle cx="150.62748844785165" cy="241.37383816751307" r="1.44" fill="#dff4f0" opacity="0.55"/><circle cx="239.09542176502308" cy="301.447218052595" r="1.60" fill="#dff4f0" opacity="0.55"/><circle cx="177.3161430450975" cy="82.63001902975776" r="1.04" fill="#dff4f0" opacity="0.55"/><circle cx="96.30408458987041" cy="173.78997212506755" r="1.04" fill="#dff4f0" opacity="0.55"/><circle cx="170.9064053968647" cy="305.2080535477725" r="1.20" fill="#dff4f0" opacity="0.55"/><circle cx="398.2577792408971" cy="50.746297245906106" r="1.60" fill="#dff4f0" opacity="0.55"/><circle cx="251.1671771913473" cy="48.13667277976454" r="1.20" fill="#dff4f0" opacity="0.55"/><circle cx="171.75151343540028" cy="189.30108630397038" r="1.20" fill="#dff4f0" opacity="0.55"/><circle cx="79.71317992091477" cy="71.52249296964754" r="1.60" fill="#dff4f0" opacity="0.55"/><circle cx="510.53930934904514" cy="227.07961395287163" r="1.20" fill="#dff4f0" opacity="0.55"/><circle cx="321.0896811784361" cy="307.0762101215739" r="1.60" fill="#dff4f0" opacity="0.55"/><circle cx="476.45303941051617" cy="240.29100562290407" r="1.04" fill="#dff4f0" opacity="0.55"/><circle cx="45.310701431414174" cy="220.85535647310385" r="1.60" fill="#dff4f0" opacity="0.55"/><circle cx="67.62622884878155" cy="123.31891607993354" r="1.20" fill="#dff4f0" opacity="0.55"/><circle cx="519.6884487951513" cy="52.57887002771517" r="1.44" fill="#dff4f0" opacity="0.55"/><circle cx="392.44766501013555" cy="300.0587643748137" r="1.20" fill="#dff4f0" opacity="0.55"/><circle cx="419.7343379053397" cy="304.500773865612" r="1.44" fill="#dff4f0" opacity="0.55"/><circle cx="76.18950718861657" cy="171.98353417404576" r="1.04" fill="#dff4f0" opacity="0.55"/><circle cx="457.48411067417527" cy="155.14594259315578" r="1.04" fill="#dff4f0" opacity="0.55"/><circle cx="453.7842469100948" cy="201.84224951535282" r="1.60" fill="#dff4f0" opacity="0.55"/><circle cx="218.9005636244957" cy="33.73415263488941" r="1.04" fill="#dff4f0" opacity="0.55"/><circle cx="73.89798398289447" cy="221.82129379119053" r="1.44" fill="#dff4f0" opacity="0.55"/><circle cx="461.699037118848" cy="248.46212296966436" r="1.60" fill="#dff4f0" opacity="0.55"/><circle cx="488.11197036127373" cy="238.24694167290525" r="1.60" fill="#dff4f0" opacity="0.55"/><circle cx="248.65341025867895" cy="281.51100875717066" r="1.04" fill="#dff4f0" opacity="0.55"/><circle cx="286.5681132588679" cy="184.359389908142" r="1.44" fill="#dff4f0" opacity="0.55"/><circle cx="326.62335330657766" cy="174.28704460477232" r="1.20" fill="#dff4f0" opacity="0.55"/><circle cx="1458.2478520599602" cy="49.190438945089255" r="1.28" fill="#dff4f0" opacity="0.55"/><circle cx="1166.9289562259241" cy="112.67054165520621" r="0.96" fill="#dff4f0" opacity="0.55"/><circle cx="880.5923236534892" cy="54.34746418359343" r="1.28" fill="#dff4f0" opacity="0.55"/><circle cx="718.5229251386727" cy="58.83321604237793" r="1.12" fill="#dff4f0" opacity="0.55"/><circle cx="1166.7902045823291" cy="105.12852173084673" r="0.96" fill="#dff4f0" opacity="0.55"/><circle cx="840.4214064528198" cy="143.20284063072415" r="0.96" fill="#dff4f0" opacity="0.55"/><circle cx="1141.4896656742494" cy="166.6313341037782" r="0.96" fill="#dff4f0" opacity="0.55"/><circle cx="1382.6635397218577" cy="95.35117609298351" r="1.28" fill="#dff4f0" opacity="0.55"/><circle cx="1422.387332246878" cy="65.6817321714012" r="0.96" fill="#dff4f0" opacity="0.55"/><circle cx="1006.5377007702755" cy="172.3062549699917" r="0.96" fill="#dff4f0" opacity="0.55"/><circle cx="1216.9934062872546" cy="191.50002581373752" r="1.12" fill="#dff4f0" opacity="0.55"/><circle cx="1325.4204725157197" cy="49.180993859547414" r="1.12" fill="#dff4f0" opacity="0.55"/><circle cx="789.6595664860101" cy="66.39366411605734" r="1.12" fill="#dff4f0" opacity="0.55"/><circle cx="894.8971437902665" cy="118.39580367474862" r="1.28" fill="#dff4f0" opacity="0.55"/><circle cx="829.0642124559809" cy="172.65013011636842" r="1.28" fill="#dff4f0" opacity="0.55"/><circle cx="963.4277915503031" cy="42.69546688261367" r="0.96" fill="#dff4f0" opacity="0.55"/><circle cx="792.5612388206457" cy="133.28427312562633" r="1.28" fill="#dff4f0" opacity="0.55"/><circle cx="1214.4583104211756" cy="126.99893325728551" r="1.12" fill="#dff4f0" opacity="0.55"/><circle cx="1156.3006381368878" cy="125.88662611878947" r="1.28" fill="#dff4f0" opacity="0.55"/><circle cx="653.1635355732237" cy="107.3215103319745" r="0.96" fill="#dff4f0" opacity="0.55"/><circle cx="1273.8288759669294" cy="75.29012471705325" r="0.96" fill="#dff4f0" opacity="0.55"/><circle cx="1300.9103677124062" cy="197.2821447026778" r="0.96" fill="#dff4f0" opacity="0.55"/><circle cx="957.5511514160021" cy="137.093920193736" r="1.28" fill="#dff4f0" opacity="0.55"/><circle cx="1147.1175206544788" cy="92.676126904326" r="0.96" fill="#dff4f0" opacity="0.55"/><circle cx="1190.8028910613752" cy="63.88804182449301" r="1.12" fill="#dff4f0" opacity="0.55"/><circle cx="770.9213766091493" cy="151.41789564363904" r="1.12" fill="#dff4f0" opacity="0.55"/><circle cx="1044.1515535107815" cy="36.149751100292775" r="0.96" fill="#dff4f0" opacity="0.55"/><circle cx="786.9078377113653" cy="88.77572053482496" r="1.28" fill="#dff4f0" opacity="0.55"/><circle cx="1447.8824193031674" cy="115.07072384995297" r="0.96" fill="#dff4f0" opacity="0.55"/><circle cx="905.6458873434856" cy="164.62848044160336" r="0.96" fill="#dff4f0" opacity="0.55"/><circle cx="605.4654666950745" cy="188.54265072755763" r="1.28" fill="#dff4f0" opacity="0.55"/><circle cx="900.2127481051663" cy="106.5855002932336" r="0.96" fill="#dff4f0" opacity="0.55"/><circle cx="1133.037212115372" cy="184.69411098318932" r="1.12" fill="#dff4f0" opacity="0.55"/><circle cx="1059.012808184607" cy="140.95454260322853" r="1.28" fill="#dff4f0" opacity="0.55"/><circle cx="1300.8318960894715" cy="190.5238611871495" r="1.12" fill="#dff4f0" opacity="0.55"/><circle cx="839.9379494659313" cy="196.996754145861" r="0.96" fill="#dff4f0" opacity="0.55"/><circle cx="1227.4969381752253" cy="169.11874142074637" r="1.28" fill="#dff4f0" opacity="0.55"/><circle cx="1425.7458378621095" cy="50.99229049876644" r="0.96" fill="#dff4f0" opacity="0.55"/><circle cx="1401.9840620638288" cy="196.68383572200833" r="1.12" fill="#dff4f0" opacity="0.55"/><circle cx="1046.217468658191" cy="164.43381211523607" r="1.12" fill="#dff4f0" opacity="0.55"/><circle cx="786.2987061337735" cy="88.06742943720543" r="1.28" fill="#dff4f0" opacity="0.55"/><circle cx="626.5803932877767" cy="45.924737702730525" r="1.92" fill="#dff4f0" opacity="0.55"/><circle cx="850.5275281869697" cy="238.42923663552654" r="1.28" fill="#dff4f0" opacity="0.55"/><circle cx="818.3625973275467" cy="193.10798369423554" r="1.60" fill="#dff4f0" opacity="0.55"/><circle cx="928.498865438592" cy="240.74774725107414" r="2.24" fill="#dff4f0" opacity="0.55"/><circle cx="1148.9508590465134" cy="411.43548265095234" r="1.28" fill="#dff4f0" opacity="0.55"/><circle cx="1038.9379266008114" cy="310.5334586919116" r="1.60" fill="#dff4f0" opacity="0.55"/><circle cx="943.6844316095819" cy="228.37135153309592" r="1.92" fill="#dff4f0" opacity="0.55"/><circle cx="1036.8578585949165" cy="308.26081763560467" r="1.60" fill="#dff4f0" opacity="0.55"/><circle cx="758.1989035277927" cy="150.58369014375108" r="1.92" fill="#dff4f0" opacity="0.55"/><circle cx="913.9609351432335" cy="243.7775090669238" r="1.28" fill="#dff4f0" opacity="0.55"/><circle cx="916.425535973801" cy="294.0761496567453" r="2.24" fill="#dff4f0" opacity="0.55"/><circle cx="968.684325734201" cy="196.37264821356263" r="1.28" fill="#dff4f0" opacity="0.55"/><circle cx="967.8836068299875" cy="285.3297560637747" r="2.24" fill="#dff4f0" opacity="0.55"/><circle cx="1162.6739416938433" cy="353.6483879322709" r="1.60" fill="#dff4f0" opacity="0.55"/><circle cx="851.3975229611378" cy="199.63750812145562" r="2.24" fill="#dff4f0" opacity="0.55"/><circle cx="878.7650268887792" cy="216.50215675410377" r="1.28" fill="#dff4f0" opacity="0.55"/><circle cx="1104.803110502022" cy="388.98073337251833" r="1.28" fill="#dff4f0" opacity="0.55"/><circle cx="608.9475347038584" cy="8.533645568567287" r="1.92" fill="#dff4f0" opacity="0.55"/><circle cx="787.3472977967527" cy="163.50775747116666" r="1.28" fill="#dff4f0" opacity="0.55"/><circle cx="907.2200930144713" cy="246.55942523296943" r="1.92" fill="#dff4f0" opacity="0.55"/><circle cx="1040.0329685096428" cy="325.2795203664522" r="1.28" fill="#dff4f0" opacity="0.55"/><circle cx="822.6184511836609" cy="174.14896180461201" r="1.60" fill="#dff4f0" opacity="0.55"/><circle cx="954.1283401936847" cy="231.42469405349513" r="1.60" fill="#dff4f0" opacity="0.55"/><circle cx="948.1998850399307" cy="235.420658800438" r="1.60" fill="#dff4f0" opacity="0.55"/><circle cx="771.9581417650784" cy="149.37617973589784" r="1.60" fill="#dff4f0" opacity="0.55"/><circle cx="780.2382863157186" cy="188.6048568682096" r="1.60" fill="#dff4f0" opacity="0.55"/><circle cx="1028.3649290275341" cy="276.12765581516726" r="1.60" fill="#dff4f0" opacity="0.55"/><circle cx="657.1562655287804" cy="76.30044693524543" r="2.24" fill="#dff4f0" opacity="0.55"/><circle cx="1078.9611325857152" cy="357.3532111410209" r="1.60" fill="#dff4f0" opacity="0.55"/><circle cx="743.8810085298528" cy="137.1232451690052" r="1.28" fill="#dff4f0" opacity="0.55"/><circle cx="748.9375583181298" cy="147.35049004370478" r="1.92" fill="#dff4f0" opacity="0.55"/><circle cx="685.1410196107481" cy="103.62748419913498" r="1.60" fill="#dff4f0" opacity="0.55"/><circle cx="1067.9791106959044" cy="278.18272864865116" r="2.24" fill="#dff4f0" opacity="0.55"/><circle cx="673.6789665855845" cy="64.64644917751956" r="1.60" fill="#dff4f0" opacity="0.55"/><circle cx="1212.9890812866188" cy="350.1776611899073" r="1.28" fill="#dff4f0" opacity="0.55"/><circle cx="711.5790543289745" cy="49.042102708280595" r="1.28" fill="#dff4f0" opacity="0.55"/><circle cx="800.0496582483884" cy="155.76538524568713" r="2.24" fill="#dff4f0" opacity="0.55"/><circle cx="726.2315305897059" cy="125.59036555452747" r="1.28" fill="#dff4f0" opacity="0.55"/><circle cx="1064.1014338200373" cy="331.3475927148459" r="1.92" fill="#dff4f0" opacity="0.55"/><circle cx="819.5305028608554" cy="151.7126321135762" r="1.28" fill="#dff4f0" opacity="0.55"/><circle cx="763.904421495923" cy="184.0654225352048" r="2.24" fill="#dff4f0" opacity="0.55"/><circle cx="911.2083225784068" cy="247.00472271668184" r="1.92" fill="#dff4f0" opacity="0.55"/><circle cx="1048.9437661476247" cy="358.7044025756629" r="1.60" fill="#dff4f0" opacity="0.55"/><circle cx="1067.7066633471468" cy="360.8136586585674" r="1.92" fill="#dff4f0" opacity="0.55"/></g></g><rect x="410.2" y="147.8" width="611.0999999999999" height="343.59999999999997" fill="none" stroke="#6d8f94" stroke-width="0.9"/>
</svg>
<span style="left:979.6px;top:63.30px;font-size:8px;line-height:8px;color:#d6d6d6;transform:translateX(-50%);letter-spacing:0.076px;font-weight:bold;">CD_TR07_SC01_v001.nk - NukeX</span>
<span style="left:262px;top:78.05px;font-size:9.5px;line-height:9.5px;color:#d8d8d8;letter-spacing:-0.164px;">Viewer1</span>
<span style="left:246.8px;top:93.25px;font-size:9.5px;line-height:9.5px;color:#d2d2d2;letter-spacing:0.122px;">rgba</span>
<span style="left:284.8px;top:93.25px;font-size:9.5px;line-height:9.5px;color:#d2d2d2;letter-spacing:-0.009px;">rgba.alpha</span>
<span style="left:348.7px;top:93.25px;font-size:9.5px;line-height:9.5px;color:#d2d2d2;letter-spacing:-0.695px;">RGB</span>
<span style="left:386.7px;top:93.50px;font-size:9px;line-height:9px;color:#565656;letter-spacing:-0.502px;">IP</span>
<span style="left:401.9px;top:93.25px;font-size:9.5px;line-height:9.5px;color:#d2d2d2;letter-spacing:-0.158px;">Rec.709 (ACES)</span>
<span style="left:637.6px;top:93.45px;font-size:9.5px;line-height:9.5px;color:#f0a030;font-weight:bold;">A</span>
<span style="left:649px;top:93.45px;font-size:9.5px;line-height:9.5px;color:#d2d2d2;letter-spacing:-0.17px;">Roto3</span>
<span style="left:713.6px;top:93.45px;font-size:9.5px;line-height:9.5px;color:#9a9a9a;letter-spacing:-0.134px;">wipe</span>
<span style="left:761.5px;top:93.45px;font-size:9.5px;line-height:9.5px;color:#f0a030;font-weight:bold;">B</span>
<span style="left:772.4px;top:93.45px;font-size:9.5px;line-height:9.5px;color:#b4b4b4;letter-spacing:-0.17px;">Roto3</span>
<span style="left:1092.5px;top:93.45px;font-size:9.5px;line-height:9.5px;color:#dcdcdc;letter-spacing:-0.449px;">100%</span>
<span style="left:1121.5px;top:93.45px;font-size:9.5px;line-height:9.5px;color:#dcdcdc;letter-spacing:0.098px;">1:1</span>
<span style="left:256.9px;top:110.55px;font-size:9.5px;line-height:9.5px;color:#d2d2d2;letter-spacing:0.48px;">f/8</span>
<span style="left:285.8px;top:110.75px;font-size:9.5px;line-height:9.5px;color:#e6e6e6;">1</span>
<span style="left:310.5px;top:115.95px;font-size:5.5px;line-height:5.5px;color:#0c0c0c;transform:translateX(-50%);">0.00025</span>
<span style="left:321px;top:115.95px;font-size:5.5px;line-height:5.5px;color:#0c0c0c;transform:translateX(-50%);">0.04</span>
<span style="left:338.5px;top:115.95px;font-size:5.5px;line-height:5.5px;color:#0c0c0c;transform:translateX(-50%);">0.1</span>
<span style="left:355.3px;top:115.95px;font-size:5.5px;line-height:5.5px;color:#0c0c0c;transform:translateX(-50%);">0.2</span>
<span style="left:373.4px;top:115.95px;font-size:5.5px;line-height:5.5px;color:#0c0c0c;transform:translateX(-50%);">0.4</span>
<span style="left:413.5px;top:115.95px;font-size:5.5px;line-height:5.5px;color:#0c0c0c;transform:translateX(-50%);">1</span>
<span style="left:431.4px;top:115.95px;font-size:5.5px;line-height:5.5px;color:#0c0c0c;transform:translateX(-50%);">2</span>
<span style="left:448.5px;top:115.95px;font-size:5.5px;line-height:5.5px;color:#0c0c0c;transform:translateX(-50%);">4</span>
<span style="left:473.5px;top:115.95px;font-size:5.5px;line-height:5.5px;color:#0c0c0c;transform:translateX(-50%);">10</span>
<span style="left:490.6px;top:115.95px;font-size:5.5px;line-height:5.5px;color:#0c0c0c;transform:translateX(-50%);">20</span>
<span style="left:509px;top:115.95px;font-size:5.5px;line-height:5.5px;color:#0c0c0c;transform:translateX(-50%);">40</span>
<span style="left:516px;top:115.95px;font-size:5.5px;line-height:5.5px;color:#0c0c0c;transform:translateX(-50%);">64</span>
<span style="left:528px;top:110.80px;font-size:11px;line-height:11px;color:#f0f0f0;transform:translateX(-50%);font-weight:bold;">γ</span>
<span style="left:538.5px;top:110.75px;font-size:9.5px;line-height:9.5px;color:#e6e6e6;">1</span>
<span style="left:560.5px;top:115.95px;font-size:5.5px;line-height:5.5px;color:#0c0c0c;transform:translateX(-50%);">0</span>
<span style="left:600px;top:115.95px;font-size:5.5px;line-height:5.5px;color:#0c0c0c;transform:translateX(-50%);">0.1</span>
<span style="left:615px;top:115.95px;font-size:5.5px;line-height:5.5px;color:#0c0c0c;transform:translateX(-50%);">0.2</span>
<span style="left:637.4px;top:115.95px;font-size:5.5px;line-height:5.5px;color:#0c0c0c;transform:translateX(-50%);">0.4</span>
<span style="left:654px;top:115.95px;font-size:5.5px;line-height:5.5px;color:#0c0c0c;transform:translateX(-50%);">0.6</span>
<span style="left:667.5px;top:115.95px;font-size:5.5px;line-height:5.5px;color:#0c0c0c;transform:translateX(-50%);">0.8</span>
<span style="left:677.5px;top:115.95px;font-size:5.5px;line-height:5.5px;color:#0c0c0c;transform:translateX(-50%);">1</span>
<span style="left:726px;top:115.95px;font-size:5.5px;line-height:5.5px;color:#0c0c0c;transform:translateX(-50%);">2</span>
<span style="left:763.8px;top:115.95px;font-size:5.5px;line-height:5.5px;color:#0c0c0c;transform:translateX(-50%);">3</span>
<span style="left:792px;top:115.95px;font-size:5.5px;line-height:5.5px;color:#0c0c0c;transform:translateX(-50%);">4</span>
<span style="left:804px;top:110.05px;font-size:10.5px;line-height:10.5px;color:#f0f0f0;transform:translateX(-50%);">S</span>
<span style="left:813.8px;top:110.75px;font-size:9.5px;line-height:9.5px;color:#e6e6e6;">1</span>
<span style="left:837px;top:115.95px;font-size:5.5px;line-height:5.5px;color:#0c0c0c;transform:translateX(-50%);">0</span>
<span style="left:876.6px;top:115.95px;font-size:5.5px;line-height:5.5px;color:#0c0c0c;transform:translateX(-50%);">0.1</span>
<span style="left:891.5px;top:115.95px;font-size:5.5px;line-height:5.5px;color:#0c0c0c;transform:translateX(-50%);">0.2</span>
<span style="left:913.5px;top:115.95px;font-size:5.5px;line-height:5.5px;color:#0c0c0c;transform:translateX(-50%);">0.4</span>
<span style="left:930.3px;top:115.95px;font-size:5.5px;line-height:5.5px;color:#0c0c0c;transform:translateX(-50%);">0.6</span>
<span style="left:944px;top:115.95px;font-size:5.5px;line-height:5.5px;color:#0c0c0c;transform:translateX(-50%);">0.8</span>
<span style="left:953.5px;top:115.95px;font-size:5.5px;line-height:5.5px;color:#0c0c0c;transform:translateX(-50%);">1</span>
<span style="left:1002.5px;top:115.95px;font-size:5.5px;line-height:5.5px;color:#0c0c0c;transform:translateX(-50%);">2</span>
<span style="left:1040.5px;top:115.95px;font-size:5.5px;line-height:5.5px;color:#0c0c0c;transform:translateX(-50%);">3</span>
<span style="left:1069px;top:115.95px;font-size:5.5px;line-height:5.5px;color:#0c0c0c;transform:translateX(-50%);">4</span>
<span style="left:1097.3px;top:110.75px;font-size:9.5px;line-height:9.5px;color:#dcdcdc;letter-spacing:-0.322px;">2D</span>
<span style="left:420.6px;top:126.55px;font-size:9.5px;line-height:9.5px;color:#e0e0e0;letter-spacing:-0.125px;">on selection</span>
<span style="left:1022.5px;top:142.35px;font-size:8.5px;line-height:8.5px;color:#8e8e8e;letter-spacing:0.606px;">2048,1152</span>
<span style="left:1022.5px;top:482.55px;font-size:8.5px;line-height:8.5px;color:#c8c8c8;letter-spacing:0.719px;">(2048x1152)</span>
<span style="left:250.5px;top:501.85px;font-size:9.5px;line-height:9.5px;color:#ececec;letter-spacing:0.134px;">2048x1152&nbsp; bbox: 0 0 2048 1152 channels: rgba</span>
<span style="left:800px;top:501.85px;font-size:9.5px;line-height:9.5px;color:#ececec;letter-spacing:0.284px;">x=1676 y=-30</span>
<span style="left:262px;top:522.60px;font-size:10px;line-height:10px;color:#e0e0e0;transform:translateX(-50%);letter-spacing:-0.186px;">1075</span>
<span style="left:1139.6px;top:522.60px;font-size:10px;line-height:10px;color:#e0e0e0;transform:translateX(-50%);letter-spacing:-0.0px;">1100</span>
<span style="left:339.29999999999995px;top:531.00px;font-size:6px;line-height:6px;color:#c4c4c4;transform:translateX(-50%);">1080</span>
<span style="left:452.09999999999997px;top:531.00px;font-size:6px;line-height:6px;color:#c4c4c4;transform:translateX(-50%);">1090</span>
<span style="left:564.9px;top:531.00px;font-size:6px;line-height:6px;color:#c4c4c4;transform:translateX(-50%);">1100</span>
<span style="left:677.6999999999999px;top:531.00px;font-size:6px;line-height:6px;color:#c4c4c4;transform:translateX(-50%);">1110</span>
<span style="left:790.5px;top:531.00px;font-size:6px;line-height:6px;color:#c4c4c4;transform:translateX(-50%);">1120</span>
<span style="left:903.3px;top:531.00px;font-size:6px;line-height:6px;color:#c4c4c4;transform:translateX(-50%);">1130</span>
<span style="left:1016.0999999999999px;top:531.00px;font-size:6px;line-height:6px;color:#c4c4c4;transform:translateX(-50%);">1140</span>
<span style="left:1106.34px;top:531.00px;font-size:6px;line-height:6px;color:#c4c4c4;transform:translateX(-50%);">1148</span>
<span style="left:283.5px;top:531.00px;font-size:6px;line-height:6px;color:#c4c4c4;">1075</span>
<span style="left:284px;top:516.40px;font-size:6px;line-height:6px;color:#3b82f0;">1075</span>
<span style="left:567.6px;top:516.40px;font-size:6px;line-height:6px;color:#e2522a;">1100</span>
<span style="left:246.3px;top:541.25px;font-size:9.5px;line-height:9.5px;color:#d8d8d8;letter-spacing:-0.254px;">24*</span>
<span style="left:288.6px;top:541.25px;font-size:9.5px;line-height:9.5px;color:#d8d8d8;letter-spacing:-0.703px;">TF</span>
<span style="left:313.9px;top:541.25px;font-size:9.5px;line-height:9.5px;color:#d8d8d8;letter-spacing:-0.21px;">Global</span>
<span style="left:685px;top:541.20px;font-size:10px;line-height:10px;color:#f0a030;transform:translateX(-50%);letter-spacing:-0.186px;font-weight:bold;">1075</span>
<span style="left:820px;top:541.45px;font-size:9.5px;line-height:9.5px;color:#d8d8d8;transform:translateX(-50%);">10</span>
<span style="left:1139.6px;top:541.45px;font-size:9.5px;line-height:9.5px;color:#d8d8d8;transform:translateX(-50%);">26</span>
<span style="left:262.5px;top:558.95px;font-size:9.5px;line-height:9.5px;color:#f5a21a;letter-spacing:-0.275px;">Node Graph</span>
<span style="left:340.5px;top:559.55px;font-size:9.5px;line-height:9.5px;color:#d0d0d0;letter-spacing:-0.025px;">Curve Editor</span>
<span style="left:421.7px;top:559.55px;font-size:9.5px;line-height:9.5px;color:#d0d0d0;letter-spacing:-0.157px;">Dope Sheet</span>
<span style="left:655.6px;top:640.20px;font-size:12px;line-height:12px;color:#000;transform:translateX(-50%);-webkit-text-stroke:0.25px #000;">Read4</span>
<span style="left:655.6px;top:652.40px;font-size:12px;line-height:12px;color:#000;transform:translateX(-50%);letter-spacing:-0.118px;-webkit-text-stroke:0.25px #000;">VDP_C0040_0010.1075.exr</span>
<span style="left:655.6px;top:664.30px;font-size:12px;line-height:12px;color:#000;transform:translateX(-50%);-webkit-text-stroke:0.25px #000;">(default)</span>
<span style="left:655.8px;top:716.20px;font-size:12px;line-height:12px;color:#000;transform:translateX(-50%);-webkit-text-stroke:0.25px #000;">FrameRange2</span>
<span style="left:655.8px;top:788.60px;font-size:12px;line-height:12px;color:#000;transform:translateX(-50%);-webkit-text-stroke:0.25px #000;">ColorCorrect1</span>
<span style="left:478px;top:819.80px;font-size:12px;line-height:12px;color:#000;transform:translateX(-50%);-webkit-text-stroke:0.25px #000;">Grade2</span>
<span style="left:655.8px;top:866.60px;font-size:12px;line-height:12px;color:#000;transform:translateX(-50%);-webkit-text-stroke:0.25px #000;">Copy1</span>
<span style="left:655.8px;top:878.40px;font-size:12px;line-height:12px;color:#000;transform:translateX(-50%);-webkit-text-stroke:0.25px #000;">(alpha -&gt; alpha)</span>
<span style="left:289.4px;top:866.60px;font-size:12px;line-height:12px;color:#000;transform:translateX(-100%);">eza_track</span>
<span style="left:300px;top:857.85px;font-size:7.5px;line-height:7.5px;color:#fff;transform:translateX(-50%);font-weight:bold;">A</span>
<span style="left:923.2px;top:660.50px;font-size:12px;line-height:12px;color:#000;transform:translateX(-50%);-webkit-text-stroke:0.25px #000;">Roto3</span>
<span style="left:923.2px;top:671.90px;font-size:12px;line-height:12px;color:#000;transform:translateX(-50%);-webkit-text-stroke:0.25px #000;">(alpha)</span>
<span style="left:923.2px;top:725.90px;font-size:12px;line-height:12px;color:#000;transform:translateX(-50%);-webkit-text-stroke:0.25px #000;">Blur2</span>
<span style="left:923.2px;top:737.90px;font-size:12px;line-height:12px;color:#000;transform:translateX(-50%);-webkit-text-stroke:0.25px #000;">(all)</span>
<span style="left:1116px;top:742.90px;font-size:12px;line-height:12px;color:#000;transform:translateX(-50%);-webkit-text-stroke:0.25px #000;">Constant1</span>
<span style="left:857.5px;top:680.50px;font-size:13px;line-height:13px;color:#f5b868;transform:translateX(-50%);">bg</span>
<span style="left:551px;top:843.90px;font-size:13px;line-height:13px;color:#f5b868;transform:translateX(-50%);">mask</span>
<span style="left:655.6px;top:841.10px;font-size:13px;line-height:13px;color:#f5b868;transform:translateX(-50%);">B</span>
<span style="left:721.4px;top:875.50px;font-size:13px;line-height:13px;color:#f5b868;transform:translateX(-50%);">A</span>
<span style="left:454px;top:883.65px;font-size:11.5px;line-height:11.5px;color:#f5b868;transform:translateX(-50%);">1</span>
<span style="left:1191.3px;top:78.25px;font-size:9.5px;line-height:9.5px;color:#d8d8d8;letter-spacing:-0.13px;">Properties</span>
<span style="left:1262px;top:78.85px;font-size:9.5px;line-height:9.5px;color:#d0d0d0;letter-spacing:-0.163px;">Background Renders</span>
<span style="left:1377px;top:78.85px;font-size:9.5px;line-height:9.5px;color:#d0d0d0;letter-spacing:-0.243px;">Scene Graph</span>
<span style="left:1176.8px;top:94.65px;font-size:9.5px;line-height:9.5px;color:#e6e6e6;">3</span>
<span style="left:1237.8px;top:115.65px;font-size:9.5px;line-height:9.5px;color:#e0e0e0;letter-spacing:-0.27px;">Roto3</span>
<span style="left:1702.6px;top:115.85px;font-size:9.5px;line-height:9.5px;color:#0c0c0c;transform:translateX(-50%);font-weight:bold;">?</span>
<span style="left:1181.1px;top:132.95px;font-size:9.5px;line-height:9.5px;color:#e0e0e0;letter-spacing:-0.141px;">Roto</span>
<span style="left:1214.5px;top:133.45px;font-size:9.5px;line-height:9.5px;color:#e0e0e0;letter-spacing:-0.103px;">Transform</span>
<span style="left:1271.5px;top:133.45px;font-size:9.5px;line-height:9.5px;color:#e0e0e0;letter-spacing:0.032px;">Motion Blur</span>
<span style="left:1333.8px;top:133.45px;font-size:9.5px;line-height:9.5px;color:#e0e0e0;letter-spacing:-0.153px;">Shape</span>
<span style="left:1374.4px;top:133.45px;font-size:9.5px;line-height:9.5px;color:#e0e0e0;letter-spacing:-0.224px;">Clone</span>
<span style="left:1412px;top:133.45px;font-size:9.5px;line-height:9.5px;color:#e0e0e0;letter-spacing:0.117px;">Lifetime</span>
<span style="left:1460.4px;top:133.45px;font-size:9.5px;line-height:9.5px;color:#e0e0e0;letter-spacing:-0.159px;">Tracking</span>
<span style="left:1509.9px;top:133.45px;font-size:9.5px;line-height:9.5px;color:#e0e0e0;letter-spacing:-0.452px;">Node</span>
<span style="left:1237.6px;top:152.55px;font-size:9.5px;line-height:9.5px;color:#d4d4d4;transform:translateX(-100%);letter-spacing:0.348px;">output</span>
<span style="left:1244.2px;top:152.55px;font-size:9.5px;line-height:9.5px;color:#e0e0e0;">alpha</span>
<span style="left:1463.3px;top:152.55px;font-size:9.5px;line-height:9.5px;color:#e0e0e0;letter-spacing:-0.128px;">alpha</span>
<span style="left:1506.9px;top:152.55px;font-size:9.5px;line-height:9.5px;color:#e0e0e0;">none</span>
<span style="left:1237.6px;top:167.05px;font-size:9.5px;line-height:9.5px;color:#d4d4d4;transform:translateX(-100%);letter-spacing:0.279px;">premultiply</span>
<span style="left:1244.2px;top:167.05px;font-size:9.5px;line-height:9.5px;color:#e0e0e0;">none</span>
<span style="left:1486.2px;top:167.05px;font-size:9.5px;line-height:9.5px;color:#e0e0e0;">none</span>
<span style="left:1237.6px;top:181.85px;font-size:9.5px;line-height:9.5px;color:#d4d4d4;transform:translateX(-100%);letter-spacing:0.198px;">clip to</span>
<span style="left:1244.2px;top:181.85px;font-size:9.5px;line-height:9.5px;color:#e0e0e0;">no clip</span>
<span style="left:1365.7px;top:181.85px;font-size:9.5px;line-height:9.5px;color:#e0e0e0;letter-spacing:-0.194px;">replace</span>
<span style="left:1237.6px;top:207.95px;font-size:9.5px;line-height:9.5px;color:#929292;transform:translateX(-100%);letter-spacing:0.043px;">opacity</span>
<span style="left:1244.4px;top:208.15px;font-size:9.5px;line-height:9.5px;color:#a0a0a0;">1</span>
<span style="left:1288.9px;top:212.95px;font-size:5.5px;line-height:5.5px;color:#101010;transform:translateX(-50%);">0</span>
<span style="left:1335.3px;top:212.95px;font-size:5.5px;line-height:5.5px;color:#101010;transform:translateX(-50%);">0.01</span>
<span style="left:1352.6px;top:212.95px;font-size:5.5px;line-height:5.5px;color:#101010;transform:translateX(-50%);">0.02</span>
<span style="left:1377.3px;top:212.95px;font-size:5.5px;line-height:5.5px;color:#101010;transform:translateX(-50%);">0.04</span>
<span style="left:1396.7px;top:212.95px;font-size:5.5px;line-height:5.5px;color:#101010;transform:translateX(-50%);">0.06</span>
<span style="left:1412.9px;top:212.95px;font-size:5.5px;line-height:5.5px;color:#101010;transform:translateX(-50%);">0.08</span>
<span style="left:1425.6px;top:212.95px;font-size:5.5px;line-height:5.5px;color:#101010;transform:translateX(-50%);">0.1</span>
<span style="left:1480.7px;top:212.95px;font-size:5.5px;line-height:5.5px;color:#101010;transform:translateX(-50%);">0.2</span>
<span style="left:1523.6px;top:212.95px;font-size:5.5px;line-height:5.5px;color:#101010;transform:translateX(-50%);">0.3</span>
<span style="left:1559.8px;top:212.95px;font-size:5.5px;line-height:5.5px;color:#101010;transform:translateX(-50%);">0.4</span>
<span style="left:1591px;top:212.95px;font-size:5.5px;line-height:5.5px;color:#101010;transform:translateX(-50%);">0.5</span>
<span style="left:1619.7px;top:212.95px;font-size:5.5px;line-height:5.5px;color:#101010;transform:translateX(-50%);">0.6</span>
<span style="left:1646.1px;top:212.95px;font-size:5.5px;line-height:5.5px;color:#101010;transform:translateX(-50%);">0.7</span>
<span style="left:1670.7px;top:212.95px;font-size:5.5px;line-height:5.5px;color:#101010;transform:translateX(-50%);">0.8</span>
<span style="left:1693.9px;top:212.95px;font-size:5.5px;line-height:5.5px;color:#101010;transform:translateX(-50%);">0.9</span>
<span style="left:1711.3px;top:212.95px;font-size:5.5px;line-height:5.5px;color:#101010;transform:translateX(-50%);">1</span>
<span style="left:1237.6px;top:222.45px;font-size:9.5px;line-height:9.5px;color:#929292;transform:translateX(-100%);letter-spacing:0.061px;">feather</span>
<span style="left:1244.4px;top:222.65px;font-size:9.5px;line-height:9.5px;color:#a0a0a0;">0</span>
<span style="left:1291.6px;top:227.45px;font-size:5.5px;line-height:5.5px;color:#101010;transform:translateX(-50%);">-100</span>
<span style="left:1297.6px;top:227.45px;font-size:5.5px;line-height:5.5px;color:#101010;transform:translateX(-50%);">90</span>
<span style="left:1313px;top:227.45px;font-size:5.5px;line-height:5.5px;color:#101010;transform:translateX(-50%);">-80</span>
<span style="left:1325.1px;top:227.45px;font-size:5.5px;line-height:5.5px;color:#101010;transform:translateX(-50%);">-70</span>
<span style="left:1337.3px;top:227.45px;font-size:5.5px;line-height:5.5px;color:#101010;transform:translateX(-50%);">-60</span>
<span style="left:1349.7px;top:227.45px;font-size:5.5px;line-height:5.5px;color:#101010;transform:translateX(-50%);">-50</span>
<span style="left:1362.8px;top:227.45px;font-size:5.5px;line-height:5.5px;color:#101010;transform:translateX(-50%);">-40</span>
<span style="left:1379.6px;top:227.45px;font-size:5.5px;line-height:5.5px;color:#101010;transform:translateX(-50%);">-30</span>
<span style="left:1399px;top:227.45px;font-size:5.5px;line-height:5.5px;color:#101010;transform:translateX(-50%);">-20</span>
<span style="left:1423.6px;top:227.45px;font-size:5.5px;line-height:5.5px;color:#101010;transform:translateX(-50%);">-10</span>
<span style="left:1439.5px;top:227.45px;font-size:5.5px;line-height:5.5px;color:#101010;transform:translateX(-50%);">-5</span>
<span style="left:1463.3px;top:227.45px;font-size:5.5px;line-height:5.5px;color:#101010;transform:translateX(-50%);">-1</span>
<span style="left:1481.5px;top:227.45px;font-size:5.5px;line-height:5.5px;color:#101010;transform:translateX(-50%);">0</span>
<span style="left:1501px;top:227.45px;font-size:5.5px;line-height:5.5px;color:#101010;transform:translateX(-50%);">1</span>
<span style="left:1525px;top:227.45px;font-size:5.5px;line-height:5.5px;color:#101010;transform:translateX(-50%);">5</span>
<span style="left:1544.4px;top:227.45px;font-size:5.5px;line-height:5.5px;color:#101010;transform:translateX(-50%);">10</span>
<span style="left:1569.3px;top:227.45px;font-size:5.5px;line-height:5.5px;color:#101010;transform:translateX(-50%);">20</span>
<span style="left:1589.3px;top:227.45px;font-size:5.5px;line-height:5.5px;color:#101010;transform:translateX(-50%);">30</span>
<span style="left:1605.5px;top:227.45px;font-size:5.5px;line-height:5.5px;color:#101010;transform:translateX(-50%);">40</span>
<span style="left:1620.6px;top:227.45px;font-size:5.5px;line-height:5.5px;color:#101010;transform:translateX(-50%);">50</span>
<span style="left:1633px;top:227.45px;font-size:5.5px;line-height:5.5px;color:#101010;transform:translateX(-50%);">60</span>
<span style="left:1645.8px;top:227.45px;font-size:5.5px;line-height:5.5px;color:#101010;transform:translateX(-50%);">70</span>
<span style="left:1656.2px;top:227.45px;font-size:5.5px;line-height:5.5px;color:#101010;transform:translateX(-50%);">80</span>
<span style="left:1666px;top:227.45px;font-size:5.5px;line-height:5.5px;color:#101010;transform:translateX(-50%);">90</span>
<span style="left:1671.4px;top:227.45px;font-size:5.5px;line-height:5.5px;color:#101010;transform:translateX(-50%);">100</span>
<span style="left:1681.4px;top:223.15px;font-size:8.5px;line-height:8.5px;color:#8a8a8a;transform:translateX(-50%);">2</span>
<span style="left:1711.6px;top:222.45px;font-size:9.5px;line-height:9.5px;color:#8a8a8a;">o</span>
<span style="left:1237.6px;top:237.75px;font-size:9.5px;line-height:9.5px;color:#929292;transform:translateX(-100%);letter-spacing:0.184px;">feather falloff</span>
<span style="left:1244.4px;top:237.95px;font-size:9.5px;line-height:9.5px;color:#a0a0a0;">1</span>
<span style="left:1290.9px;top:242.75px;font-size:5.5px;line-height:5.5px;color:#101010;transform:translateX(-50%);">0.2</span>
<span style="left:1337.6px;top:242.75px;font-size:5.5px;line-height:5.5px;color:#101010;transform:translateX(-50%);">0.3</span>
<span style="left:1370.6px;top:242.75px;font-size:5.5px;line-height:5.5px;color:#101010;transform:translateX(-50%);">0.4</span>
<span style="left:1396.1px;top:242.75px;font-size:5.5px;line-height:5.5px;color:#101010;transform:translateX(-50%);">0.5</span>
<span style="left:1417px;top:242.75px;font-size:5.5px;line-height:5.5px;color:#101010;transform:translateX(-50%);">0.6</span>
<span style="left:1434.6px;top:242.75px;font-size:5.5px;line-height:5.5px;color:#101010;transform:translateX(-50%);">0.7</span>
<span style="left:1450.6px;top:242.75px;font-size:5.5px;line-height:5.5px;color:#101010;transform:translateX(-50%);">0.8</span>
<span style="left:1463.6px;top:242.75px;font-size:5.5px;line-height:5.5px;color:#101010;transform:translateX(-50%);">0.9</span>
<span style="left:1472.9px;top:242.75px;font-size:5.5px;line-height:5.5px;color:#101010;transform:translateX(-50%);">1</span>
<span style="left:1553.1px;top:242.75px;font-size:5.5px;line-height:5.5px;color:#101010;transform:translateX(-50%);">2</span>
<span style="left:1599.7px;top:242.75px;font-size:5.5px;line-height:5.5px;color:#101010;transform:translateX(-50%);">3</span>
<span style="left:1632.8px;top:242.75px;font-size:5.5px;line-height:5.5px;color:#101010;transform:translateX(-50%);">4</span>
<span style="left:1656.2px;top:242.75px;font-size:5.5px;line-height:5.5px;color:#101010;transform:translateX(-50%);">5</span>
<span style="left:1675px;top:237.75px;font-size:9.5px;line-height:9.5px;color:#7c7c7c;letter-spacing:-0.039px;">linear</span>
<span style="left:1237.6px;top:253.15px;font-size:9.5px;line-height:9.5px;color:#929292;transform:translateX(-100%);letter-spacing:0.036px;">spline key</span>
<span style="left:1244.4px;top:253.35px;font-size:9.5px;line-height:9.5px;color:#a0a0a0;">0</span>
<span style="left:1266.6px;top:253.15px;font-size:9.5px;line-height:9.5px;color:#929292;letter-spacing:-0.261px;">of</span>
<span style="left:1278.9px;top:253.35px;font-size:9.5px;line-height:9.5px;color:#a0a0a0;">0</span>
<span style="left:1653.3px;top:253.15px;font-size:9.5px;line-height:9.5px;color:#929292;letter-spacing:-0.085px;">visible</span>
<span style="left:1695.3px;top:253.15px;font-size:9.5px;line-height:9.5px;color:#929292;letter-spacing:-0.243px;">locked</span>
<span style="left:1188.5px;top:300.15px;font-size:9.5px;line-height:9.5px;color:#e0e0e0;letter-spacing:-0.46px;">Name</span>
<span style="left:1657.2px;top:300.15px;font-size:9.5px;line-height:9.5px;color:#e0e0e0;letter-spacing:0.221px;">Life</span>
<span style="left:1689.6px;top:300.15px;font-size:9.5px;line-height:9.5px;color:#e0e0e0;letter-spacing:-0.183px;">Source</span>
<span style="left:1212.7px;top:313.75px;font-size:9.5px;line-height:9.5px;color:#e4e4e4;letter-spacing:-0.1px;">Root</span>
<span style="left:1224.6px;top:325.07px;font-size:9.5px;line-height:9.5px;color:#e4e4e4;letter-spacing:-0.092px;">Bezier1</span>
<span style="left:1657.2px;top:325.07px;font-size:9.5px;line-height:9.5px;color:#e4e4e4;letter-spacing:-0.035px;">all</span>
<span style="left:1689.6px;top:325.07px;font-size:9.5px;line-height:9.5px;color:#e4e4e4;letter-spacing:-0.078px;">color</span>
<span style="left:1224.6px;top:336.39px;font-size:9.5px;line-height:9.5px;color:#e4e4e4;letter-spacing:-0.098px;">cabeza_extra_shape</span>
<span style="left:1657.2px;top:336.39px;font-size:9.5px;line-height:9.5px;color:#e4e4e4;letter-spacing:0.181px;">1079-</span>
<span style="left:1689.6px;top:336.39px;font-size:9.5px;line-height:9.5px;color:#e4e4e4;letter-spacing:-0.078px;">color</span>
<span style="left:1224.6px;top:347.70px;font-size:9.5px;line-height:9.5px;color:#e4e4e4;letter-spacing:-0.109px;">Cabeza</span>
<span style="left:1657.2px;top:347.70px;font-size:9.5px;line-height:9.5px;color:#e4e4e4;letter-spacing:-0.035px;">all</span>
<span style="left:1689.6px;top:347.70px;font-size:9.5px;line-height:9.5px;color:#e4e4e4;letter-spacing:-0.078px;">color</span>
<span style="left:1224.6px;top:359.02px;font-size:9.5px;line-height:9.5px;color:#e4e4e4;letter-spacing:-0.099px;">brazo_dcho</span>
<span style="left:1236.6px;top:370.34px;font-size:9.5px;line-height:9.5px;color:#e4e4e4;letter-spacing:-0.095px;">BSpline8</span>
<span style="left:1657.2px;top:370.34px;font-size:9.5px;line-height:9.5px;color:#e4e4e4;letter-spacing:-0.035px;">all</span>
<span style="left:1689.6px;top:370.34px;font-size:9.5px;line-height:9.5px;color:#e4e4e4;letter-spacing:-0.078px;">color</span>
<span style="left:1236.6px;top:381.66px;font-size:9.5px;line-height:9.5px;color:#e4e4e4;letter-spacing:-0.095px;">BSpline7</span>
<span style="left:1657.2px;top:381.66px;font-size:9.5px;line-height:9.5px;color:#e4e4e4;letter-spacing:-0.035px;">all</span>
<span style="left:1689.6px;top:381.66px;font-size:9.5px;line-height:9.5px;color:#e4e4e4;letter-spacing:-0.078px;">color</span>
<span style="left:1224.6px;top:392.98px;font-size:9.5px;line-height:9.5px;color:#e4e4e4;letter-spacing:-0.11px;">mano_dcha</span>
<span style="left:1236.6px;top:404.29px;font-size:9.5px;line-height:9.5px;color:#e4e4e4;letter-spacing:-0.095px;">BSpline6</span>
<span style="left:1657.2px;top:404.29px;font-size:9.5px;line-height:9.5px;color:#e4e4e4;letter-spacing:-0.035px;">all</span>
<span style="left:1689.6px;top:404.29px;font-size:9.5px;line-height:9.5px;color:#e4e4e4;letter-spacing:-0.078px;">color</span>
<span style="left:1236.6px;top:415.61px;font-size:9.5px;line-height:9.5px;color:#e4e4e4;letter-spacing:-0.095px;">BSpline5</span>
<span style="left:1657.2px;top:415.61px;font-size:9.5px;line-height:9.5px;color:#e4e4e4;letter-spacing:-0.035px;">all</span>
<span style="left:1689.6px;top:415.61px;font-size:9.5px;line-height:9.5px;color:#e4e4e4;letter-spacing:-0.078px;">color</span>
<span style="left:1236.6px;top:426.93px;font-size:9.5px;line-height:9.5px;color:#e4e4e4;letter-spacing:-0.095px;">BSpline4</span>
<span style="left:1657.2px;top:426.93px;font-size:9.5px;line-height:9.5px;color:#e4e4e4;letter-spacing:-0.035px;">all</span>
<span style="left:1689.6px;top:426.93px;font-size:9.5px;line-height:9.5px;color:#e4e4e4;letter-spacing:-0.078px;">color</span>
<span style="left:1236.6px;top:438.25px;font-size:9.5px;line-height:9.5px;color:#e4e4e4;letter-spacing:-0.095px;">BSpline3</span>
<span style="left:1657.2px;top:438.25px;font-size:9.5px;line-height:9.5px;color:#e4e4e4;letter-spacing:-0.035px;">all</span>
<span style="left:1689.6px;top:438.25px;font-size:9.5px;line-height:9.5px;color:#e4e4e4;letter-spacing:-0.078px;">color</span>
<span style="left:1236.6px;top:449.57px;font-size:9.5px;line-height:9.5px;color:#e4e4e4;letter-spacing:-0.095px;">BSpline2</span>
<span style="left:1657.2px;top:449.57px;font-size:9.5px;line-height:9.5px;color:#e4e4e4;letter-spacing:-0.035px;">all</span>
<span style="left:1689.6px;top:449.57px;font-size:9.5px;line-height:9.5px;color:#e4e4e4;letter-spacing:-0.078px;">color</span>
<span style="left:1236.6px;top:460.88px;font-size:9.5px;line-height:9.5px;color:#e4e4e4;letter-spacing:-0.095px;">BSpline1</span>
<span style="left:1657.2px;top:460.88px;font-size:9.5px;line-height:9.5px;color:#e4e4e4;letter-spacing:-0.035px;">all</span>
<span style="left:1689.6px;top:460.88px;font-size:9.5px;line-height:9.5px;color:#e4e4e4;letter-spacing:-0.078px;">color</span>
<span style="left:1224.6px;top:472.20px;font-size:9.5px;line-height:9.5px;color:#e4e4e4;letter-spacing:-0.089px;">Torso_layer</span>
<span style="left:1236.6px;top:483.52px;font-size:9.5px;line-height:9.5px;color:#e4e4e4;letter-spacing:-0.084px;">torso</span>
<span style="left:1657.2px;top:483.52px;font-size:9.5px;line-height:9.5px;color:#e4e4e4;letter-spacing:-0.035px;">all</span>
<span style="left:1689.6px;top:483.52px;font-size:9.5px;line-height:9.5px;color:#e4e4e4;letter-spacing:-0.078px;">color</span>
<span style="left:1224.6px;top:494.84px;font-size:9.5px;line-height:9.5px;color:#e4e4e4;letter-spacing:-0.095px;">pierna_dcha</span>
<span style="left:1236.6px;top:506.16px;font-size:9.5px;line-height:9.5px;color:#e4e4e4;letter-spacing:-0.095px;">BSpline11</span>
<span style="left:1657.2px;top:506.16px;font-size:9.5px;line-height:9.5px;color:#e4e4e4;letter-spacing:-0.035px;">all</span>
<span style="left:1689.6px;top:506.16px;font-size:9.5px;line-height:9.5px;color:#e4e4e4;letter-spacing:-0.078px;">color</span>
<span style="left:1236.6px;top:517.47px;font-size:9.5px;line-height:9.5px;color:#e4e4e4;letter-spacing:-0.096px;">BSpline10</span>
<span style="left:1657.2px;top:517.47px;font-size:9.5px;line-height:9.5px;color:#e4e4e4;letter-spacing:-0.035px;">all</span>
<span style="left:1689.6px;top:517.47px;font-size:9.5px;line-height:9.5px;color:#e4e4e4;letter-spacing:-0.078px;">color</span>
<span style="left:1236.6px;top:528.79px;font-size:9.5px;line-height:9.5px;color:#e4e4e4;letter-spacing:-0.095px;">BSpline9</span>
<span style="left:1657.2px;top:528.79px;font-size:9.5px;line-height:9.5px;color:#e4e4e4;letter-spacing:-0.035px;">all</span>
<span style="left:1689.6px;top:528.79px;font-size:9.5px;line-height:9.5px;color:#e4e4e4;letter-spacing:-0.078px;">color</span>
<span style="left:1224.6px;top:540.11px;font-size:9.5px;line-height:9.5px;color:#e4e4e4;letter-spacing:-0.103px;">mano_izq</span>
<span style="left:1236.6px;top:551.43px;font-size:9.5px;line-height:9.5px;color:#e4e4e4;letter-spacing:-0.096px;">BSpline22</span>
<span style="left:1657.2px;top:551.43px;font-size:9.5px;line-height:9.5px;color:#e4e4e4;letter-spacing:0.181px;">1082-</span>
<span style="left:1689.6px;top:551.43px;font-size:9.5px;line-height:9.5px;color:#e4e4e4;letter-spacing:-0.078px;">color</span>
<span style="left:1236.6px;top:562.75px;font-size:9.5px;line-height:9.5px;color:#e4e4e4;letter-spacing:-0.096px;">BSpline21</span>
<span style="left:1657.2px;top:562.75px;font-size:9.5px;line-height:9.5px;color:#e4e4e4;letter-spacing:0.181px;">1082-</span>
<span style="left:1689.6px;top:562.75px;font-size:9.5px;line-height:9.5px;color:#e4e4e4;letter-spacing:-0.078px;">color</span>
<span style="left:1236.6px;top:574.06px;font-size:9.5px;line-height:9.5px;color:#e4e4e4;letter-spacing:-0.096px;">BSpline20</span>
<span style="left:1657.2px;top:574.06px;font-size:9.5px;line-height:9.5px;color:#e4e4e4;letter-spacing:0.181px;">1082-</span>
<span style="left:1689.6px;top:574.06px;font-size:9.5px;line-height:9.5px;color:#e4e4e4;letter-spacing:-0.078px;">color</span>
<span style="left:1236.6px;top:585.38px;font-size:9.5px;line-height:9.5px;color:#e4e4e4;letter-spacing:-0.096px;">BSpline19</span>
<span style="left:1657.2px;top:585.38px;font-size:9.5px;line-height:9.5px;color:#e4e4e4;letter-spacing:0.181px;">1082-</span>
<span style="left:1689.6px;top:585.38px;font-size:9.5px;line-height:9.5px;color:#e4e4e4;letter-spacing:-0.078px;">color</span>
<span style="left:1236.6px;top:596.70px;font-size:9.5px;line-height:9.5px;color:#e4e4e4;letter-spacing:-0.096px;">BSpline18</span>
<span style="left:1657.2px;top:596.70px;font-size:9.5px;line-height:9.5px;color:#e4e4e4;letter-spacing:0.181px;">1082-</span>
<span style="left:1689.6px;top:596.70px;font-size:9.5px;line-height:9.5px;color:#e4e4e4;letter-spacing:-0.078px;">color</span>
<span style="left:1236.6px;top:608.02px;font-size:9.5px;line-height:9.5px;color:#e4e4e4;letter-spacing:-0.096px;">BSpline17</span>
<span style="left:1657.2px;top:608.02px;font-size:9.5px;line-height:9.5px;color:#e4e4e4;letter-spacing:-0.035px;">all</span>
<span style="left:1689.6px;top:608.02px;font-size:9.5px;line-height:9.5px;color:#e4e4e4;letter-spacing:-0.078px;">color</span>
<span style="left:1224.6px;top:619.34px;font-size:9.5px;line-height:9.5px;color:#e4e4e4;letter-spacing:-0.092px;">brazo_izq</span>
<span style="left:1236.6px;top:630.65px;font-size:9.5px;line-height:9.5px;color:#e4e4e4;letter-spacing:-0.096px;">BSpline16</span>
<span style="left:1657.2px;top:630.65px;font-size:9.5px;line-height:9.5px;color:#e4e4e4;letter-spacing:-0.035px;">all</span>
<span style="left:1689.6px;top:630.65px;font-size:9.5px;line-height:9.5px;color:#e4e4e4;letter-spacing:-0.078px;">color</span>
<span style="left:1236.6px;top:641.97px;font-size:9.5px;line-height:9.5px;color:#e4e4e4;letter-spacing:-0.096px;">BSpline15</span>
<span style="left:1657.2px;top:641.97px;font-size:9.5px;line-height:9.5px;color:#e4e4e4;letter-spacing:-0.035px;">all</span>
<span style="left:1689.6px;top:641.97px;font-size:9.5px;line-height:9.5px;color:#e4e4e4;letter-spacing:-0.078px;">color</span>
<span style="left:1224.6px;top:653.29px;font-size:9.5px;line-height:9.5px;color:#e4e4e4;letter-spacing:-0.088px;">pierna_izq</span>
<span style="left:1236.6px;top:664.61px;font-size:9.5px;line-height:9.5px;color:#e4e4e4;letter-spacing:-0.096px;">BSpline14</span>
<span style="left:1657.2px;top:664.61px;font-size:9.5px;line-height:9.5px;color:#e4e4e4;letter-spacing:-0.035px;">all</span>
<span style="left:1689.6px;top:664.61px;font-size:9.5px;line-height:9.5px;color:#e4e4e4;letter-spacing:-0.078px;">color</span>
<span style="left:1236.6px;top:675.93px;font-size:9.5px;line-height:9.5px;color:#e4e4e4;letter-spacing:-0.096px;">BSpline13</span>
<span style="left:1657.2px;top:675.93px;font-size:9.5px;line-height:9.5px;color:#e4e4e4;letter-spacing:-0.035px;">all</span>
<span style="left:1689.6px;top:675.93px;font-size:9.5px;line-height:9.5px;color:#e4e4e4;letter-spacing:-0.078px;">color</span>
<span style="left:1236.6px;top:687.24px;font-size:9.5px;line-height:9.5px;color:#e4e4e4;letter-spacing:-0.096px;">BSpline12</span>
<span style="left:1657.2px;top:687.24px;font-size:9.5px;line-height:9.5px;color:#e4e4e4;letter-spacing:-0.035px;">all</span>
<span style="left:1689.6px;top:687.24px;font-size:9.5px;line-height:9.5px;color:#e4e4e4;letter-spacing:-0.078px;">color</span>
<span style="left:1242.6px;top:894.25px;font-size:9.5px;line-height:9.5px;color:#e0e0e0;letter-spacing:0.011px;">Channel Count: 22 Localization Mode: Off&nbsp; Memory: 0.8 GB (10.4%) CPU: 2.1% Disk: 0.7 MB/s Network: 0.0 MB</span>
<svg width="1933" height="992" viewBox="0 0 1933 992">
<rect x="663.7" y="790.2" width="0" height="0"/>
<rect x="660.6" y="787.1" width="6.2" height="6.2" fill="#f7ef1a" stroke="#3a3a10" stroke-width="0.5" transform="rotate(21 663.7 790.2)"/>
<rect x="230" y="855" width="11" height="40" fill="#313131"/><rect x="241" y="855" width="1" height="40" fill="#202020"/>
<rect x="1716" y="76" width="34" height="826" fill="#000"/>
</svg>
</div>
</body></html>
